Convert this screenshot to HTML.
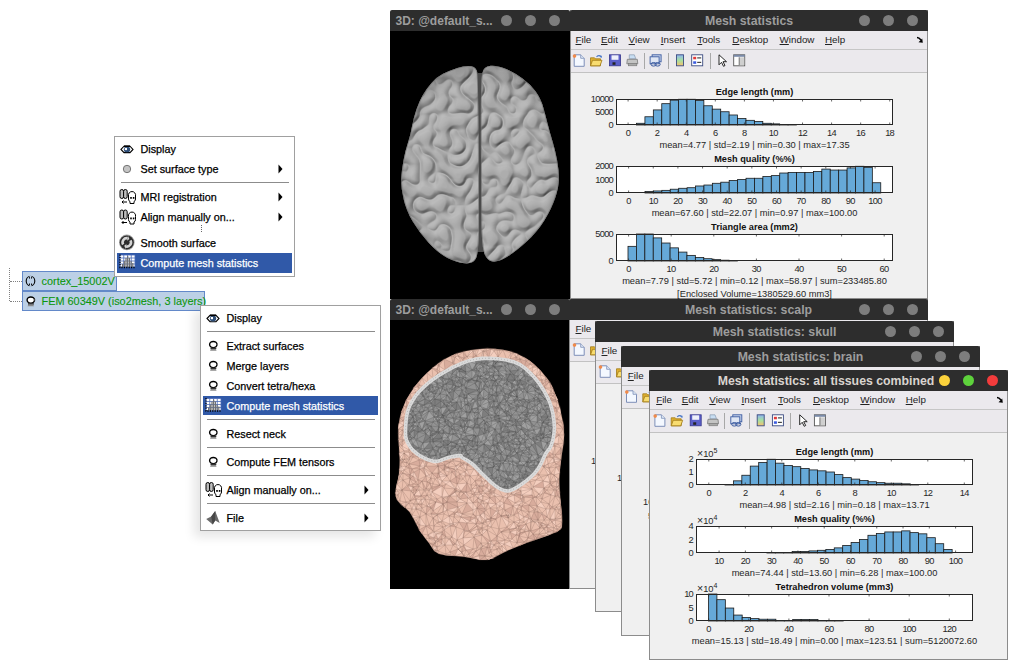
<!DOCTYPE html><html><head><meta charset="utf-8"><style>
*{margin:0;padding:0;box-sizing:content-box}
html,body{width:1018px;height:668px;overflow:hidden;background:#fff;position:relative;font-family:"Liberation Sans", sans-serif}
div{position:absolute}
.ttl{position:absolute;height:21px;line-height:23px;font-size:12.3px;font-weight:bold;white-space:nowrap}
.mb{position:absolute;font-size:9.8px;color:#222;white-space:nowrap;line-height:12px}
.mb u{text-decoration:underline;text-underline-offset:1px}
.tk{font-family:"Liberation Sans", sans-serif;font-size:9.3px;fill:#262626}
.tn{letter-spacing:-0.7px}
.tt{font-family:"Liberation Sans", sans-serif;font-size:9.2px;font-weight:bold;fill:#111}
.mi{position:absolute;font-size:10.8px;color:#000;white-space:nowrap;line-height:13px;-webkit-text-stroke:0.25px currentColor}
.tr{position:absolute;font-size:10.9px;color:#0c960c;white-space:nowrap;line-height:13px;-webkit-text-stroke:0.1px currentColor}
</style></head><body>
<div style="position:absolute;left:390px;top:10px;width:180px;height:21px;background:#2d2d2d;border-radius:2px 2px 0 0"></div><div class="ttl" style="left:395.5px;top:10px;color:#9d9d9d"><span style="font-size:12px">3D: @default_s...</span></div><div style="position:absolute;left:500.5px;top:15px;width:11px;height:11px;border-radius:50%;background:#7d7d7d"></div><div style="position:absolute;left:524.5px;top:15px;width:11px;height:11px;border-radius:50%;background:#7d7d7d"></div><div style="position:absolute;left:548.5px;top:15px;width:11px;height:11px;border-radius:50%;background:#7d7d7d"></div>
<svg style="position:absolute;left:390px;top:31px" width="180" height="268"><rect width="180" height="268" fill="#000"/><defs><clipPath id="hemis"><path d="M81.2,35.2 Q75.4,34.3 67.3,37.0 Q59.3,39.7 53.0,42.8 Q46.7,45.9 41.3,52.2 Q35.9,58.5 32.8,63.9 Q29.6,69.3 26.5,78.3 Q23.4,87.3 22.0,95.3 Q20.7,103.4 18.0,111.5 Q15.3,119.6 13.5,129.3 Q11.7,139.0 11.2,147.5 Q10.8,156.0 13.5,167.7 Q16.2,179.3 22.4,190.1 Q28.7,200.9 38.6,211.7 Q48.5,222.4 57.5,226.9 Q66.5,231.4 74.5,232.3 Q82.6,233.2 85.8,227.8 Q88.9,222.4 89.0,191.7 Q89.0,161.0 88.8,130.5 Q88.5,100.0 88.2,75.0 Q88.0,50.0 87.5,43.0 Q87.1,36.1 81.2,35.2Z"/><path d="M100.6,34.8 Q107.8,34.3 116.8,38.3 Q125.7,42.4 132.9,47.8 Q140.1,53.1 145.5,60.3 Q150.9,67.5 153.6,77.4 Q156.3,87.3 158.1,94.4 Q159.9,101.6 162.6,110.6 Q165.3,119.6 167.1,129.3 Q168.9,139.0 168.9,147.5 Q168.9,156.0 165.3,166.8 Q161.7,177.5 154.5,189.2 Q147.3,200.9 136.5,210.8 Q125.7,220.6 116.8,226.0 Q107.8,231.4 102.4,230.5 Q97.0,229.6 94.3,222.4 Q91.6,215.2 91.4,188.1 Q91.3,161.0 91.0,130.5 Q90.8,100.0 90.9,75.0 Q91.0,50.0 92.2,42.6 Q93.4,35.2 100.6,34.8Z"/></clipPath><radialGradient id="bg1" cx="0.5" cy="0.5" r="0.6"><stop offset="0" stop-color="#a8a8a8"/><stop offset="0.85" stop-color="#a0a0a0"/><stop offset="1" stop-color="#808080"/></radialGradient><filter id="blr" x="-10%" y="-10%" width="120%" height="120%"><feGaussianBlur stdDeviation="0.9"/></filter></defs><path d="M88,42 L92,42 L92.5,150 L93.5,221 L86.5,221 L87.5,150 Z" fill="#4a4a4a"/><g clip-path="url(#hemis)"><defs><filter id="gyri" x="0" y="0" width="180" height="268" filterUnits="userSpaceOnUse"><feTurbulence type="turbulence" baseFrequency="0.065 0.06" numOctaves="1" seed="2" result="t"/><feComponentTransfer in="t" result="a"><feFuncA type="table" tableValues="1 0.25 0 0 0"/></feComponentTransfer><feDiffuseLighting in="a" surfaceScale="-2.2" diffuseConstant="1.14" lighting-color="#b0b0b0" result="l"><feDistantLight azimuth="235" elevation="58"/></feDiffuseLighting></filter><radialGradient id="edg" cx="0.5" cy="0.52" r="0.56"><stop offset="0.75" stop-color="#000" stop-opacity="0"/><stop offset="1" stop-color="#000" stop-opacity="0.22"/></radialGradient></defs><rect width="180" height="268" filter="url(#gyri)"/><rect x="8" y="32" width="164" height="204" fill="url(#edg)"/><path d="M81.2,35.2 Q75.4,34.3 67.3,37.0 Q59.3,39.7 53.0,42.8 Q46.7,45.9 41.3,52.2 Q35.9,58.5 32.8,63.9 Q29.6,69.3 26.5,78.3 Q23.4,87.3 22.0,95.3 Q20.7,103.4 18.0,111.5 Q15.3,119.6 13.5,129.3 Q11.7,139.0 11.2,147.5 Q10.8,156.0 13.5,167.7 Q16.2,179.3 22.4,190.1 Q28.7,200.9 38.6,211.7 Q48.5,222.4 57.5,226.9 Q66.5,231.4 74.5,232.3 Q82.6,233.2 85.8,227.8 Q88.9,222.4 89.0,191.7 Q89.0,161.0 88.8,130.5 Q88.5,100.0 88.2,75.0 Q88.0,50.0 87.5,43.0 Q87.1,36.1 81.2,35.2Z" fill="none" stroke="#707070" stroke-width="1.6" opacity="0.7"/><path d="M100.6,34.8 Q107.8,34.3 116.8,38.3 Q125.7,42.4 132.9,47.8 Q140.1,53.1 145.5,60.3 Q150.9,67.5 153.6,77.4 Q156.3,87.3 158.1,94.4 Q159.9,101.6 162.6,110.6 Q165.3,119.6 167.1,129.3 Q168.9,139.0 168.9,147.5 Q168.9,156.0 165.3,166.8 Q161.7,177.5 154.5,189.2 Q147.3,200.9 136.5,210.8 Q125.7,220.6 116.8,226.0 Q107.8,231.4 102.4,230.5 Q97.0,229.6 94.3,222.4 Q91.6,215.2 91.4,188.1 Q91.3,161.0 91.0,130.5 Q90.8,100.0 90.9,75.0 Q91.0,50.0 92.2,42.6 Q93.4,35.2 100.6,34.8Z" fill="none" stroke="#707070" stroke-width="1.6" opacity="0.7"/></g></svg>
<div style="position:absolute;left:570px;top:10px;width:356px;height:288px;background:#f0f0f0;border:1px solid #8c8c8c;border-top:0"></div><div style="position:absolute;left:570px;top:10px;width:358px;height:21px;background:#2d2d2d;border-radius:2px 2px 0 0"></div><div class="ttl" style="left:570px;top:10px;width:358px;text-align:center;color:#9d9d9d">Mesh statistics</div><div style="position:absolute;left:858.5px;top:15px;width:11px;height:11px;border-radius:50%;background:#7d7d7d"></div><div style="position:absolute;left:882.5px;top:15px;width:11px;height:11px;border-radius:50%;background:#7d7d7d"></div><div style="position:absolute;left:906.5px;top:15px;width:11px;height:11px;border-radius:50%;background:#7d7d7d"></div><div style="position:absolute;left:571px;top:31px;width:356px;height:18px;background:#ebe9ed;border-bottom:1px solid #c6c6c6"></div><div class="mb" style="left:575.5px;top:34px"><u>F</u>ile</div><div class="mb" style="left:601px;top:34px"><u>E</u>dit</div><div class="mb" style="left:628.6px;top:34px"><u>V</u>iew</div><div class="mb" style="left:660.8px;top:34px"><u>I</u>nsert</div><div class="mb" style="left:697.3px;top:34px"><u>T</u>ools</div><div class="mb" style="left:732.3px;top:34px"><u>D</u>esktop</div><div class="mb" style="left:779.6px;top:34px"><u>W</u>indow</div><div class="mb" style="left:825px;top:34px"><u>H</u>elp</div><svg style="position:absolute;left:916px;top:36px" width="8" height="8"><path d="M1,1.5 Q3,1.5 5,4" fill="none" stroke="#000" stroke-width="1.6"/><path d="M6.8,6.8 L2.5,6.2 L6.2,2.5 Z" fill="#000"/></svg><div style="position:absolute;left:571px;top:50px;width:356px;height:22px;background:#ebe9ed;border-bottom:1px solid #c2c2c2"></div><svg style="position:absolute;left:570px;top:50px" width="358" height="22"><path d="M4.2,4.8 h6.5 l3.5,3.5 v8 h-10 z" fill="#f4f8ff" stroke="#7d8fb8" stroke-width="1"/><path d="M10.7,4.8 v3.5 h3.5" fill="#dde6f5" stroke="#7d8fb8" stroke-width="0.8"/><circle cx="4.5" cy="6.1" r="1.8" fill="#f08a4a"/><path d="M20.5,7.8 h4 l1,1 h5 v7 h-10 z" fill="#e0b030" stroke="#a07a18" stroke-width="0.8"/><path d="M20.5,15.8 l2,-5.5 h9.5 l-2,5.5 z" fill="#f8dc70" stroke="#a07a18" stroke-width="0.8"/><path d="M26.5,6.8 q2.5,-2.5 5,0" fill="none" stroke="#4a78c8" stroke-width="1.1"/><path d="M31.8,8.1 l-0.2,-2.6 l-2.2,1.2 z" fill="#4a78c8"/><rect x="39.5" y="4.8" width="11" height="11" fill="#5a5ec8" stroke="#34348a" stroke-width="0.8"/><rect x="41.5" y="5.3" width="7" height="4.5" fill="#eef0fa"/><rect x="42.5" y="12.3" width="3" height="2.5" fill="#222"/><path d="M59.3,4.8 h5 l1.5,4 h-6.5 z" fill="#c8ddf2" stroke="#8a9ab0" stroke-width="0.7"/><path d="M57.3,9.3 h10 l0.5,4.5 h-11 z" fill="#c4c4c4" stroke="#7a7a7a" stroke-width="0.8"/><rect x="58.3" y="13.3" width="8.5" height="2.5" fill="#a8a8a8" stroke="#777" stroke-width="0.6"/><line x1="74.5" y1="3" x2="74.5" y2="19" stroke="#a8a8a8" stroke-width="1"/><rect x="82.1" y="4.8" width="9" height="7" fill="#c8d4ec" stroke="#3a5aa0" stroke-width="0.9"/><rect x="80.1" y="6.8" width="9" height="7" fill="#dfe6f4" stroke="#3a5aa0" stroke-width="0.9"/><ellipse cx="83.6" cy="14.3" rx="2.6" ry="1.8" fill="none" stroke="#3a5aa0" stroke-width="1"/><ellipse cx="87.6" cy="14.3" rx="2.6" ry="1.8" fill="none" stroke="#3a5aa0" stroke-width="1"/><line x1="98.5" y1="3" x2="98.5" y2="19" stroke="#a8a8a8" stroke-width="1"/><defs><linearGradient id="cg1064" x1="0" y1="0" x2="0" y2="1"><stop offset="0" stop-color="#8fb4f0"/><stop offset="0.5" stop-color="#a6e0a0"/><stop offset="1" stop-color="#f5c070"/></linearGradient></defs><rect x="106.5" y="4.8" width="7" height="11" fill="url(#cg1064)" stroke="#3a4a80" stroke-width="0.9"/><rect x="121.7" y="4.8" width="11" height="11" fill="#fff" stroke="#3a4a80" stroke-width="0.9"/><rect x="123.2" y="6.8" width="3" height="2.5" fill="#e03a3a"/><rect x="123.2" y="11.3" width="3" height="2.5" fill="#3a5ae0"/><rect x="127.2" y="7.3" width="4" height="1.2" fill="#444"/><rect x="127.2" y="11.8" width="4" height="1.2" fill="#444"/><line x1="140.5" y1="3" x2="140.5" y2="19" stroke="#a8a8a8" stroke-width="1"/><path d="M149.0,4.8 v10 l2.5,-2.5 l2,4 l1.5,-0.8 l-2,-3.8 h3.5 z" fill="#fff" stroke="#111" stroke-width="0.9"/><rect x="163.7" y="4.8" width="11" height="11" fill="#fff" stroke="#555" stroke-width="0.9"/><rect x="163.7" y="4.8" width="11" height="2" fill="#7a8aa8"/><rect x="169.2" y="7.3" width="5" height="8" fill="#cfcfcf"/><line x1="169.2" y1="7.3" x2="169.2" y2="15.3" stroke="#555" stroke-width="0.8"/></svg>
<svg style="position:absolute;left:0;top:0" width="1018" height="668"><rect x="616" y="99" width="277" height="26" fill="#fff"/><rect x="636.50" y="123.28" width="8.42" height="1.72" fill="#66a9d8" stroke="#1a1a1a" stroke-width="0.8"/><rect x="644.92" y="116.76" width="8.42" height="8.24" fill="#66a9d8" stroke="#1a1a1a" stroke-width="0.8"/><rect x="653.34" y="109.92" width="8.42" height="15.08" fill="#66a9d8" stroke="#1a1a1a" stroke-width="0.8"/><rect x="661.76" y="103.68" width="8.42" height="21.32" fill="#66a9d8" stroke="#1a1a1a" stroke-width="0.8"/><rect x="670.18" y="100.17" width="8.42" height="24.83" fill="#66a9d8" stroke="#1a1a1a" stroke-width="0.8"/><rect x="678.60" y="99.26" width="8.42" height="25.74" fill="#66a9d8" stroke="#1a1a1a" stroke-width="0.8"/><rect x="687.02" y="99.26" width="8.42" height="25.74" fill="#66a9d8" stroke="#1a1a1a" stroke-width="0.8"/><rect x="695.44" y="100.56" width="8.42" height="24.44" fill="#66a9d8" stroke="#1a1a1a" stroke-width="0.8"/><rect x="703.86" y="105.76" width="8.42" height="19.24" fill="#66a9d8" stroke="#1a1a1a" stroke-width="0.8"/><rect x="712.28" y="109.14" width="8.42" height="15.86" fill="#66a9d8" stroke="#1a1a1a" stroke-width="0.8"/><rect x="720.70" y="111.74" width="8.42" height="13.26" fill="#66a9d8" stroke="#1a1a1a" stroke-width="0.8"/><rect x="729.12" y="114.99" width="8.42" height="10.01" fill="#66a9d8" stroke="#1a1a1a" stroke-width="0.8"/><rect x="737.54" y="118.50" width="8.42" height="6.50" fill="#66a9d8" stroke="#1a1a1a" stroke-width="0.8"/><rect x="745.96" y="120.32" width="8.42" height="4.68" fill="#66a9d8" stroke="#1a1a1a" stroke-width="0.8"/><rect x="754.38" y="121.52" width="8.42" height="3.48" fill="#66a9d8" stroke="#1a1a1a" stroke-width="0.8"/><rect x="762.80" y="123.28" width="8.42" height="1.72" fill="#66a9d8" stroke="#1a1a1a" stroke-width="0.8"/><rect x="771.22" y="123.88" width="8.42" height="1.12" fill="#66a9d8" stroke="#1a1a1a" stroke-width="0.8"/><rect x="779.64" y="124.48" width="8.42" height="0.52" fill="#66a9d8" stroke="#1a1a1a" stroke-width="0.8"/><rect x="788.06" y="124.74" width="8.42" height="0.26" fill="#66a9d8" stroke="#1a1a1a" stroke-width="0.8"/><rect x="616.5" y="99.5" width="276" height="25" fill="none" stroke="#262626" stroke-width="1"/><line x1="628.10" y1="125" x2="628.10" y2="122.5" stroke="#262626" stroke-width="0.7"/><line x1="628.10" y1="99" x2="628.10" y2="101.5" stroke="#262626" stroke-width="0.7"/><text x="628.00" y="135.5" text-anchor="middle" class="tk tn">0</text><line x1="657.17" y1="125" x2="657.17" y2="122.5" stroke="#262626" stroke-width="0.7"/><line x1="657.17" y1="99" x2="657.17" y2="101.5" stroke="#262626" stroke-width="0.7"/><text x="657.07" y="135.5" text-anchor="middle" class="tk tn">2</text><line x1="686.24" y1="125" x2="686.24" y2="122.5" stroke="#262626" stroke-width="0.7"/><line x1="686.24" y1="99" x2="686.24" y2="101.5" stroke="#262626" stroke-width="0.7"/><text x="686.14" y="135.5" text-anchor="middle" class="tk tn">4</text><line x1="715.31" y1="125" x2="715.31" y2="122.5" stroke="#262626" stroke-width="0.7"/><line x1="715.31" y1="99" x2="715.31" y2="101.5" stroke="#262626" stroke-width="0.7"/><text x="715.21" y="135.5" text-anchor="middle" class="tk tn">6</text><line x1="744.38" y1="125" x2="744.38" y2="122.5" stroke="#262626" stroke-width="0.7"/><line x1="744.38" y1="99" x2="744.38" y2="101.5" stroke="#262626" stroke-width="0.7"/><text x="744.28" y="135.5" text-anchor="middle" class="tk tn">8</text><line x1="773.45" y1="125" x2="773.45" y2="122.5" stroke="#262626" stroke-width="0.7"/><line x1="773.45" y1="99" x2="773.45" y2="101.5" stroke="#262626" stroke-width="0.7"/><text x="773.35" y="135.5" text-anchor="middle" class="tk tn">10</text><line x1="802.52" y1="125" x2="802.52" y2="122.5" stroke="#262626" stroke-width="0.7"/><line x1="802.52" y1="99" x2="802.52" y2="101.5" stroke="#262626" stroke-width="0.7"/><text x="802.42" y="135.5" text-anchor="middle" class="tk tn">12</text><line x1="831.59" y1="125" x2="831.59" y2="122.5" stroke="#262626" stroke-width="0.7"/><line x1="831.59" y1="99" x2="831.59" y2="101.5" stroke="#262626" stroke-width="0.7"/><text x="831.49" y="135.5" text-anchor="middle" class="tk tn">14</text><line x1="860.66" y1="125" x2="860.66" y2="122.5" stroke="#262626" stroke-width="0.7"/><line x1="860.66" y1="99" x2="860.66" y2="101.5" stroke="#262626" stroke-width="0.7"/><text x="860.56" y="135.5" text-anchor="middle" class="tk tn">16</text><line x1="889.73" y1="125" x2="889.73" y2="122.5" stroke="#262626" stroke-width="0.7"/><line x1="889.73" y1="99" x2="889.73" y2="101.5" stroke="#262626" stroke-width="0.7"/><text x="889.63" y="135.5" text-anchor="middle" class="tk tn">18</text><text x="613.1" y="102.20" text-anchor="end" class="tk tn">10000</text><text x="613.1" y="115.20" text-anchor="end" class="tk tn">5000</text><text x="613.1" y="128.20" text-anchor="end" class="tk tn">0</text><text x="754.5" y="94.5" text-anchor="middle" class="tt">Edge length (mm)</text><text x="754.5" y="148.0" text-anchor="middle" class="tk">mean=4.77 | std=2.19 | min=0.30 | max=17.35</text><rect x="616" y="166" width="277" height="27" fill="#fff"/><rect x="645.00" y="191.51" width="8.42" height="1.49" fill="#66a9d8" stroke="#1a1a1a" stroke-width="0.8"/><rect x="653.42" y="190.95" width="8.42" height="2.05" fill="#66a9d8" stroke="#1a1a1a" stroke-width="0.8"/><rect x="661.84" y="190.35" width="8.42" height="2.65" fill="#66a9d8" stroke="#1a1a1a" stroke-width="0.8"/><rect x="670.26" y="189.22" width="8.42" height="3.78" fill="#66a9d8" stroke="#1a1a1a" stroke-width="0.8"/><rect x="678.68" y="188.28" width="8.42" height="4.72" fill="#66a9d8" stroke="#1a1a1a" stroke-width="0.8"/><rect x="687.10" y="187.71" width="8.42" height="5.29" fill="#66a9d8" stroke="#1a1a1a" stroke-width="0.8"/><rect x="695.52" y="185.98" width="8.42" height="7.02" fill="#66a9d8" stroke="#1a1a1a" stroke-width="0.8"/><rect x="703.94" y="185.03" width="8.42" height="7.96" fill="#66a9d8" stroke="#1a1a1a" stroke-width="0.8"/><rect x="712.36" y="183.28" width="8.42" height="9.72" fill="#66a9d8" stroke="#1a1a1a" stroke-width="0.8"/><rect x="720.78" y="182.20" width="8.42" height="10.80" fill="#66a9d8" stroke="#1a1a1a" stroke-width="0.8"/><rect x="729.20" y="180.58" width="8.42" height="12.42" fill="#66a9d8" stroke="#1a1a1a" stroke-width="0.8"/><rect x="737.62" y="179.50" width="8.42" height="13.50" fill="#66a9d8" stroke="#1a1a1a" stroke-width="0.8"/><rect x="746.04" y="178.26" width="8.42" height="14.74" fill="#66a9d8" stroke="#1a1a1a" stroke-width="0.8"/><rect x="754.46" y="178.26" width="8.42" height="14.74" fill="#66a9d8" stroke="#1a1a1a" stroke-width="0.8"/><rect x="762.88" y="176.53" width="8.42" height="16.47" fill="#66a9d8" stroke="#1a1a1a" stroke-width="0.8"/><rect x="771.30" y="175.61" width="8.42" height="17.39" fill="#66a9d8" stroke="#1a1a1a" stroke-width="0.8"/><rect x="779.72" y="173.02" width="8.42" height="19.98" fill="#66a9d8" stroke="#1a1a1a" stroke-width="0.8"/><rect x="788.14" y="172.48" width="8.42" height="20.52" fill="#66a9d8" stroke="#1a1a1a" stroke-width="0.8"/><rect x="796.56" y="172.48" width="8.42" height="20.52" fill="#66a9d8" stroke="#1a1a1a" stroke-width="0.8"/><rect x="804.98" y="172.48" width="8.42" height="20.52" fill="#66a9d8" stroke="#1a1a1a" stroke-width="0.8"/><rect x="813.40" y="171.40" width="8.42" height="21.60" fill="#66a9d8" stroke="#1a1a1a" stroke-width="0.8"/><rect x="821.82" y="169.08" width="8.42" height="23.92" fill="#66a9d8" stroke="#1a1a1a" stroke-width="0.8"/><rect x="830.24" y="170.05" width="8.42" height="22.95" fill="#66a9d8" stroke="#1a1a1a" stroke-width="0.8"/><rect x="838.66" y="170.05" width="8.42" height="22.95" fill="#66a9d8" stroke="#1a1a1a" stroke-width="0.8"/><rect x="847.08" y="167.89" width="8.42" height="25.11" fill="#66a9d8" stroke="#1a1a1a" stroke-width="0.8"/><rect x="855.50" y="166.27" width="8.42" height="26.73" fill="#66a9d8" stroke="#1a1a1a" stroke-width="0.8"/><rect x="863.92" y="167.35" width="8.42" height="25.65" fill="#66a9d8" stroke="#1a1a1a" stroke-width="0.8"/><rect x="872.34" y="182.74" width="8.42" height="10.26" fill="#66a9d8" stroke="#1a1a1a" stroke-width="0.8"/><rect x="616.5" y="166.5" width="276" height="26" fill="none" stroke="#262626" stroke-width="1"/><line x1="628.60" y1="193" x2="628.60" y2="190.5" stroke="#262626" stroke-width="0.7"/><line x1="628.60" y1="166" x2="628.60" y2="168.5" stroke="#262626" stroke-width="0.7"/><text x="628.50" y="203.5" text-anchor="middle" class="tk tn">0</text><line x1="653.25" y1="193" x2="653.25" y2="190.5" stroke="#262626" stroke-width="0.7"/><line x1="653.25" y1="166" x2="653.25" y2="168.5" stroke="#262626" stroke-width="0.7"/><text x="653.15" y="203.5" text-anchor="middle" class="tk tn">10</text><line x1="677.90" y1="193" x2="677.90" y2="190.5" stroke="#262626" stroke-width="0.7"/><line x1="677.90" y1="166" x2="677.90" y2="168.5" stroke="#262626" stroke-width="0.7"/><text x="677.80" y="203.5" text-anchor="middle" class="tk tn">20</text><line x1="702.55" y1="193" x2="702.55" y2="190.5" stroke="#262626" stroke-width="0.7"/><line x1="702.55" y1="166" x2="702.55" y2="168.5" stroke="#262626" stroke-width="0.7"/><text x="702.45" y="203.5" text-anchor="middle" class="tk tn">30</text><line x1="727.20" y1="193" x2="727.20" y2="190.5" stroke="#262626" stroke-width="0.7"/><line x1="727.20" y1="166" x2="727.20" y2="168.5" stroke="#262626" stroke-width="0.7"/><text x="727.10" y="203.5" text-anchor="middle" class="tk tn">40</text><line x1="751.85" y1="193" x2="751.85" y2="190.5" stroke="#262626" stroke-width="0.7"/><line x1="751.85" y1="166" x2="751.85" y2="168.5" stroke="#262626" stroke-width="0.7"/><text x="751.75" y="203.5" text-anchor="middle" class="tk tn">50</text><line x1="776.50" y1="193" x2="776.50" y2="190.5" stroke="#262626" stroke-width="0.7"/><line x1="776.50" y1="166" x2="776.50" y2="168.5" stroke="#262626" stroke-width="0.7"/><text x="776.40" y="203.5" text-anchor="middle" class="tk tn">60</text><line x1="801.15" y1="193" x2="801.15" y2="190.5" stroke="#262626" stroke-width="0.7"/><line x1="801.15" y1="166" x2="801.15" y2="168.5" stroke="#262626" stroke-width="0.7"/><text x="801.05" y="203.5" text-anchor="middle" class="tk tn">70</text><line x1="825.80" y1="193" x2="825.80" y2="190.5" stroke="#262626" stroke-width="0.7"/><line x1="825.80" y1="166" x2="825.80" y2="168.5" stroke="#262626" stroke-width="0.7"/><text x="825.70" y="203.5" text-anchor="middle" class="tk tn">80</text><line x1="850.45" y1="193" x2="850.45" y2="190.5" stroke="#262626" stroke-width="0.7"/><line x1="850.45" y1="166" x2="850.45" y2="168.5" stroke="#262626" stroke-width="0.7"/><text x="850.35" y="203.5" text-anchor="middle" class="tk tn">90</text><line x1="875.10" y1="193" x2="875.10" y2="190.5" stroke="#262626" stroke-width="0.7"/><line x1="875.10" y1="166" x2="875.10" y2="168.5" stroke="#262626" stroke-width="0.7"/><text x="875.00" y="203.5" text-anchor="middle" class="tk tn">100</text><text x="613.1" y="169.20" text-anchor="end" class="tk tn">2000</text><text x="613.1" y="182.70" text-anchor="end" class="tk tn">1000</text><text x="613.1" y="196.20" text-anchor="end" class="tk tn">0</text><text x="754.5" y="161.5" text-anchor="middle" class="tt">Mesh quality (%%)</text><text x="754.5" y="216.0" text-anchor="middle" class="tk">mean=67.60 | std=22.07 | min=0.97 | max=100.00</text><rect x="616" y="234" width="277" height="27" fill="#fff"/><rect x="628.00" y="246.34" width="8.42" height="14.66" fill="#66a9d8" stroke="#1a1a1a" stroke-width="0.8"/><rect x="636.42" y="234.00" width="8.42" height="27.00" fill="#66a9d8" stroke="#1a1a1a" stroke-width="0.8"/><rect x="644.84" y="234.00" width="8.42" height="27.00" fill="#66a9d8" stroke="#1a1a1a" stroke-width="0.8"/><rect x="653.26" y="237.89" width="8.42" height="23.11" fill="#66a9d8" stroke="#1a1a1a" stroke-width="0.8"/><rect x="661.68" y="243.02" width="8.42" height="17.98" fill="#66a9d8" stroke="#1a1a1a" stroke-width="0.8"/><rect x="670.10" y="247.85" width="8.42" height="13.15" fill="#66a9d8" stroke="#1a1a1a" stroke-width="0.8"/><rect x="678.52" y="252.09" width="8.42" height="8.91" fill="#66a9d8" stroke="#1a1a1a" stroke-width="0.8"/><rect x="686.94" y="255.38" width="8.42" height="5.62" fill="#66a9d8" stroke="#1a1a1a" stroke-width="0.8"/><rect x="695.36" y="257.49" width="8.42" height="3.51" fill="#66a9d8" stroke="#1a1a1a" stroke-width="0.8"/><rect x="703.78" y="258.70" width="8.42" height="2.30" fill="#66a9d8" stroke="#1a1a1a" stroke-width="0.8"/><rect x="712.20" y="259.65" width="8.42" height="1.35" fill="#66a9d8" stroke="#1a1a1a" stroke-width="0.8"/><rect x="720.62" y="260.19" width="8.42" height="0.81" fill="#66a9d8" stroke="#1a1a1a" stroke-width="0.8"/><rect x="729.04" y="260.51" width="8.42" height="0.49" fill="#66a9d8" stroke="#1a1a1a" stroke-width="0.8"/><rect x="616.5" y="234.5" width="276" height="26" fill="none" stroke="#262626" stroke-width="1"/><line x1="628.60" y1="261" x2="628.60" y2="258.5" stroke="#262626" stroke-width="0.7"/><line x1="628.60" y1="234" x2="628.60" y2="236.5" stroke="#262626" stroke-width="0.7"/><text x="628.50" y="271.5" text-anchor="middle" class="tk tn">0</text><line x1="671.20" y1="261" x2="671.20" y2="258.5" stroke="#262626" stroke-width="0.7"/><line x1="671.20" y1="234" x2="671.20" y2="236.5" stroke="#262626" stroke-width="0.7"/><text x="671.10" y="271.5" text-anchor="middle" class="tk tn">10</text><line x1="713.80" y1="261" x2="713.80" y2="258.5" stroke="#262626" stroke-width="0.7"/><line x1="713.80" y1="234" x2="713.80" y2="236.5" stroke="#262626" stroke-width="0.7"/><text x="713.70" y="271.5" text-anchor="middle" class="tk tn">20</text><line x1="756.40" y1="261" x2="756.40" y2="258.5" stroke="#262626" stroke-width="0.7"/><line x1="756.40" y1="234" x2="756.40" y2="236.5" stroke="#262626" stroke-width="0.7"/><text x="756.30" y="271.5" text-anchor="middle" class="tk tn">30</text><line x1="799.00" y1="261" x2="799.00" y2="258.5" stroke="#262626" stroke-width="0.7"/><line x1="799.00" y1="234" x2="799.00" y2="236.5" stroke="#262626" stroke-width="0.7"/><text x="798.90" y="271.5" text-anchor="middle" class="tk tn">40</text><line x1="841.60" y1="261" x2="841.60" y2="258.5" stroke="#262626" stroke-width="0.7"/><line x1="841.60" y1="234" x2="841.60" y2="236.5" stroke="#262626" stroke-width="0.7"/><text x="841.50" y="271.5" text-anchor="middle" class="tk tn">50</text><line x1="884.20" y1="261" x2="884.20" y2="258.5" stroke="#262626" stroke-width="0.7"/><line x1="884.20" y1="234" x2="884.20" y2="236.5" stroke="#262626" stroke-width="0.7"/><text x="884.10" y="271.5" text-anchor="middle" class="tk tn">60</text><text x="613.1" y="237.20" text-anchor="end" class="tk tn">5000</text><text x="613.1" y="264.20" text-anchor="end" class="tk tn">0</text><text x="754.5" y="229.5" text-anchor="middle" class="tt">Triangle area (mm2)</text><text x="754.5" y="284.0" text-anchor="middle" class="tk">mean=7.79 | std=5.72 | min=0.12 | max=58.97 | sum=233485.80</text><text x="754.5" y="296.8" text-anchor="middle" class="tk">[Enclosed Volume=1380529.60 mm3]</text></svg>
<div style="position:absolute;left:390px;top:299px;width:180px;height:21px;background:#2d2d2d;border-radius:2px 2px 0 0"></div><div class="ttl" style="left:395.5px;top:299px;color:#9d9d9d"><span style="font-size:12px">3D: @default_s...</span></div><div style="position:absolute;left:500.5px;top:304px;width:11px;height:11px;border-radius:50%;background:#7d7d7d"></div><div style="position:absolute;left:524.5px;top:304px;width:11px;height:11px;border-radius:50%;background:#7d7d7d"></div><div style="position:absolute;left:548.5px;top:304px;width:11px;height:11px;border-radius:50%;background:#7d7d7d"></div>
<svg style="position:absolute;left:390px;top:320px" width="180" height="269"><rect width="180" height="269" fill="#000"/><path d="M97.3,28.5 L105.2,28.8 L113.1,29.7 L120.6,31.4 L127.5,33.9 L134.0,37.2 L140.1,41.1 L145.8,45.8 L151.1,51.1 L155.7,56.7 L159.5,62.3 L162.7,68.1 L165.4,74.2 L167.7,80.5 L169.6,87.0 L171.2,93.7 L172.6,100.6 L173.7,107.7 L174.2,115.1 L173.6,123.2 L172.3,131.6 L171.2,139.5 L170.4,146.3 L169.7,152.6 L169.3,158.9 L169.4,165.3 L169.8,171.6 L170.3,178.4 L171.1,186.4 L172.0,194.8 L172.2,201.7 L172.0,205.9 L171.1,208.6 L167.3,211.5 L158.4,215.4 L146.7,219.4 L136.2,223.1 L128.9,225.9 L122.8,228.4 L116.8,230.9 L110.5,234.2 L104.1,237.6 L97.3,239.7 L89.9,239.6 L82.0,238.2 L73.9,236.8 L65.0,236.1 L55.9,235.4 L48.6,233.8 L44.2,230.9 L41.6,227.2 L38.9,223.1 L35.7,218.9 L32.4,214.4 L29.2,209.5 L26.1,203.8 L22.9,197.6 L19.5,192.0 L15.1,187.6 L10.4,183.8 L7.0,180.0 L5.6,176.2 L5.5,172.5 L5.8,168.6 L6.6,164.3 L7.8,159.8 L8.8,155.0 L9.3,150.1 L9.6,145.0 L9.7,139.5 L9.4,133.2 L8.9,126.4 L8.5,120.0 L8.3,114.3 L8.3,108.9 L8.8,103.4 L9.9,97.6 L11.5,91.8 L13.6,85.9 L16.4,80.0 L19.7,74.1 L23.4,68.4 L27.5,63.0 L32.0,57.8 L37.0,52.8 L42.5,47.9 L48.4,43.2 L54.5,39.2 L60.7,36.0 L67.1,33.4 L73.9,31.4 L81.4,29.9 L89.4,28.9 Z" fill="#eac0ae"/><path d="M20,155 20,159 20,158ZM90,74 91,72 96,73ZM74,210 75,211 73,218ZM128,125 128,124 135,126ZM47,227 43,225 45,224ZM74,173 78,178 70,179ZM19,130 17,120 25,129ZM14,86 13,92 11,92ZM40,90 39,92 37,83ZM46,104 48,106 44,108ZM81,197 85,198 80,201ZM131,137 136,140 129,139ZM111,129 116,132 117,136ZM33,141 29,140 34,135ZM75,156 75,152 80,156ZM160,80 166,80 167,82ZM88,209 87,206 92,208ZM22,79 16,80 20,74ZM105,67 101,67 100,59ZM34,178 31,176 37,175ZM60,142 55,145 53,141ZM108,56 112,49 113,50ZM78,121 81,123 79,126ZM92,180 92,181 88,178ZM133,87 137,84 138,87ZM90,55 89,53 90,52ZM131,62 126,60 134,57ZM92,208 93,210 89,210ZM107,30 108,30 110,30ZM85,54 86,58 83,57ZM60,206 63,204 64,205ZM68,187 57,190 57,182ZM87,142 84,147 83,143ZM161,78 166,80 160,80ZM116,154 116,151 118,150ZM66,207 60,206 64,205ZM101,174 101,172 104,173ZM111,87 121,92 111,90ZM9,109 8,109 14,105ZM66,157 70,154 70,159ZM50,115 56,114 50,118ZM149,121 154,117 150,124ZM36,169 35,171 34,170ZM85,175 82,174 85,173ZM78,67 67,64 79,66ZM65,125 68,123 71,129ZM128,118 128,120 125,118ZM126,37 123,33 125,33ZM123,48 115,48 122,44ZM60,219 59,219 62,217ZM43,58 43,58 48,53ZM156,104 153,106 152,103ZM115,151 115,152 116,154ZM48,153 47,158 42,153ZM70,146 71,143 73,145ZM164,155 161,154 161,153ZM31,176 25,177 24,175ZM71,56 66,58 70,54ZM59,50 56,58 55,50ZM48,231 45,230 47,227ZM73,32 77,37 74,38ZM106,184 100,188 98,183ZM109,227 110,229 107,229ZM156,104 150,100 158,100ZM151,206 150,204 152,205ZM126,105 115,101 122,96ZM81,132 81,133 75,132ZM157,207 158,205 164,208ZM72,194 67,192 69,189ZM71,129 73,126 75,132ZM68,119 67,122 65,122ZM91,157 92,161 85,161ZM113,58 113,59 110,59ZM129,206 136,204 131,209ZM111,95 107,98 104,89ZM49,154 50,152 57,156ZM68,119 65,122 66,116ZM166,161 161,165 160,162ZM97,227 95,236 91,229ZM19,165 23,164 23,167ZM138,87 137,84 140,85ZM77,110 86,111 79,113ZM32,114 35,116 31,120ZM163,213 163,211 167,212ZM87,206 80,212 79,211ZM82,174 85,175 84,176ZM133,85 133,87 129,83ZM109,223 104,225 107,221ZM99,38 104,31 108,37ZM102,106 107,109 100,115ZM152,207 151,206 152,205ZM84,87 82,93 78,84ZM132,89 133,87 135,91ZM53,184 52,177 53,178ZM144,118 143,122 139,119ZM163,134 160,136 156,130ZM20,137 19,140 19,138ZM111,196 106,199 108,193ZM93,113 96,114 93,114ZM93,50 91,49 94,47ZM68,133 71,129 70,133ZM61,121 62,122 60,124ZM66,168 65,170 65,169ZM93,181 100,178 98,183ZM71,197 77,203 69,202ZM167,162 169,159 169,165ZM98,68 88,63 93,60ZM137,74 142,79 139,82ZM123,186 114,183 117,178ZM82,93 85,97 74,100ZM87,81 86,88 84,87ZM65,172 65,172 67,171ZM129,211 131,209 130,213ZM170,183 170,178 171,186ZM143,113 139,113 144,111ZM46,97 47,93 49,95ZM111,212 107,216 109,209ZM109,113 102,117 100,115ZM163,134 161,127 165,126ZM46,141 50,142 48,146ZM130,213 135,211 135,212ZM85,64 83,65 83,61ZM62,76 61,71 64,71ZM131,151 132,150 134,154ZM136,41 134,48 130,39ZM147,67 144,62 151,63ZM23,98 23,97 25,95ZM114,51 108,56 113,50ZM47,113 49,115 46,117ZM171,134 171,133 171,140ZM65,37 68,36 72,43ZM94,47 91,49 92,43ZM48,146 50,142 55,145ZM49,117 49,115 50,115ZM130,200 128,193 134,197ZM161,98 158,100 158,93ZM48,101 51,97 54,100ZM129,226 134,222 136,223ZM137,149 137,146 139,147ZM59,148 58,147 64,149ZM138,57 134,52 137,50ZM84,139 87,142 83,143ZM67,66 64,64 67,64ZM59,113 58,107 62,110ZM76,172 78,178 74,173ZM36,124 35,127 30,127ZM88,182 83,183 88,178ZM43,191 42,188 46,182ZM53,184 43,191 46,182ZM99,149 98,147 101,148ZM19,148 16,147 19,144ZM123,123 115,122 123,123ZM99,233 101,230 101,232ZM133,85 129,82 132,78ZM13,153 20,155 20,158ZM162,126 164,124 165,126ZM43,117 40,121 39,119ZM43,191 47,194 41,194ZM22,149 19,148 19,144ZM53,184 54,186 53,192ZM70,137 72,133 75,132ZM22,149 20,155 19,148ZM136,98 136,96 142,95ZM171,195 168,193 172,195ZM48,43 49,44 48,45ZM104,155 108,157 105,157ZM113,158 110,154 116,154ZM95,236 89,235 91,229ZM151,63 152,60 153,64ZM142,79 137,74 142,79ZM44,218 45,221 39,218ZM63,94 63,98 61,97ZM41,168 40,163 42,167ZM93,97 91,96 95,95ZM79,67 83,65 84,68ZM109,152 109,154 104,155ZM145,202 148,202 150,208ZM101,224 100,228 98,223ZM106,84 102,88 99,86ZM160,92 166,88 167,91ZM67,83 62,76 69,79ZM30,149 22,149 30,146ZM52,212 54,210 56,217ZM12,126 17,120 19,130ZM142,61 138,57 146,56ZM100,221 98,223 92,215ZM33,96 28,96 34,95ZM104,55 101,56 105,52ZM50,52 49,46 55,50ZM67,164 77,163 71,171ZM77,107 77,110 75,106ZM23,97 17,96 21,87ZM150,143 154,146 154,147ZM83,190 72,194 77,183ZM129,216 130,213 135,212ZM142,201 141,199 143,201ZM73,40 68,36 74,38ZM140,211 141,202 141,211ZM123,186 121,195 115,190ZM64,194 67,192 65,194ZM22,79 26,72 24,79ZM146,104 145,105 145,100ZM48,219 52,214 52,219ZM132,161 131,154 134,154ZM84,45 84,46 82,47ZM52,166 56,164 54,168ZM115,148 113,150 112,146ZM134,48 127,46 130,39ZM171,128 171,134 165,135ZM154,128 153,126 157,128ZM45,223 45,221 46,221ZM103,75 102,75 101,75ZM38,215 44,218 39,218ZM100,132 98,124 108,127ZM74,44 71,46 72,43ZM160,122 160,120 161,121ZM88,97 93,97 86,106ZM36,169 34,170 32,161ZM134,48 136,41 140,44ZM134,222 138,218 137,221ZM148,119 143,122 144,118ZM22,85 17,86 16,80ZM137,118 139,113 141,115ZM162,187 165,189 160,189ZM96,73 98,68 101,75ZM100,178 105,176 106,184ZM42,90 40,92 40,90ZM160,122 157,128 155,124ZM94,192 96,190 94,193ZM88,115 90,121 83,119ZM49,152 48,153 48,146ZM120,136 122,139 117,142ZM32,80 26,72 28,71ZM100,170 101,163 104,167ZM107,188 106,184 110,186ZM87,168 85,173 82,169ZM42,90 43,82 49,83ZM54,186 57,190 53,192ZM70,172 71,171 72,172ZM116,118 123,123 115,119ZM86,64 85,68 85,64ZM108,37 108,43 105,42ZM94,47 99,47 96,51ZM59,89 63,94 57,92ZM88,155 88,155 91,157ZM143,178 145,177 146,177ZM131,209 129,211 129,209ZM121,92 111,95 111,90ZM83,128 81,132 79,126ZM142,79 142,82 139,82ZM54,150 55,146 56,147ZM15,187 17,184 15,188ZM147,218 145,220 143,214ZM13,153 9,155 11,151ZM85,130 87,131 87,133ZM110,108 107,109 110,103ZM97,122 92,127 95,120ZM53,184 46,182 47,179ZM96,73 91,72 91,71ZM43,117 42,113 46,117ZM52,71 52,65 57,68ZM129,185 123,186 125,183ZM158,75 161,73 163,76ZM96,90 96,88 102,88ZM170,189 171,186 172,195ZM104,47 99,47 105,46ZM89,172 85,175 85,173ZM91,96 88,97 86,88ZM157,206 152,203 158,205ZM166,88 157,90 158,83ZM147,140 142,140 140,136ZM142,79 137,74 138,71ZM132,150 131,151 125,148ZM164,124 161,122 168,124ZM132,150 136,150 134,154ZM165,200 165,199 172,198ZM166,170 168,176 165,176ZM110,142 117,136 117,142ZM128,206 129,206 129,209ZM146,79 150,80 151,86ZM164,137 165,135 171,140ZM101,163 99,157 105,157ZM77,163 76,172 71,171ZM63,43 55,50 54,39ZM107,125 98,123 107,120ZM160,62 163,68 161,68ZM73,226 74,225 76,230ZM89,172 89,166 93,171ZM75,70 75,76 68,76ZM154,209 158,212 156,213ZM109,154 108,157 104,155ZM153,161 158,155 160,162ZM125,41 127,39 130,39ZM69,136 70,133 70,137ZM132,150 125,148 129,139ZM126,215 130,213 129,216ZM35,116 38,121 31,120ZM122,44 120,41 125,41ZM136,204 140,211 139,211ZM86,64 86,58 88,63ZM60,124 60,124 59,125ZM154,117 155,124 150,124ZM161,154 158,155 160,153ZM47,195 43,198 43,198ZM127,189 128,193 124,195ZM48,146 42,153 36,146ZM114,183 115,190 113,189ZM117,207 119,209 111,212ZM65,131 62,128 65,127ZM143,167 153,161 154,168ZM65,170 66,168 67,171ZM88,200 86,204 86,204ZM83,51 83,57 76,52ZM105,74 103,75 105,67ZM100,170 104,171 101,172ZM67,164 66,157 70,159ZM60,176 67,182 57,182ZM69,114 66,116 67,110ZM136,140 136,137 138,137ZM19,111 21,110 19,112ZM77,203 71,197 80,201ZM116,78 119,83 113,81ZM48,125 49,117 50,118ZM101,230 100,228 104,225ZM74,100 76,104 75,106ZM49,107 48,110 44,108ZM152,194 157,197 154,200ZM130,165 126,165 127,162ZM136,137 133,136 134,133ZM91,174 89,172 93,171ZM16,96 16,87 21,87ZM40,97 40,92 45,96ZM8,171 8,175 5,173ZM129,185 127,189 123,186ZM23,101 28,96 30,98ZM62,152 59,148 64,149ZM129,68 131,64 138,71ZM90,113 94,115 90,121ZM139,185 146,189 144,190ZM55,122 54,125 48,125ZM54,150 56,147 59,148ZM174,108 171,102 173,101ZM50,142 46,141 48,134ZM53,150 48,146 55,145ZM52,219 52,224 48,221ZM71,56 76,52 71,56ZM157,206 157,207 154,208ZM12,170 8,171 6,169ZM137,100 136,110 135,101ZM168,176 166,170 170,172ZM142,175 145,177 143,178ZM95,173 99,174 100,178ZM144,65 140,69 140,66ZM73,226 76,230 72,232ZM32,184 28,184 28,184ZM12,115 12,110 14,112ZM131,179 131,175 133,177ZM138,140 136,140 138,137ZM161,104 164,106 156,112ZM49,61 45,62 43,58ZM75,76 75,70 77,74ZM40,97 40,100 37,99ZM170,207 172,202 172,206ZM42,172 42,169 50,165ZM113,108 113,105 123,109ZM147,218 149,214 154,216ZM154,67 155,68 154,76ZM51,97 57,92 54,100ZM23,173 23,170 27,170ZM152,60 144,62 146,56ZM149,97 147,91 151,93ZM128,131 120,134 122,128ZM143,214 141,211 150,208ZM156,59 156,57 160,62ZM80,237 86,231 82,238ZM99,149 101,148 101,150ZM107,83 105,80 109,81ZM123,53 123,48 126,52ZM78,142 77,143 78,140ZM43,82 41,83 41,81ZM149,140 147,140 149,128ZM163,76 161,73 164,74ZM27,83 22,85 24,79ZM154,76 150,80 148,75ZM143,87 142,82 151,86ZM65,236 60,232 68,229ZM114,183 110,186 110,181ZM167,167 166,170 165,169ZM153,161 160,163 154,168ZM157,90 160,92 156,91ZM145,220 138,218 143,214ZM126,66 131,64 129,68ZM150,80 154,84 151,86ZM62,52 60,51 65,48ZM49,95 49,93 50,93ZM95,200 97,199 96,202ZM152,60 150,55 156,57ZM49,46 49,44 54,39ZM65,172 65,170 67,171ZM96,88 93,85 97,87ZM128,131 125,136 120,134ZM68,109 68,105 75,106ZM63,66 61,71 57,68ZM139,113 138,111 144,111ZM163,68 165,74 164,74ZM167,103 174,108 173,109ZM12,142 10,145 10,140ZM110,59 113,59 113,61ZM117,195 118,198 111,196ZM83,37 83,31 86,36ZM88,182 91,184 87,188ZM29,210 28,204 30,205ZM99,157 103,155 105,157ZM122,139 120,144 117,142ZM69,103 74,100 75,106ZM99,38 96,31 101,29ZM49,111 55,105 56,114ZM39,113 42,113 42,117ZM96,114 94,109 100,115ZM65,172 59,176 65,169ZM142,140 138,140 138,137ZM21,110 25,109 25,115ZM114,127 113,129 114,126ZM8,109 9,103 14,105ZM36,146 36,141 38,142ZM136,110 126,105 135,101ZM113,177 118,174 117,178ZM80,63 81,63 79,66ZM85,215 92,215 84,217ZM37,99 32,108 30,98ZM154,117 160,120 155,124ZM44,218 46,214 48,219ZM80,178 78,178 76,172ZM52,166 42,172 50,165ZM86,106 77,110 77,107ZM128,127 122,128 123,125ZM67,122 68,123 65,122ZM91,49 87,49 91,42ZM83,128 83,131 81,132ZM122,81 116,78 118,76ZM91,223 87,228 84,217ZM104,58 107,58 105,67ZM32,188 28,184 32,184ZM85,54 89,53 88,56ZM64,64 62,66 61,65ZM17,143 12,142 13,141ZM98,136 99,139 94,138ZM91,42 84,45 89,39ZM126,105 129,112 123,109ZM57,178 60,176 57,182ZM82,82 84,87 78,84ZM151,93 156,91 158,93ZM92,132 87,138 87,133ZM64,44 71,46 65,48ZM66,157 67,164 60,161ZM19,132 23,134 20,137ZM123,85 129,91 121,92ZM62,110 66,116 59,113ZM64,194 64,192 67,192ZM150,55 150,50 151,51ZM141,146 149,155 137,152ZM52,214 52,212 56,217ZM97,134 98,124 100,132ZM144,62 143,61 146,56ZM96,80 99,79 99,86ZM9,160 7,164 8,160ZM132,186 131,190 131,187ZM124,95 129,91 127,95ZM89,152 88,155 84,149ZM149,174 150,176 146,177ZM80,212 88,209 85,215ZM104,47 106,46 105,52ZM110,186 106,184 110,181ZM63,94 61,97 57,92ZM133,87 132,89 129,83ZM148,192 148,200 144,192ZM171,187 170,183 171,186ZM120,39 126,37 125,41ZM102,106 94,109 100,103ZM19,112 18,118 14,112ZM49,44 49,46 48,45ZM107,236 110,234 104,238ZM170,153 166,147 170,146ZM134,177 142,175 143,178ZM66,58 66,57 70,54ZM135,211 139,211 135,212ZM45,111 42,113 44,108ZM69,82 78,84 67,92ZM56,234 61,235 56,235ZM29,210 36,206 32,214ZM146,46 140,44 140,41ZM101,198 106,199 101,201ZM131,151 131,154 129,152ZM126,66 116,61 126,60ZM95,189 94,192 87,188ZM85,130 83,131 84,130ZM125,148 123,144 129,139ZM23,98 23,101 19,100ZM129,91 132,89 135,91ZM73,126 79,126 75,132ZM83,131 85,130 87,133ZM67,182 68,187 57,182ZM140,124 143,122 149,128ZM28,202 28,204 26,204ZM13,153 10,156 9,155ZM37,162 40,163 36,169ZM148,202 152,203 150,204ZM77,48 82,47 78,49ZM152,194 148,200 148,192ZM116,78 113,81 115,78ZM89,236 95,236 90,240ZM132,113 136,110 135,116ZM166,88 170,87 167,91ZM80,59 83,57 83,61ZM83,65 85,68 84,68ZM164,106 165,113 157,114ZM143,87 142,88 141,86ZM61,36 67,33 63,37ZM63,94 59,89 64,87ZM49,46 47,49 48,45ZM32,108 27,107 29,106ZM91,42 85,46 84,45ZM46,97 51,97 48,101ZM163,76 165,74 166,80ZM131,64 131,62 134,57ZM131,175 131,179 124,175ZM88,200 92,203 86,204ZM67,182 70,179 77,183ZM96,42 92,43 93,38ZM20,137 23,134 23,137ZM113,77 118,76 114,78ZM141,146 137,149 139,146ZM129,93 129,94 127,95ZM42,48 47,49 48,53ZM96,95 95,96 95,95ZM161,175 154,173 155,172ZM28,84 33,81 37,83ZM155,113 154,108 156,112ZM71,143 74,143 73,145ZM66,98 63,94 67,92ZM94,109 93,110 86,106ZM115,148 120,148 118,150ZM154,67 156,61 159,62ZM117,40 108,43 108,37ZM160,199 165,200 162,202ZM86,58 85,54 88,56ZM139,192 132,186 139,185ZM132,175 134,177 133,177ZM97,227 101,230 99,233ZM28,165 28,160 32,161ZM113,108 110,108 113,105ZM93,166 95,161 98,163ZM36,206 39,205 43,211ZM62,53 62,52 66,53ZM40,121 43,117 48,125ZM103,75 104,80 102,75ZM157,170 155,172 154,168ZM138,87 138,90 135,91ZM95,236 97,240 90,240ZM47,158 48,153 50,157ZM86,88 88,97 85,97ZM30,149 28,160 24,152ZM148,200 141,199 144,192ZM72,233 68,229 72,232ZM77,203 74,210 69,202ZM163,138 157,137 160,136ZM20,159 23,156 26,162ZM40,73 40,73 43,78ZM38,127 40,121 44,131ZM23,164 26,162 28,165ZM17,102 17,106 14,105ZM100,132 111,129 107,140ZM78,116 79,113 83,119ZM54,125 57,128 53,126ZM94,192 90,195 87,188ZM77,145 78,142 83,143ZM78,140 79,136 82,138ZM78,113 77,110 79,113ZM159,184 162,187 160,189ZM49,117 48,125 46,117ZM136,41 134,37 140,41ZM145,108 151,112 145,111ZM12,115 13,120 8,120ZM110,123 107,120 110,120ZM142,82 146,79 151,86ZM41,81 38,74 43,78ZM136,204 139,198 141,202ZM161,165 167,167 165,169ZM67,176 70,172 69,178ZM97,41 96,42 97,40ZM139,198 134,197 138,194ZM43,82 41,81 43,78ZM77,110 74,114 75,106ZM83,229 79,234 76,230ZM129,91 129,93 127,95ZM98,223 100,228 97,227ZM26,114 26,116 25,115ZM25,109 26,114 25,115ZM48,153 49,154 50,157ZM20,155 22,149 24,152ZM85,46 87,49 85,49ZM28,67 23,68 28,63ZM18,166 21,171 12,170ZM115,152 115,151 116,151ZM69,136 63,140 65,133ZM63,98 66,98 64,106ZM71,46 66,50 65,48ZM161,153 160,153 159,148ZM37,134 37,133 42,133ZM87,113 86,111 87,110ZM92,43 91,49 91,42ZM167,212 167,209 171,209ZM88,63 98,68 91,71ZM154,108 155,113 154,112ZM97,93 98,95 96,95ZM121,92 124,95 122,96ZM48,219 52,219 48,221ZM83,128 85,129 84,130ZM119,210 119,209 126,208ZM46,97 42,99 45,96ZM147,67 144,65 144,62ZM85,161 89,166 86,165ZM99,171 101,172 100,173ZM29,140 30,146 19,144ZM36,156 30,149 33,148ZM25,177 26,179 20,181ZM76,172 77,163 81,171ZM92,127 98,124 92,128ZM159,80 156,80 158,75ZM131,118 132,113 135,116ZM99,157 101,163 98,163ZM93,149 87,142 96,146ZM51,97 52,92 57,92ZM100,200 97,199 101,198ZM96,95 98,95 99,96ZM128,118 125,112 129,112ZM23,170 23,167 27,170ZM128,131 132,132 131,137ZM157,207 163,211 158,212ZM120,144 122,139 123,144ZM116,154 120,150 125,156ZM124,175 125,183 117,178ZM131,64 138,57 140,66ZM139,185 143,178 147,186ZM84,46 85,46 82,47ZM65,151 66,157 62,152ZM101,207 98,206 101,201ZM34,74 38,74 34,78ZM130,200 129,203 124,202ZM42,169 42,167 50,165ZM92,43 91,42 93,38ZM138,111 145,108 144,111ZM97,168 93,166 98,163ZM56,58 50,52 55,50ZM78,121 73,117 78,116ZM89,124 83,123 83,119ZM70,179 67,182 69,178ZM25,129 26,116 30,127ZM62,128 62,127 65,127ZM149,214 147,218 143,214ZM76,104 77,107 75,106ZM64,87 59,89 52,80ZM71,197 81,197 80,201ZM92,56 94,57 93,60ZM23,167 29,166 27,170ZM122,139 123,138 129,139ZM166,80 165,74 168,80ZM127,39 126,37 127,37ZM96,73 99,79 96,79ZM168,159 166,161 164,155ZM64,197 64,194 65,194ZM39,113 42,117 37,114ZM131,154 131,151 134,154ZM120,41 120,39 125,41ZM141,86 138,87 140,85ZM66,53 66,50 70,54ZM87,142 84,139 87,138ZM126,215 129,211 130,213ZM165,200 166,206 162,202ZM31,180 34,178 35,179ZM105,80 107,83 106,84ZM120,148 120,150 118,150ZM120,41 115,48 117,40ZM126,215 122,219 120,212ZM23,156 20,159 20,155ZM99,79 104,80 99,86ZM123,123 123,123 128,124ZM126,60 128,54 134,57ZM150,100 156,104 152,103ZM142,52 138,57 137,50ZM23,134 28,137 23,137ZM104,58 105,67 100,59ZM10,98 16,96 13,101ZM86,58 88,56 93,60ZM89,236 89,235 95,236ZM131,179 133,177 132,181ZM86,197 83,194 86,196ZM33,81 36,81 37,83ZM83,42 82,47 81,41ZM89,166 93,166 93,171ZM91,184 95,189 87,188ZM94,115 96,114 96,119ZM53,184 53,178 57,182ZM110,123 115,123 114,126ZM64,192 64,194 59,196ZM51,84 59,89 52,88ZM57,70 52,71 57,68ZM158,212 163,211 163,213ZM10,124 13,121 12,126ZM137,146 139,146 139,147ZM154,117 155,113 157,114ZM106,46 109,47 105,52ZM108,56 104,55 105,52ZM47,195 47,194 53,192ZM48,134 46,133 49,132ZM38,74 40,73 43,78ZM162,126 161,126 161,122ZM146,79 142,79 148,75ZM68,104 68,105 66,109ZM129,216 134,222 127,223ZM164,97 167,99 164,101ZM93,85 92,89 86,88ZM59,152 54,150 59,148ZM48,134 46,141 44,134ZM106,75 112,79 109,81ZM80,59 80,63 71,56ZM134,52 134,57 133,52ZM124,95 127,95 129,97ZM92,132 87,131 92,128ZM131,175 125,174 131,171ZM84,217 74,225 73,218ZM119,210 126,208 120,212ZM153,126 153,130 149,128ZM44,218 44,212 46,214ZM85,68 88,63 91,71ZM101,221 107,216 107,221ZM89,213 88,209 89,210ZM60,59 59,58 61,55ZM109,152 113,150 110,154ZM78,116 73,117 75,115ZM166,144 171,140 170,146ZM33,141 30,146 29,140ZM9,155 10,156 8,160ZM61,65 59,60 63,59ZM36,156 37,162 32,161ZM131,98 136,98 135,101ZM133,177 133,182 132,181ZM101,198 100,188 106,191ZM129,82 131,77 132,78ZM161,126 160,122 161,122ZM97,240 101,237 104,238ZM69,114 68,119 66,116ZM37,186 41,188 36,194ZM106,46 105,43 108,43ZM143,113 141,115 141,114ZM44,212 52,212 46,214ZM70,101 69,103 69,101ZM96,202 97,199 101,201ZM79,113 87,113 83,119ZM59,148 56,147 58,147ZM63,225 60,219 65,224ZM151,93 151,87 156,91ZM92,180 93,181 92,181ZM39,223 45,223 43,225ZM42,188 40,187 46,182ZM133,94 129,91 135,91ZM95,161 99,157 98,163ZM60,124 65,125 65,127ZM107,109 104,102 110,103ZM161,121 165,113 169,115ZM127,83 129,82 129,83ZM77,203 79,211 74,210Z" fill="#d8ac9c"/><path d="M83,183 83,190 77,183ZM146,56 148,48 150,50ZM143,87 142,88 141,86ZM51,84 59,89 52,88ZM170,207 172,206 171,209ZM56,217 59,219 55,218ZM91,182 88,182 88,178ZM132,161 127,162 125,156ZM157,90 160,92 156,91ZM75,152 77,150 80,156ZM150,143 145,144 147,143ZM10,184 15,187 15,188ZM147,67 144,65 144,62ZM45,111 42,113 44,108ZM157,197 156,189 160,189ZM103,75 104,80 102,75ZM135,128 135,126 138,128ZM168,124 161,122 169,115ZM94,115 96,114 96,119ZM130,213 129,216 129,216ZM168,159 166,161 164,155ZM99,156 99,156 99,152ZM59,71 57,70 57,68ZM22,189 24,184 26,189ZM23,97 17,96 21,87ZM152,194 148,192 152,193ZM92,43 91,42 93,38ZM32,108 40,101 44,108ZM38,128 38,127 44,131ZM132,132 133,136 131,137ZM17,86 22,85 21,87ZM115,123 115,122 121,126ZM165,142 164,139 171,140ZM52,224 52,219 55,225ZM71,197 77,203 69,202ZM31,180 34,178 35,179ZM136,204 135,209 131,209ZM92,203 88,200 90,195ZM8,109 9,103 14,105ZM91,49 93,50 91,51ZM52,161 50,157 57,156ZM134,48 134,52 133,52ZM94,47 91,49 92,43ZM129,53 128,54 126,52ZM78,178 83,183 77,183ZM145,202 148,202 150,208ZM124,175 125,183 117,178ZM117,70 113,77 106,75ZM63,203 63,204 60,204ZM108,193 101,198 106,191ZM128,131 120,134 122,128ZM26,72 23,68 28,71ZM154,146 159,148 154,147ZM92,161 91,157 95,161ZM48,110 47,113 45,111ZM93,110 94,109 93,113ZM154,108 161,104 156,112ZM26,116 18,118 25,115ZM139,113 138,111 144,111ZM158,212 163,211 163,213ZM81,30 83,31 77,37ZM77,145 76,150 73,145ZM68,109 68,105 75,106ZM16,147 14,150 11,146ZM92,43 91,49 91,42ZM150,50 146,46 151,51ZM41,81 38,74 43,78ZM113,77 117,72 118,76ZM10,137 14,133 12,139ZM165,176 161,175 164,170ZM131,179 131,175 133,177ZM36,206 30,205 30,197ZM107,188 106,184 110,186ZM65,37 68,36 72,43ZM107,125 108,125 108,127ZM95,189 96,190 94,192ZM85,97 82,93 82,93ZM126,37 123,33 125,33ZM165,200 165,199 172,198ZM20,107 17,106 18,105ZM96,114 94,109 100,115ZM54,186 53,184 53,184ZM92,153 88,155 89,152ZM88,155 88,155 91,157ZM114,127 115,123 121,126ZM69,136 70,133 70,137ZM61,119 61,121 55,122ZM35,132 34,134 28,128ZM59,50 56,58 55,50ZM46,231 48,231 49,234ZM104,225 101,224 101,221ZM155,68 158,75 154,76ZM79,136 78,140 70,137ZM99,38 104,31 108,37ZM46,214 52,214 48,219ZM160,199 165,189 165,199ZM28,160 23,156 24,152ZM107,188 108,191 106,191ZM123,53 128,54 126,60ZM139,88 142,88 139,93ZM112,226 117,231 113,232ZM92,132 87,131 92,128ZM53,184 43,191 46,182ZM171,134 171,133 171,140ZM43,58 45,62 44,63ZM131,62 126,60 134,57ZM16,86 14,86 16,80ZM142,175 132,175 142,169ZM49,83 51,84 52,88ZM20,107 20,105 22,104ZM126,215 129,211 130,213ZM109,223 115,220 114,224ZM54,186 57,190 53,192ZM8,171 8,175 5,173ZM45,133 48,134 44,134ZM120,136 122,139 117,142ZM141,199 139,198 138,194ZM113,77 118,76 114,78ZM117,136 120,134 120,136ZM77,107 77,110 75,106ZM69,136 68,133 70,133ZM129,185 125,183 132,181ZM164,106 161,104 164,101ZM55,146 54,150 55,145ZM83,190 83,183 87,188ZM85,54 86,58 83,57ZM17,120 18,118 26,116ZM129,53 134,48 133,52ZM92,56 95,54 94,57ZM104,31 99,38 101,29ZM117,70 120,70 117,72ZM88,200 86,196 90,195ZM142,95 149,97 145,100ZM136,96 136,98 131,98ZM87,168 85,173 82,169ZM81,132 81,133 75,132ZM110,186 114,183 113,189ZM166,161 167,162 167,167ZM59,196 63,203 60,204ZM157,207 158,205 164,208ZM149,174 143,167 154,168ZM102,49 104,47 105,52ZM83,194 83,190 87,188ZM26,116 31,120 30,127ZM164,139 164,137 171,140ZM138,137 139,133 140,136ZM52,201 59,196 60,204ZM93,85 93,79 96,80ZM99,79 96,80 96,79ZM101,163 99,157 105,157ZM67,164 71,171 66,168ZM115,152 115,151 116,151ZM110,186 106,184 110,181ZM11,151 9,150 11,146ZM93,85 96,88 92,89ZM119,202 117,207 111,196ZM32,188 31,190 26,189ZM70,146 67,149 66,146ZM72,133 71,129 75,132ZM134,52 134,48 137,50ZM69,136 63,140 65,133ZM66,146 67,149 64,149ZM14,131 12,126 19,130ZM101,163 100,170 97,168ZM30,197 23,198 22,195ZM163,138 164,142 158,144ZM164,155 166,147 170,153ZM99,171 95,173 93,171ZM157,207 157,206 158,205ZM57,131 52,132 54,130ZM99,157 101,163 98,163ZM127,83 124,77 127,77ZM132,175 131,175 131,171ZM92,132 97,134 94,138ZM37,134 37,133 42,133ZM20,107 19,111 17,106ZM96,90 103,89 97,93ZM92,153 93,149 99,152ZM107,216 108,221 107,221ZM63,140 69,136 70,137ZM40,121 38,121 39,119ZM93,176 92,180 88,178ZM88,125 84,126 83,123ZM30,149 30,146 33,148ZM113,77 117,70 117,72ZM43,58 43,58 48,53ZM96,80 99,79 99,86ZM144,71 147,67 148,75ZM23,68 28,67 28,71ZM90,174 89,172 91,174ZM79,67 84,68 78,67ZM48,146 38,142 45,141ZM163,76 161,73 164,74ZM32,80 26,72 28,71ZM9,155 10,156 8,160ZM77,143 74,143 78,140ZM142,82 142,79 142,79ZM87,138 92,132 94,138ZM147,67 154,67 148,75ZM139,133 149,128 140,136ZM116,69 105,74 105,67ZM62,110 64,106 66,109ZM97,168 99,171 93,171ZM82,47 82,49 78,49ZM47,194 47,195 41,194ZM155,60 152,60 156,57ZM111,87 104,89 106,84ZM42,90 41,83 43,82ZM71,227 66,224 67,220ZM33,96 28,96 34,95ZM35,116 37,114 39,119ZM44,218 44,212 46,214ZM21,171 18,166 23,167ZM105,176 104,173 113,177ZM129,185 127,189 123,186ZM72,233 65,236 68,229ZM48,134 46,133 49,132ZM74,236 79,234 76,237ZM99,149 101,150 99,152ZM38,63 36,66 32,58ZM79,67 78,67 79,66ZM71,122 68,119 73,117ZM77,37 83,37 81,41ZM52,132 48,134 49,132ZM52,177 42,172 52,166ZM161,153 161,154 160,153ZM66,57 66,53 70,54ZM156,91 160,92 158,93ZM59,152 54,150 59,148ZM85,215 92,215 84,217ZM122,139 120,144 117,142ZM39,155 41,158 36,156ZM67,192 71,197 65,194ZM149,128 139,133 138,128ZM89,166 88,167 86,165ZM67,192 72,194 71,197ZM112,79 106,75 113,78ZM170,183 170,178 171,186ZM146,115 151,112 150,116ZM140,44 143,47 137,50ZM120,221 122,219 127,223ZM113,58 113,59 110,59ZM84,87 86,88 82,93ZM93,204 93,203 94,202ZM98,123 98,119 100,118ZM128,127 122,128 123,125ZM29,170 31,176 24,175ZM114,126 113,129 111,129ZM41,175 42,172 47,179ZM157,197 152,194 152,193ZM86,64 85,68 85,64ZM82,238 89,236 90,240ZM90,195 94,192 94,193ZM140,159 149,155 146,160ZM61,235 65,236 56,235ZM148,192 146,189 147,186ZM139,146 137,149 139,147ZM133,87 132,89 129,83ZM164,137 163,134 165,135ZM105,67 110,59 105,67ZM97,199 95,200 94,193ZM12,110 14,111 14,112ZM152,203 157,206 152,205ZM132,113 136,110 135,116ZM113,177 118,174 117,178ZM36,169 35,171 34,170ZM79,211 75,211 74,210ZM86,88 85,97 82,93ZM74,225 83,229 76,230ZM88,155 80,156 84,149ZM80,212 88,209 85,215ZM99,47 99,51 96,51ZM19,112 21,110 25,115ZM93,166 95,161 98,163ZM43,82 41,81 43,78ZM70,172 65,172 67,171ZM84,176 85,175 88,178ZM49,107 55,105 49,111ZM93,85 96,80 97,87ZM66,207 67,220 62,217ZM42,133 44,134 44,134ZM121,33 120,39 117,40ZM68,187 77,183 69,189ZM149,174 150,176 146,177ZM75,70 68,76 68,68ZM100,228 101,224 104,225ZM115,48 120,41 122,44ZM59,219 63,225 55,225ZM40,187 37,186 39,184ZM91,223 92,226 91,228ZM137,118 141,115 139,119ZM96,90 95,90 96,88ZM99,79 104,80 99,86ZM109,154 108,157 104,155ZM130,200 129,203 124,202ZM131,167 142,169 131,171ZM78,142 77,143 78,140ZM112,226 109,223 114,224ZM80,76 82,82 78,84ZM131,118 128,124 128,120ZM116,151 115,148 118,150ZM68,104 66,98 69,101ZM26,179 31,180 28,184ZM67,66 64,67 64,64ZM116,118 110,120 113,113ZM67,220 66,224 65,224ZM60,206 56,206 60,204ZM66,98 63,94 67,92ZM39,170 42,172 41,175ZM108,191 108,193 106,191ZM15,187 16,182 17,184ZM140,66 140,69 138,71ZM99,149 101,148 101,150ZM93,53 95,54 93,54ZM138,159 134,163 132,161ZM59,176 60,176 57,178ZM120,144 118,143 117,142ZM34,148 39,155 36,156ZM60,124 60,124 59,125ZM76,52 77,48 78,49ZM71,56 76,52 71,56ZM40,100 42,99 40,101ZM127,210 126,215 120,212ZM14,131 14,133 9,133ZM140,69 144,71 138,71ZM66,168 65,170 65,169ZM90,174 93,176 88,178ZM100,118 98,119 96,119ZM125,136 131,137 129,139ZM51,103 55,105 49,107ZM113,100 113,105 110,103ZM47,227 52,224 55,225ZM67,182 70,179 77,183ZM91,174 95,173 93,176ZM142,140 138,137 140,136ZM76,123 78,121 79,126ZM93,38 91,38 93,31ZM97,134 98,136 94,138ZM86,36 83,31 85,31ZM163,134 161,127 165,126ZM158,212 163,213 158,215ZM93,97 91,96 95,95ZM63,140 71,142 63,141ZM133,182 129,185 132,181ZM83,143 78,142 82,138ZM152,60 150,55 156,57ZM94,115 96,119 90,121ZM153,161 158,155 160,162ZM84,217 74,225 73,218ZM116,69 117,70 105,74ZM98,68 101,67 101,75ZM130,74 129,68 138,71ZM154,209 158,212 156,213ZM127,37 126,37 128,34ZM84,74 80,76 84,68ZM119,209 124,202 126,208ZM92,161 93,166 91,166ZM146,56 142,52 148,48ZM79,136 81,133 82,138ZM106,184 100,188 98,183ZM153,126 149,128 150,124ZM166,80 165,74 168,80ZM99,157 99,156 103,155ZM95,200 90,195 94,193ZM101,230 100,228 104,225ZM141,146 142,140 145,144ZM19,140 17,139 19,138ZM111,129 100,132 108,127ZM55,105 54,103 56,105ZM98,147 97,148 96,146ZM89,172 85,175 85,173ZM56,234 61,235 56,235ZM95,90 94,92 93,91ZM134,163 131,167 130,164ZM66,151 66,157 65,151ZM23,98 19,100 17,96ZM75,76 69,82 69,79ZM131,98 126,105 129,97ZM83,51 76,52 78,49ZM50,52 49,46 55,50ZM115,190 121,195 119,195ZM146,115 148,119 144,118ZM47,195 52,201 49,202ZM12,126 17,120 19,130ZM130,165 127,162 130,164ZM108,221 109,223 107,221ZM99,38 97,41 97,40ZM123,123 117,116 125,118ZM119,195 118,196 116,195ZM143,61 142,61 146,56ZM152,174 149,174 154,168ZM93,181 91,182 92,181ZM128,131 129,128 132,132ZM89,29 93,31 86,36ZM75,156 70,154 75,152ZM101,237 102,236 104,238ZM113,158 116,154 123,163ZM109,154 109,152 110,154ZM77,203 71,197 80,201ZM50,157 49,154 57,156ZM123,138 122,139 120,136ZM138,111 136,110 144,105ZM85,54 89,53 88,56ZM62,53 62,52 66,53ZM49,117 48,125 46,117ZM93,181 100,178 98,183ZM109,163 101,163 105,157ZM55,122 54,125 48,125ZM131,151 131,154 129,152ZM98,68 88,63 93,60ZM83,51 85,54 83,57ZM20,107 21,110 19,111ZM9,160 13,160 7,164ZM67,164 77,163 71,171ZM108,157 109,154 113,158ZM56,206 60,206 54,210ZM141,199 142,201 141,202ZM137,84 132,78 139,82ZM76,172 78,178 74,173ZM93,226 91,229 91,228ZM135,91 138,90 139,93ZM28,128 25,129 30,127ZM69,82 67,83 69,79ZM104,155 103,155 101,150ZM105,176 101,174 104,173ZM35,116 38,121 31,120ZM33,141 35,146 30,146ZM93,85 87,81 91,78ZM117,116 116,115 123,109ZM139,113 137,118 135,116ZM83,65 79,67 79,66ZM60,161 66,168 65,169ZM91,184 94,184 95,189ZM45,221 45,223 39,218ZM119,195 121,195 118,198ZM107,58 110,59 105,67ZM126,105 131,98 135,101ZM63,203 69,202 64,205ZM114,78 118,76 115,78ZM44,212 44,218 38,215ZM126,37 125,33 128,34ZM137,152 138,158 134,154ZM136,204 139,198 141,202ZM108,56 104,55 105,52ZM13,140 13,141 10,140ZM84,147 93,149 89,152ZM20,155 20,159 20,158ZM163,134 156,130 161,127ZM104,80 105,80 106,84ZM57,128 62,127 57,131ZM14,150 11,151 11,146ZM140,162 143,167 142,169ZM153,161 160,163 154,168ZM9,109 8,109 14,105ZM146,160 153,161 143,167ZM47,49 42,48 48,45ZM171,187 170,189 166,187ZM161,104 161,98 164,101ZM13,121 10,124 9,123ZM36,146 35,146 36,141ZM135,209 139,211 135,211ZM13,153 10,156 9,155ZM101,207 98,206 101,201ZM104,102 107,98 108,100ZM9,103 13,101 14,105ZM98,136 100,132 107,140ZM155,68 161,71 158,75ZM50,93 49,93 52,88ZM56,164 60,161 65,169ZM12,170 6,169 7,164ZM66,116 65,122 61,119ZM45,230 42,227 47,227ZM42,99 46,97 48,101ZM46,97 47,93 49,95ZM165,200 166,206 162,202ZM12,170 8,171 6,169ZM170,178 168,176 170,177ZM63,66 64,67 61,71ZM116,154 120,150 125,156ZM133,94 129,94 129,93ZM160,153 158,155 154,147ZM49,154 50,152 57,156ZM40,180 37,175 41,179ZM108,100 109,99 110,103ZM163,138 164,139 164,142ZM104,102 108,100 110,103ZM143,113 141,115 141,114ZM107,83 111,87 106,84ZM46,62 52,65 49,71ZM107,120 98,123 100,118ZM133,177 133,182 132,181ZM144,62 143,61 146,56ZM120,148 120,150 118,150ZM154,146 157,137 158,144ZM142,52 143,47 148,48ZM48,134 52,132 53,141ZM98,68 96,73 91,71ZM128,169 130,165 131,167ZM71,129 72,133 70,133ZM63,204 60,206 60,204ZM14,133 19,132 20,137ZM23,101 22,104 19,100ZM154,84 157,90 151,87ZM41,188 40,187 42,188ZM85,68 88,63 91,71ZM30,146 35,146 33,148ZM47,113 48,110 49,111ZM160,163 153,161 160,162ZM120,148 120,144 123,144ZM114,224 120,221 123,228ZM47,158 52,161 50,165ZM154,128 157,128 156,130ZM101,148 98,145 104,147ZM120,39 120,41 117,40ZM120,150 125,148 125,156ZM13,120 12,115 18,118ZM132,132 129,128 135,128ZM91,49 90,49 87,49ZM67,182 67,176 69,178ZM65,122 62,122 61,119ZM167,167 166,170 165,169ZM115,148 120,148 118,150ZM42,169 42,172 39,170ZM80,178 78,178 76,172ZM45,62 46,62 44,63ZM22,79 22,85 16,80ZM60,176 65,172 67,176ZM52,65 56,62 57,68ZM62,52 66,50 66,53ZM80,201 85,198 86,204ZM40,97 40,92 45,96ZM160,200 160,199 162,202ZM165,74 163,76 164,74ZM112,47 109,47 108,43ZM110,154 115,151 116,154ZM79,113 87,113 83,119ZM137,146 139,146 139,147ZM113,108 110,108 113,105ZM152,60 146,56 150,55ZM93,50 93,53 91,51ZM113,129 116,132 111,129ZM38,63 43,58 44,63ZM59,176 52,177 54,168ZM150,100 151,93 158,93ZM143,87 141,86 142,82ZM131,167 130,165 130,164ZM29,106 27,103 30,98ZM38,128 35,127 38,127ZM168,159 167,162 166,161ZM69,101 66,98 67,92ZM98,124 97,134 92,128ZM97,240 101,237 104,238ZM124,95 127,95 129,97ZM67,66 64,64 67,64ZM142,169 132,175 131,171ZM23,156 20,155 24,152ZM161,153 160,153 159,148ZM92,215 93,210 97,210ZM93,50 94,47 96,51ZM66,224 71,227 68,229ZM37,133 38,128 42,133ZM94,47 96,42 99,47ZM46,71 49,71 52,80ZM156,213 158,215 154,216ZM63,140 63,141 61,141ZM134,133 135,128 138,128ZM132,113 131,118 128,118ZM52,177 59,176 53,178ZM64,192 57,190 68,187ZM107,120 100,118 102,117ZM170,87 171,94 167,91ZM115,122 123,123 121,126ZM144,65 140,66 142,61ZM167,167 167,162 169,165ZM89,124 88,125 83,123ZM134,197 139,198 134,202ZM100,221 101,224 98,223ZM49,115 49,117 46,117ZM114,183 110,186 110,181ZM44,212 52,212 46,214ZM31,180 35,179 32,184ZM109,47 112,49 105,52ZM116,154 115,152 116,151ZM130,200 128,193 134,197ZM128,54 123,53 126,52ZM67,220 74,210 73,218ZM165,108 165,113 164,106ZM148,200 145,202 143,201ZM86,64 85,64 83,61ZM113,158 109,154 110,154ZM96,202 97,199 101,201ZM78,140 79,136 82,138ZM155,134 157,137 154,135ZM150,80 146,79 148,75ZM69,82 78,84 67,92ZM14,133 10,137 9,133ZM61,71 65,69 64,71ZM138,140 139,146 137,146ZM87,142 84,139 87,138ZM51,97 57,92 54,100ZM93,79 91,78 90,74ZM125,174 121,174 128,170ZM68,105 68,104 69,103ZM117,136 116,132 120,134ZM56,164 52,161 60,161ZM151,182 156,189 147,186ZM71,129 65,131 65,127ZM70,179 67,182 69,178ZM129,185 123,186 125,183ZM139,113 143,113 141,114ZM38,121 35,116 39,119ZM109,47 106,46 108,43ZM106,199 101,198 101,198ZM46,221 45,221 48,219ZM17,106 17,102 18,105ZM89,213 88,209 89,210ZM10,137 12,139 10,140ZM98,123 97,122 98,119Z" fill="#f4cebe"/><path d="M34 74L28 71M114 51L108 56M170 146L166 144M74 225L84 217M146 104L146 104M108 43L105 43M19 111L15 111M131 167L128 169M163 138L164 137M99 149L98 147M150 176L149 174M77 145L78 142M41 175L39 170M151 51L156 57M110 234L104 238M68 109L67 110M10 98L10 101M116 78L122 81M28 160L30 149M126 165L130 165M141 211L145 202M104 238L97 240M145 100L149 97M8 114L8 109M85 129L83 128M135 209L131 209M118 143L120 144M116 78L119 83M166 144L165 142M91 72L90 74M129 185L132 181M141 115L144 118M171 140L164 137M16 87L21 87M72 133L71 129M59 148L56 147M86 231L87 228M154 173L152 179M8 109L9 103M77 183L83 183M141 199L144 192M67 66L65 69M161 104L164 106M68 187L64 192M66 58L70 54M40 90L42 90M135 126L131 118M129 152L125 156M85 64L86 64M45 221L45 223M54 150L55 146M144 192L148 200M65 172L60 176M160 199L160 189M50 93L52 92M142 175L145 177M42 169L39 170M109 209L101 207M32 108L30 98M142 169L134 163M165 199L165 189M83 143L82 138M48 134L46 133M28 63L28 67M171 94L167 91M114 224L120 221M32 214L38 215M108 100L107 98M41 168L39 170M157 128L161 127M50 152L48 146M86 204L88 200M65 224L66 224M44 63L46 62M89 152L92 153M13 120L12 115M26 189L31 191M107 167L105 168M110 123L107 120M78 121L76 123M145 105L144 105M109 81L111 87M28 96L25 95M110 234L107 236M68 68L68 76M83 51L83 57M62 217L65 224M82 93L84 87M74 173L72 172M101 150L104 147M129 152L131 151M65 236L72 233M70 137L70 133M71 46L72 43M82 169L85 173M75 152L77 150M48 219L52 214M99 233L101 232M155 68L158 75M156 80L159 82M54 39L63 43M77 74L80 76M113 189L108 191M142 82L142 79M64 194L64 192M115 151L113 150M161 175L157 170M122 44L125 41M80 76L75 76M49 95L52 92M63 98L61 97M156 213L154 216M149 128L143 122M174 115L173 109M150 204L151 206M110 59L113 59M156 130L161 127M111 196L118 198M41 194L41 188M17 86L21 87M91 184L95 189M46 182L39 184M71 197L77 203M70 172L71 171M12 142L16 147M48 101L42 99M109 227L107 229M45 111L48 110M129 94L127 95M123 138L125 136M120 70L116 61M85 46L91 42M92 43L94 47M133 87L133 85M151 93L149 97M17 96L19 100M107 216L111 212M60 161L57 156M53 184L57 182M158 215L158 212M127 189L123 186M141 199L139 192M83 190L83 183M14 150L19 148M89 39L91 38M52 161L50 165M66 109L67 110M28 202L26 200M47 179L41 175M137 146L136 150M159 62L154 67M48 153L49 152M149 155L137 152M55 50L63 43M35 146L36 141M97 210L101 207M136 96L136 98M101 224L98 223M91 51L90 52M120 212L127 210M110 59L107 58M109 147L104 147M136 150L137 149M31 176L24 175M65 169L65 172M98 163L93 166M81 133L75 132M31 176L34 170M88 167L86 165M53 184L53 178M62 53L66 53M21 110L25 109M62 122L61 121M144 190L139 192M131 167L134 163M135 183L133 182M85 54L88 56M98 147L98 145M69 136L63 140M60 161L67 164M23 97L22 87M74 100L85 97M17 86L16 86M40 97L45 96M12 142L11 146M35 116L31 120M141 199L141 202M151 112L154 112M72 232L76 230M27 170L24 175M116 154L118 150M165 169L164 170M128 54L123 53M140 66L144 65M152 103L156 104M141 211L143 214M74 38L73 32M67 171L71 171M25 177L20 181M12 126L17 120M57 178L57 182M101 198L101 198M166 147L161 153M146 160L140 159M99 86L104 80M165 176L166 170M98 119L96 119M117 231L114 224M128 193L124 195M13 160L17 165M42 172L41 175M146 46L148 48M34 68L29 65M48 101L54 100M46 133L44 131M43 82L43 78M114 78L113 81M27 103L22 104M53 184L43 191M168 193L165 199M60 124L65 125M159 167L154 168M107 143L109 147M83 51L76 52M88 200L86 196M88 97L86 106M130 213L126 215M100 59L94 57M106 199L108 193M74 114L68 109M10 184L15 187M76 52L80 59M25 115L26 116M165 113L160 120M167 99L164 101M37 83L41 81M93 60L88 56M112 47L109 47M45 96L40 92M60 206L56 206M97 227L95 236M79 126L73 126M92 128L92 127M89 172L91 174M145 100L137 100M23 156L24 152M118 143L115 148M85 68L86 64M12 170L18 166M28 202L30 197M133 182L132 181M74 237L76 237M13 141L17 143M117 142L120 144M95 96L93 97M68 105L69 103M131 190L139 192M43 198L39 205M15 109L17 106M105 67L101 67M49 234L48 231M44 212L52 212M99 86L106 84M107 167L109 163M143 167L149 174M158 83L166 88M120 70L129 68M99 51L99 47M140 211L143 214M105 168L104 167M91 228L92 226M160 62L163 68M101 221L101 224M165 189L169 190M89 172L93 171M47 194L43 191M64 67L65 69M67 92L67 83M93 54L90 52M137 50L134 52M167 209L166 206M151 182L156 189M87 228L83 229M99 149L99 152M119 195L115 190M120 41L115 48M158 93L158 100M87 138L94 138M90 240L82 238M54 150L57 156M147 67L144 65M28 184L31 180M141 199L139 198M152 174L152 179M173 109L169 115M137 221L134 222M88 155L88 155M78 67L79 67M91 78L90 74M140 162L134 163M29 166L34 170M10 98L11 92M33 96L34 95M129 206L129 203M43 211L44 206M145 144L149 155M65 37L63 43M64 44L63 47M76 230L74 236M81 30L85 31M129 216L134 222M106 75L113 78M101 75L105 67M10 98L13 92M88 115L90 113M56 217L54 210M110 59L113 61M42 71L40 73M122 96L121 92M81 41L77 48M18 105L20 107M146 160L153 161M111 87L121 92M13 140L13 141M102 236L95 236M104 31L99 38M150 204L150 208M104 171L101 172M117 231L113 232M55 122L60 124M23 170L27 170M16 182L17 184M93 176L93 181M93 171L95 173M157 90L166 88M59 196L57 190M43 164L42 167M140 69L138 71M151 51L150 50M145 108L153 106M44 218L44 212M144 62L146 56M80 63L81 63M155 60L156 59M47 227L45 230M88 125L83 123M96 114L100 115M138 159L140 159M39 162L41 158M107 216L101 207M154 76L155 68M105 52L102 49M77 107L75 106M15 139L14 133M83 65L85 64M84 130L83 128M66 109L62 110M66 157L66 151M25 129L30 127M113 30L108 30M12 139L14 133M21 87L23 97M91 157L85 161M169 115L168 124M93 60L94 57M13 153L13 160M63 43L63 47M87 110L86 106M110 108L110 103M140 124L149 128M48 125L43 117M100 118L107 120M130 39L125 41M132 161L130 164M126 165L127 162M137 100L136 98M65 127L62 128M50 142L48 134M88 155L89 152M133 94L129 93M100 178L99 174M120 70L117 70M93 50L94 47M53 184L46 182M173 101L174 108M131 175L132 175M116 132L111 129M97 199L100 200M93 114L90 113M109 147L113 150M150 143L154 147M63 37L65 37M109 227L104 225M87 113L86 111M59 219L60 219M113 150L110 154M44 231L42 227M60 51L62 52M105 176L101 174M171 195L165 199M17 139L14 133M42 227L39 223M90 121L89 124M28 63L32 58M77 203L69 202M45 141L44 134M92 203L87 206M126 37L125 41M79 126L75 132M138 57L142 52M19 183L20 181M104 225L107 229M108 125L109 125M166 161L167 162M32 58L37 53M14 86L16 86M73 126L75 132M42 48L48 53M60 124L59 125M55 218L52 214M172 202L165 200M151 112L153 106M167 167L166 161M100 59L104 58M141 202L136 204M45 230L48 231M128 34L127 37M138 71L130 74M86 197L86 196M39 223L43 225M102 117L107 120M48 43L48 45M25 115L19 112M161 122L168 124M17 102L13 101M23 156L20 159M92 132L94 138M119 83L123 85M17 106L17 102M85 54L85 49M157 207L154 209M26 162L23 164M93 60L86 58M128 118L125 112M89 213L89 210M68 105L75 106M45 141L48 146M45 133L48 134M50 152L49 152M71 56L70 54M159 167L161 165M49 117L50 115M14 133L20 137M101 56L104 58M88 178L85 175M172 198L165 199M19 183L17 184M87 110L87 113M23 68L28 67M52 132L57 131M92 128L92 132M139 147L139 146M117 40L108 43M39 205L36 194M88 209L87 206M67 164L66 168M100 178L93 176M82 169L81 165M70 146L71 143M33 141L30 146M15 111L19 112M35 132L30 127M79 126L78 121M156 80L159 80M57 92L51 97M89 39L91 42M144 118L143 122M118 150L115 148M142 201L141 202M158 155L160 153M82 93L85 97M94 47L96 51M20 192L22 189M140 136L149 128M113 58L116 61M123 53L114 51M75 152L70 146M100 228L101 224M29 166L23 167M52 214L52 212M93 50L91 49M110 181L114 183M132 89L129 91M68 68L75 70M75 106L68 109M18 166L21 171M173 101L167 99M44 63L40 66M99 139L98 145M87 228L84 217M34 68L36 66M21 87L16 96M80 76L84 68M48 106L49 107M77 203L86 204M70 179L77 183M34 78L38 74M96 51L95 54M125 183L132 181M134 133L136 137M92 203L93 203M98 119L100 118M37 186L35 179M123 53L126 60M141 146L149 155M52 88L49 93M161 104L158 103M132 161L134 163M150 55L152 60M40 90L41 83M134 177L135 183M163 68L161 71M106 184L110 181M85 129L84 130M154 147L159 148M41 188L40 187M38 63L43 58M22 79L22 85M93 38L96 42M43 82L42 90M144 105L137 100M10 101L13 101M14 111L12 110M93 50L96 51M110 181L113 177M71 197L69 202M32 114L27 107M131 62L134 57M134 48L137 50M82 169L81 171M138 57L134 52M122 96L126 105M67 171L66 168M52 201L59 196M123 53L126 52M7 180L8 175M125 174L124 175M117 116L116 115M137 74L142 79M162 202L160 200M10 140L10 137M79 234L74 236M66 98L63 98M121 195L123 186M171 140L164 139M77 110L86 106M141 199L148 200M142 61L143 61M170 172L170 177M106 199L101 207M94 193L94 192M42 71L37 68M101 163L100 170M38 128L44 131M97 134L98 136M25 177L24 175M63 203L69 202M165 108L169 115M131 62L126 60M104 238L107 236M161 71L155 68M21 171L20 181M167 167L167 162M67 33L73 32M132 150L134 154M109 209L117 207M80 156L85 161M20 74L26 72M34 95L28 84M61 36L63 43M150 80L146 79M53 184L57 182M115 220L108 221M73 145L76 150M71 197L65 194M92 43L96 42M37 162L32 161M110 123L110 120M82 174L80 178M32 108L29 106M75 106L76 104M117 116L116 118M111 129L113 129M112 79L113 81M129 83L129 91M83 119L79 113M127 83L124 77M40 121L36 124M58 147L66 146M52 201L60 204M143 167L140 162M129 82L133 85M89 53L88 56M67 176L67 182M84 130L85 130M154 200L152 203M77 110L77 107M96 114L96 119M91 51L90 49M48 146L49 152M110 108L113 113M120 134L120 136M117 142L110 142M156 130L157 128M51 103L54 100M46 117L48 125M82 82L86 77M64 64L67 64M174 115L174 123M116 69L116 61M97 41L105 42M147 219L145 220M131 98L126 105M98 183L95 189M83 65L79 66M47 227L48 231M129 93L127 95M48 221L45 224M121 126L122 128M165 108L173 109M156 61L159 62M168 176L165 176M107 167L118 174M69 103L68 104M69 79L68 76M103 75L105 67M137 221L145 220M44 218L39 218M142 169L149 174M114 224L115 220M75 76L78 84M163 68L164 74M161 98L164 97M93 149L97 148M101 198L97 199M52 132L53 126M86 58L88 56M132 132L134 133M20 158L20 155M125 183L117 178M94 92L96 90M99 157L95 161M97 210L92 208M94 109L93 110M167 209L170 207M96 73L101 75M55 145L54 150M42 48L48 43M45 141L38 142M118 143L120 148M37 99L40 101M107 30L108 30M68 229L66 224M103 75L106 75M39 155L42 153M99 86L97 87M94 138L98 136M67 33L63 37M128 34L126 37M127 77L127 83M88 155L92 153M71 227L74 225M137 74L138 71M73 32L77 37M152 103L153 106M61 71L64 71M94 115L96 119M24 152L22 149M96 190L95 189M164 137L164 139M97 122L98 119M57 131L63 132M165 189L166 187M101 198L101 201M163 213L158 212M51 103L49 107M109 113L100 115M165 135L163 134M46 214L52 214M27 103L23 101M64 106L68 104M87 142L83 143M34 135L37 134M12 170L8 171M56 217L52 212M52 166L56 164M28 160L32 161M75 115L78 113M62 127L65 127M47 203L49 202M29 166L27 170M92 161L91 157M109 163L104 167M170 172L166 170M50 142L48 146M68 119L71 122M132 186L139 185M37 83L36 81M50 157L48 153M151 93L147 91M80 63L67 64M83 119L83 123M123 125L122 128M147 186L143 178M158 144L159 148M145 177L149 174M93 85L96 88M48 219L46 214M60 161L62 152M168 80L167 82M128 127L129 128M85 68L91 71M65 236L68 229M128 120L123 123M120 148L120 144M95 189L87 188M163 68L161 68M53 178L57 178M150 124L153 126M169 165L170 172M91 223L92 226M129 203L124 202M74 143L71 143M80 156L77 163M30 197L26 200M118 174L121 174M136 223L134 222M99 51L105 52M37 83L28 84M45 133L44 134M83 143L78 142M39 218L45 223M83 183L87 188M156 189L152 193M147 219L147 218M149 121L143 122M111 196L115 190M46 62L46 71M139 185L143 178M131 190L134 197M108 37L99 38M107 216L97 210M97 122L98 123M100 173L101 174M71 46L77 48M113 105L110 108M115 151L115 152M104 155L109 154M17 106L20 107M72 194L69 189M148 202L150 208M146 177L147 186M104 58L104 55M80 212L79 211M157 206L152 203M23 134L19 130M47 203L51 202M91 228L93 226M76 172L72 172M94 47L96 42M115 122L115 119M79 136L82 138M102 236L101 232M8 109L14 105M83 61L86 64M164 208L166 206M114 126L113 129M59 71L57 68M48 153L42 153M11 92L13 92M55 225L48 231M146 115L148 119M112 226L114 224M74 38L68 36M165 135L165 126M26 204L28 202M108 37L108 43M44 108L40 101M154 128L153 130M63 204L60 206M63 141L61 141M86 231L91 229M157 207L157 206M15 187L17 184M148 119L143 122M56 235L56 234M122 139L120 136M117 136L107 140M77 183L69 189M110 30L108 37M150 124L155 124M69 82L69 79M69 136L70 133M109 227L112 226M131 171L128 169M42 117L43 117M65 172L60 176M52 80L43 78M89 152L84 147M113 77L113 78M65 236L61 235M109 113L113 113M122 81L124 77M9 126L9 123M67 149L70 146M63 141L63 140M14 150L20 155M105 176L113 177M88 125L92 127M140 124L143 122M101 221L107 221M71 171L67 164M23 164L20 159M62 122L65 122M57 128L54 130M126 208L127 205M83 61L80 59M85 54L89 53M66 50L62 52M40 73L43 78M35 179L39 184M90 121L95 120M125 174L121 174M48 45L49 46M107 143L110 142M165 126L163 134M79 234L76 237M46 97L51 97M81 123L84 126M18 105L19 100M121 195L115 190M151 87L151 86M58 107L55 105M48 134L44 134M25 129L23 134M36 66L37 68M45 62L43 58M101 172L101 174M62 152L59 148M144 71L144 65M82 49L85 49M88 167L89 172M116 132L117 136M167 103L164 101M66 207L69 202M139 113L144 111M106 184L110 186M116 69L117 70M145 105L137 100M117 142L120 136M101 150L99 152M25 115L18 118M160 122L157 128M129 83L127 83M101 198L106 191M99 171L99 174M167 212L167 209M143 122L139 119M101 150L101 148M28 160L24 152M140 41L146 46M142 79L142 79M134 48L140 44M31 190L31 191M128 125L123 125M139 198L136 204M109 163L113 158M146 177L150 176M79 113L87 113M151 86L147 91M92 161L91 166M73 159L77 163M103 89L96 90M93 38L91 38M79 136L75 132M19 144L30 146M144 65L143 61M156 91L151 93M117 231L110 234M147 67L154 67M156 112L164 106M18 166L17 165M91 96L93 97M8 120L8 114M48 45L47 49M98 68L88 63M13 160L10 156M50 152L57 156M16 80L16 86M66 50L71 46M81 132L75 132M133 177L131 175M112 226L113 232M57 190L64 192M151 112L154 108M78 49L76 52M125 174L131 175M37 133L37 134M89 172L85 175M101 163L104 167M96 88L95 90M46 62L49 71M64 106L62 110M118 150L120 148M37 114L35 116M28 160L23 156M91 174L95 173M109 147L109 152M63 59L61 55M59 196L60 204M115 151L116 154M166 147L164 155M105 67L113 61M121 195L124 195M96 114L100 118M52 80L49 71M93 38L99 38M160 92L166 88M154 117L157 114M96 114L93 114M138 218L139 211M161 165L160 162M130 213L129 216M61 65L59 60M161 165L160 163M68 229L71 227M109 47L105 52M42 153L47 158M47 93L52 88M17 106L18 105M108 56L112 49M12 110L14 105M98 124L108 127M105 52L112 49M119 83L121 92M70 101L67 92M121 84L123 85M71 171L72 172M97 122L95 120M75 76L68 76M66 146L70 146M157 137L154 146M62 127L59 125M91 78L93 79M68 36L73 32M78 67L67 64M68 105L68 104M19 140L19 144M26 116L30 127M52 65L56 62M37 114L39 113M174 108L173 109M86 204L87 206M46 117L43 117M86 106L86 111M17 139L19 138M165 74L168 80M38 74L40 73M65 151L66 157M97 210L93 210M52 161L47 158M27 83L28 84M150 143L154 146M154 108L154 107M90 55L90 52M168 80L170 87M158 205L154 200M57 182L60 176M74 237L65 236M28 160L28 165M142 169L140 162M64 87L63 94M83 229L84 217M94 92L95 95M170 146L166 147M65 236L56 235M14 86L16 80M109 113L102 117M5 173L8 171M145 144L150 143M166 144L159 148M94 115L93 114M74 38L74 44M43 82L41 83M59 176L65 172M130 164L130 165M84 126L83 128M82 138L84 139M63 59L59 60M16 80L20 74M66 207L67 220M155 172L157 170M140 124L139 119M30 205L30 197M148 75L146 79M42 48L43 58M37 133L42 133M46 117L47 113M115 152L116 151M47 179L41 179M157 128L154 128M40 121L44 131M73 226L76 230M99 79L96 79M77 74L75 76M82 47L83 42M82 174L84 176M91 49L91 42M161 175L155 172M95 120L96 119M63 37L63 43M69 178L74 173M34 74L37 68M57 92L54 100M156 130L160 136M67 176L65 172M131 209L130 213M59 89L63 94M91 182L94 184M75 115L73 117M164 208L162 202M86 36L83 31M170 178L170 177M48 221L52 224M10 140L13 141M125 33L126 37M88 182L87 188M166 80L161 78M146 104L144 105M135 126L135 128M91 51L93 53M48 125L49 117M131 179L124 175M102 75L103 75M94 57L95 54M55 225L47 227M156 130L154 128M113 113L116 118M26 116L31 120M48 101L46 97M27 107L25 109M74 31L73 32M116 78L113 81M129 185L131 187M128 206L127 205M23 68L26 72M104 89L111 95M103 75L101 75M68 187L67 182M158 75L159 80M12 142L13 141M138 128L135 128M36 206L38 215M120 39L125 41M129 185L133 182M49 71L46 71M122 219L120 221M48 106L44 108M47 93L49 93M118 198L124 195M129 185L125 183M101 230L101 232M112 47L108 43M146 115L144 118M66 146L71 142M76 172L82 174M92 56L95 54M120 134L122 128M52 177L59 176M34 178L37 175M100 118L98 123M9 160L10 156M15 139L12 139M142 82L141 86M152 194L152 193M98 183L93 181M164 208L163 211M138 87L139 88M164 142L159 148M44 63L45 62M136 223L145 220M66 50L65 48M73 226L72 232M97 240L101 237M53 192L47 194M111 196L108 191M66 116L62 110M165 74L166 80M81 197L72 194M146 177L152 179M74 44L71 46M47 195L43 198M77 48L76 52M154 209L154 208M29 106L27 107M69 101L69 103M106 46L104 47M55 122L50 118M135 101L136 98M105 46L99 47M56 217L52 214M105 157L109 163M101 172L100 173M172 195L169 190M113 58L113 59M85 129L84 126M45 159L50 165M165 74L164 74M124 202L119 202M144 62L152 60M127 46L126 52M83 65L85 68M54 150L53 150M120 150L120 148M57 190L53 192M61 71L59 71M115 123L110 123M133 94L129 94M129 206L128 206M101 148L98 145M90 174L88 178M108 100L109 99M47 203L43 198M129 112L132 113M96 190L98 183M151 112L150 116M144 190L139 185M68 68L65 69M139 113L138 111M148 192L144 192M57 92L52 92M58 147L64 149M85 71L84 74M159 184L165 176M29 140L28 137M84 176L83 183M48 125L50 118M78 49L77 48M138 128L135 126M21 171L23 167M93 110L86 106M14 133L19 138M63 98L63 94M143 113L141 114M105 52L108 56M12 115L14 112M110 142L117 136M160 122L161 126M26 179L20 181M40 73L40 73M44 63L43 58M138 57L142 61M74 44L81 41M112 146L115 148M94 47L99 47M90 121L83 119M22 104L20 105M118 76L124 77M67 33L68 36M150 176L152 174M83 65L79 67M104 89L98 95M167 91L164 97M88 155L89 152M140 136L142 140M130 165L128 169M87 142L96 146M138 128L149 128M90 121L90 113M84 87L86 88M138 137L136 137M30 205L28 204M83 143L84 147M85 215L84 217M148 75L150 80M79 234L76 230M58 107L56 105M166 187L170 189M122 219L127 223M138 194L139 192M45 133L44 131M62 53L60 51M119 195L118 198M41 194L47 194M161 104L158 100M132 132L128 131M143 113L146 115M132 186L135 183M52 214L52 219M101 67L98 68M13 140L15 139M137 149L137 152M111 129L114 126M99 174L101 174M50 165L47 158M48 153L49 154M76 172L80 178M170 87L171 94M41 168L40 163M65 236L60 232M23 173L27 170M155 134L160 136M95 95L97 93M106 184L107 188M111 196L116 195M170 87L166 88M46 221L45 224M131 190L131 187M26 184L26 189M92 208L89 210M171 94L173 101M51 202L49 202M61 55L60 51M56 235L49 234M123 144L120 144M98 206L101 207M28 96L28 84M34 148L42 153M89 166L86 165M19 165L20 159M138 137L142 140M73 159L75 156M74 114L78 113M10 145L11 146M60 142L55 146M146 115L151 112M113 108L116 115M49 234L44 231M141 115L139 119M15 111L14 112M20 74L23 68M134 57L129 53M127 46L129 53M141 146L141 146M162 187L159 184M132 89L135 91M110 234L110 229M142 169L142 175M143 167L153 161M111 212L109 209M105 80L103 75M38 142L36 146M54 186L53 184M149 214L154 209M23 68L28 63M66 53L70 54M131 171L132 175M129 216L129 216M129 68L127 77M139 93L136 96M68 36L73 40M73 218L84 217M7 164L12 170M45 96L42 99M15 187L16 182M101 148L104 147M137 146L139 146M87 129L85 130M105 42L105 43M115 151L116 151M115 151L110 154M63 225L60 219M118 143L117 142M126 208L129 209M93 113L90 113M52 80L49 83M162 126L161 122M48 219L45 221M92 89L86 88M81 63L79 66M113 30L110 30M32 188L26 189M150 55L146 56M91 78L87 81M107 30L108 37M120 150L125 148M68 119L65 122M100 228L97 227M67 164L66 157M166 206L165 200M16 147L17 143M164 97L164 101M50 157L49 154M88 200L85 198M98 68L101 75M164 124L168 124M100 132L98 124M159 82L160 80M90 174L89 172M13 101L16 96M100 115L107 109M114 78L113 77M109 223L115 220M123 85L129 91M158 144L157 137M74 236L72 233M134 177L132 175M95 161L93 166M154 108L154 112M79 126L83 128M120 70L117 72M113 30L121 33M69 79L67 83M83 51L85 54M45 223L43 225M113 58L115 55M152 207L152 205M162 187L170 183M146 177L143 178M121 126L123 125M154 84L157 90M65 224L67 220M161 98L164 101M98 136L107 140M67 110L66 109M115 148L116 151M96 95L97 93M66 50L70 54M111 196L119 202M115 122L123 123M56 58L59 50M171 140L170 146M110 123L114 126M143 201L145 202M135 101L137 100M145 144L154 147M69 114L68 109M54 39L49 44M62 217L54 210M51 103L54 103M134 37L136 41M29 210L26 204M36 81L34 78M36 156L30 149M167 103L164 106M94 193L90 195M83 61L80 63M161 71L161 73M93 110L93 113M31 176L29 170M32 188L32 184M126 215L129 211M128 127L135 126M81 197L85 198M152 174L149 174M80 156L81 165M93 204L93 203M117 195L118 198M61 55L59 58M54 39L61 36M99 47L102 49M82 49L82 47M142 52L143 47M89 236L95 236M61 36L67 33M74 114L75 106M146 104L145 100M164 97L160 92M151 206L152 205M32 161L34 170M73 126L68 123M10 124L9 123M48 146L53 150M55 225L60 232M128 54L126 60M159 167L164 170M128 118L131 118M17 96L23 98M68 229L71 227M32 188L36 194M126 165L128 169M99 157L99 156M141 146L139 146M165 74L163 76M25 129L19 130M63 203L64 205M83 194L83 190M108 56L104 55M85 161L86 165M99 171L100 173M95 95L91 96M60 161L52 161M151 157L149 155M160 120L155 124M9 155L10 156M96 90L97 93M57 92L59 89M12 126L10 124M42 172L52 166M9 126L10 124M101 56L105 52M151 112L154 107M8 171L8 175M93 31L96 31M82 174L85 173M93 91L95 90M71 227L72 232M128 54L126 52M69 178L67 176M130 74L131 77M35 146L36 146M161 98L160 92M107 143L98 145M14 111L14 112M47 195L53 192M52 80L62 76M132 132L133 136M96 73L96 79M41 168L42 169M160 199L165 200M96 90L95 90M154 209L158 212M172 202L172 198M123 109L126 105M140 69L144 71M90 49L90 52M46 221L45 223M156 57L155 60M17 96L23 97M32 108L40 101M162 202L166 206M157 206L152 205M63 204L60 204M164 170L157 170M93 114L93 113M21 110L20 107M14 133L14 131M123 125L128 127M31 120L36 124M130 213L129 211M135 91L129 91M159 184L151 182M83 65L81 63M91 49L94 47M22 195L22 189M48 221L47 227M77 37L83 37M94 115L90 113M126 165L123 163M94 109L96 114M37 83L33 81M72 43L64 44M37 68L40 66M133 94L129 97M101 150L99 149M23 98L23 101M96 95L99 96M74 38L77 37M138 194L139 198M145 144L141 146M42 113L47 113M164 124L161 122M131 209L129 211M62 127L62 128M99 51L95 54M135 128L129 128M28 165L23 167M17 106L19 111M75 156L77 163M24 152L20 155M98 124L97 122M150 100L158 100M174 123L168 124M120 221L127 223M105 67L100 59M60 124L61 121M160 122L161 121M54 39L55 50M113 105L110 103M111 212L119 209M117 195L118 196M73 218L74 210M60 142L63 141M133 94L129 91M99 174L100 173M138 140L142 140M48 101L51 103M77 74L78 67M60 142L53 141M42 48L47 49M156 61L154 67M86 197L85 198M83 194L85 198M147 218L145 220M28 96L23 101M129 216L127 223M167 167L169 169M65 133L63 140M97 168L100 170M48 125L44 131M30 146L33 148M158 75L161 78M19 130L17 120M159 80L160 80M107 120L110 120M115 48L123 48M100 115L102 106M78 140L74 143M107 216L109 209M57 156L49 154M76 123L71 122M171 128L171 134M61 36L63 37M64 205L60 206M63 140L61 141M25 129L28 128M17 106L14 105M65 151L64 149M38 142L44 134M45 111L44 108M19 183L24 184M128 54L129 53M45 133L46 133M64 87L62 76M87 110L93 110M85 215L89 213M154 107L156 104M44 63L43 58M129 209L131 209M54 150L59 152M134 48L134 52M65 131L68 133M141 211L150 208M96 73L90 74M23 156L26 162M100 221L92 215M166 161L160 162M65 151L66 151M82 169L87 168M135 209L139 211M50 142L53 141M70 137L69 136M56 147L55 146M35 171L39 170M111 90L121 92M92 56L93 54M150 143L147 143M139 113L141 114M52 65L52 71M90 121L94 115M120 134L117 136M41 194L43 198M138 218L140 211M135 128L134 133M142 82L142 79M148 119L149 121M138 57L131 64M19 165L17 165M145 202L150 208M50 93L49 93M114 78L113 78M8 114L12 115M48 221L52 219M55 50L49 46M80 76L86 77M167 162L168 159M141 146L137 152M74 114L73 117M120 41L117 40M100 178L105 176M93 226L98 223M101 221L100 221M170 153L169 159M31 176L34 178M168 80L166 80M49 111L56 114M107 30L110 30M161 98L158 93M114 78L118 76M91 157L99 156M93 31L86 36M85 64L85 68M133 177L132 181M162 126L165 126M61 71L62 76M109 223L108 221M21 110L19 112M23 198L20 192M38 127L40 121M73 117L69 114M169 159L169 165M145 100L146 104M50 115L47 113M102 75L104 80M38 128L38 127M109 163L118 174M163 76L161 73M63 59L67 64M20 192L15 188M113 105L113 100M165 108L165 113M36 146L36 141M67 33L74 31M10 98L16 96M21 87L17 96M99 79L96 80M158 103L158 100M65 131L65 127M74 31L81 30M49 95L49 93M23 167L27 170M93 85L86 88M66 98L63 94M63 203L63 204M101 163L97 168M134 202L136 204M73 159L70 154M52 80L64 87M107 98L111 95M89 166L85 161M90 49L87 49M106 191L108 191M98 147L96 146M101 150L103 155M36 219L39 218M132 78L137 74M91 174L93 176M32 184L35 179M145 111L145 108M85 130L87 131M23 156L20 155M117 231L112 226M134 48L133 52M25 95L22 87M38 128L42 133M100 188L106 191M49 132L48 125M10 145L12 142M72 194L83 190M65 133L68 133M151 112L145 108M163 76L158 75M170 183L166 187M89 39L84 45M80 63L80 59M25 95L23 98M156 61L155 60M171 140L171 133M36 206L43 211M118 174L117 178M26 189L28 184M92 127L89 124M23 167L23 164M15 109L15 111M136 150L132 150M116 195L117 195M155 60L153 64M69 82L78 84M104 155L103 155M127 39L125 41M96 31L99 38M67 171L70 172M104 173L101 174M36 206L30 197M121 126L114 127M164 142L165 142M87 129L84 126M77 183L83 190M66 109L68 104M157 137L149 140M27 83L33 81M67 171L65 170M138 71L142 79M49 71L52 71M132 132L131 137M59 148L64 149M138 194L134 197M34 68L34 74M68 68L67 64M166 144L164 142M92 161L85 161M57 190L68 187M148 202L148 200M82 47L85 46M86 77L84 74M156 213L158 212M76 237L80 237M99 139L107 140M19 111L19 112M86 231L91 228M12 170L16 182M134 222L127 223M91 51L91 49M81 123L83 128M111 90L111 87M128 120L131 118M125 156L123 163M34 135L33 141M150 143L149 140M167 167L166 170M25 95L23 97M104 238L102 236M6 169L7 164M17 143L19 144M140 66L138 71M165 199L165 200M66 146L71 143M168 176L170 177M138 87L135 91M55 145L60 142M127 46L123 48M98 206L92 208M22 104L23 101M9 126L12 126M28 165L23 164M31 176L37 175M121 31L123 33M105 80L106 75M137 146L137 149M110 30L108 30M107 120L98 123M48 134L53 141M57 156L53 150M50 152L53 150M49 95L47 93M100 228L104 225M111 90L104 89M106 199L109 209M122 139L120 144M23 198L22 195M60 204L56 206M106 46L105 52M75 152L75 156M54 194L53 192M36 156L33 148M121 195L118 198M101 148L98 147M107 216L115 220M122 81L118 76M140 162L140 159M13 153L10 156M32 108L27 107M118 196L118 198M147 218L154 216M46 231L45 230M165 113L164 106M90 213L89 210M96 190L94 193M145 141L147 140M96 114L94 115M123 138L120 136M53 207L56 206M113 108L110 108M90 55L93 54M93 31L91 38M157 128L153 126M53 207L44 206M97 87L96 80M99 171L95 173M93 149L99 152M56 105L54 103M83 38L86 36M120 212L126 215M95 173L93 176M36 169L39 170M80 76L84 74M83 61L83 65M114 51L115 55M43 198L36 194M97 227L93 226M48 110L47 113M26 204L26 200M158 155L161 154M16 147L11 146M172 195L171 195M55 122L56 114M80 76L82 82M59 89L64 87M160 122L161 122M118 198L124 202M167 167L169 166M121 31L121 33M71 197L67 192M109 227L109 223M170 153L164 155M96 80L96 79M52 132L48 125M32 114L32 108M117 142L117 136M99 79L101 75M81 132L83 128M172 202L170 207M55 225L56 234M32 184L31 180M151 87L157 90M15 188L17 184M101 56L94 57M146 160L143 167M105 29L104 31M69 101L68 104M105 157L103 155M136 150L137 152M68 229L63 225M39 205L44 206M139 185L139 192M53 184L53 184M28 128L30 127M48 53L56 58M29 166L32 161M116 61L126 66M60 124L61 121M161 68L155 68M140 41L136 41M157 128L155 124M118 76L113 77M120 41L120 39M154 117L148 119M166 144L166 147M65 125L65 127M74 44L72 43M67 192L68 187M97 168L93 171M169 159L168 159M62 217L67 220M148 192L146 189M155 113L156 112M142 82L140 85M24 175L20 181M47 203L44 206M140 136L147 140M37 99L34 95M165 135L164 137M97 28L101 29M81 123L83 119M139 133L134 133M80 212L84 217M47 93L46 97M80 212L73 218M96 88L96 90M82 174L81 171M11 92L14 86M107 83L111 87M78 142L82 138M44 218L45 221M68 119L66 116M116 61L126 60M37 53L43 58M148 119L150 116M94 202L95 200M34 135L34 134M101 163L98 163M146 177L151 182M82 238L89 236M109 152L109 154M63 47L59 50M154 168L157 170M99 174L95 173M150 124L149 128M81 132L83 131M28 84L33 81M105 29L101 29M162 202L160 199M158 93L160 92M138 111L144 111M76 172L74 173M43 198L47 195M14 150L11 151M115 123L114 126M143 47L148 48M142 82L151 86M81 41L83 37M123 109L116 115M41 194L36 194M52 177L52 166M91 223L92 215M118 76L118 73M10 184L16 182M39 155L34 148M99 86L96 80M141 146L142 140M105 74L103 75M157 114L156 112M131 171L128 170M156 91L160 92M152 207L154 209M46 117L42 113M129 97L129 94M98 124L98 123M115 123L115 122M32 108L44 108M88 182L88 178M93 60L100 59M66 50L66 53M82 82L78 84M40 180L46 182M39 92L40 92M122 219L126 215M101 198L94 193M104 89L111 87M97 41L99 47M59 219L62 217M49 111L55 105M67 149L75 152M47 179L42 172M95 200L90 195M142 52L137 50M92 180L93 181M115 101L121 92M129 82L127 83M156 57L150 55M52 161L52 166M120 212L119 210M148 192L152 193M151 182L147 186M62 152L66 157M174 108L174 115M60 99L56 105M13 153L20 155M20 158L13 153M87 110L86 111M77 110L74 114M138 158L140 159M96 202L95 200M66 57L66 58M77 110L78 113M133 87L135 91M45 159L47 158M85 54L86 58M91 71L85 71M167 91L160 92M83 128L84 126M97 210L101 221M37 175L39 170M112 79L113 78M166 80L167 82M38 121L31 120M140 211L139 211M83 51L82 49M146 177L145 177M89 236L89 235M140 69L144 65M164 170L166 170M28 202L28 204M65 224L60 219M128 170L121 174M149 97L147 91M38 121L40 121M55 122L61 121M117 72L117 70M37 53L42 48M16 147L19 144M83 119L78 116M98 119L98 123M160 62L159 62M28 84L22 87M148 75L154 67M82 238L86 231M79 136L78 140M138 90L139 88M75 152L80 156M115 122L110 123M37 186L39 184M54 210L52 212M37 68L40 73M143 113L144 111M41 194L47 195M99 86L102 88M142 169L131 167M52 177L54 168M107 109L102 106M140 85L138 87M84 130L83 131M160 162L153 161M72 133L70 137M101 198L100 200M115 122L110 120M150 143L157 137M161 127L163 134M26 72L32 80M129 97L131 98M143 201L142 201M105 46L105 43M77 145L84 147M77 183L67 182M18 166L23 167M76 52L71 56M95 96L95 95M106 184L98 183M93 53L95 54M99 152L97 148M70 146L76 150M59 113L56 114M32 188L31 190M139 113L135 116M109 113L107 120M91 78L86 77M129 152L131 154M104 102L107 109M113 100L121 92M163 138L163 134M162 187L165 176M161 71L164 74M129 206L127 205M36 156L32 161M39 223L39 218M29 210L28 204M109 47L108 43M34 178L31 180M48 125L53 126M67 122L71 122M73 218L75 211M54 168L59 176M87 81L86 77M129 112L136 110M99 171L100 170M142 61L146 56M137 84L138 87M132 113L131 118M97 210L100 221M139 82L142 79M107 216L108 221M26 189L22 189M166 147L159 148M107 167L113 177M148 192L145 191M63 225L65 224M81 197L80 201M26 204L28 204M74 38L73 40M9 133L14 133M67 64L66 58M46 231L48 231M69 79L62 76M160 136L163 134M172 132L171 133M127 189L124 195M127 162L130 165M135 116L131 118M73 159L70 159M127 37L126 37M149 214L143 214M138 218L134 222M94 57L92 56M156 91L158 93M37 133L34 134M82 93L86 88M139 211L135 211M19 140L19 138M87 142L84 147M64 71L68 68M159 184L160 189M156 57L152 60M100 188L98 183M70 172L72 172M75 156L80 156M87 81L86 88M9 150L11 146M22 104L27 107M160 153L161 154M23 98L23 97M77 110L75 106M92 127L95 120M32 114L26 116M42 113L45 111M83 194L87 188M131 137L125 136M106 84L111 87M100 59L101 67M92 208L93 210M47 227L52 224M153 126L154 128M150 176L152 179M104 173L113 177M124 202L117 207M131 179L132 181M139 113L141 115M61 141L53 141M34 95L39 92M65 169L66 168M153 64L154 67M23 134L19 132M121 174L117 178M141 211L141 202M138 159L134 154M86 204L86 204M80 201L85 198M161 71L161 68M155 113L154 112M44 231L46 231M49 61L52 65M104 225L101 230M68 187L57 182M16 87L17 86M43 211L39 205M87 49L91 42M99 156L99 156M107 216L101 221M95 96L100 103M114 127L114 126M120 70L124 77M10 140L12 142M31 191L30 197M141 199L138 194M40 187L42 188M25 115L21 110M92 180L92 181M106 46L105 43M80 178L84 176M167 209L163 211M41 81L41 83M97 28L96 31M75 152L70 154M36 169L37 162M144 62L147 67M79 113L78 113M34 78L33 81M104 80L103 75M67 66L67 64M84 45L85 46M57 156L59 152M134 177L133 177M21 110L19 111M115 101L126 105M50 165L52 166M139 198L134 197M125 156L127 162M15 188L15 187M120 134L123 138M59 58L59 60M85 215L88 209M98 119L95 120M55 105L49 107M123 163L113 158M69 114L66 116M105 74L117 70M171 140L171 134M88 155L91 157M73 117L78 116M140 211L141 202M123 109L117 116M104 55L107 58M63 140L71 142M101 150L104 155M164 137L163 134M80 178L83 183M51 103L48 106M156 80L150 80M174 123L172 132M25 115L25 109M162 126L161 126M136 110L137 100M70 137L78 140M156 213L154 209M49 46L50 52M45 96L46 97M39 119L35 116M112 146L117 142M100 103L99 96M90 174L93 176M77 145L76 150M7 164L9 160M172 132L171 140M36 219L32 214M44 63L46 71M49 95L50 93M29 140L19 144M41 81L43 82M109 81L113 81M161 122L164 124M19 111L20 107M32 214L29 210M50 157L57 156M159 167L157 170M53 184L52 177M131 190L132 186M145 105L146 104M164 208L158 205M109 81L105 80M40 97L42 99M116 61L113 59M86 88L93 91M70 172L65 172M159 82L167 82M48 43L54 39M38 121L36 124M20 192L22 195M109 223L114 224M78 140L82 138M129 216L126 215M47 179L46 182M97 168L93 166M65 48L63 47M62 122L61 119M161 121L169 115M46 104L42 99M131 137L133 136M37 162L39 162M55 225L59 219M84 147L84 149M26 184L28 184M57 131L57 128M131 171L125 174M37 99L32 108M92 203L94 202M75 156L70 154M59 196L64 194M57 70L57 68M121 33L123 33M146 46L143 47M104 31L108 37M159 184L152 179M133 94L135 91M48 219L48 221M137 118L135 116M60 204L60 206M62 53L62 52M125 118L128 120M11 146L11 151M110 154L109 154M126 37L127 39M105 157L101 163M165 126L161 127M134 48L130 39M40 180L41 179M137 149L139 146M154 168L149 174M93 85L97 87M112 146L113 150M161 175L159 184M40 66L46 71M139 93L142 88M61 65L56 62M62 152L59 152M150 100L149 97M158 155L149 155M151 182L152 179M51 84L49 83M171 140L165 135M69 202L64 197M157 197L160 200M94 92L93 91M120 70L127 77M145 141L147 143M81 133L83 131M65 170L65 172M15 139L17 143M154 173L152 174M172 195L172 198M56 114L55 105M169 159L164 155M94 184L95 189M134 177L143 178M69 79L75 76M85 173L85 175M26 179L24 184M172 206L170 207M89 53L90 52M105 67L105 67M67 171L65 172M105 29L108 30M53 207L54 210M114 78L115 78M91 38L86 36M57 92L60 99M119 195L116 195M61 71L64 67M151 63L147 67M29 170L34 170M78 49L82 47M54 125L59 125M107 188L110 186M91 229L97 227M144 190L145 191M54 100L54 103M36 169L35 171M90 55L92 56M111 196L117 207M67 64L71 56M51 97L52 92M60 206L54 210M138 57L134 57M163 138L157 137M92 208L87 206M167 212L163 211M96 31L94 31M140 136L138 137M87 228L91 223M81 41L77 37M10 184L7 180M24 184L22 189M106 75L117 70M94 202L93 203M165 113L161 121M133 52L134 52M150 124L143 122M57 178L60 176M167 167L165 169M52 80L46 71M136 140L136 137M128 34L125 33M17 139L17 143M104 102L101 102M95 95L93 97M160 162L164 155M171 140L165 142M74 31L77 37M37 114L39 119M143 178L145 177M109 227L110 229M160 136L157 137M93 149L96 146M144 62L151 63M113 59L113 61M66 157L70 154M26 184L28 184M79 113L86 111M122 139L123 138M52 88L49 83M173 109L167 103M64 87L67 83M57 128L54 125M104 47L105 52M134 48L136 41M37 133L35 132M105 157L104 155M99 156L99 152M72 232L72 233M138 111L144 105M99 171L93 171M117 40L108 37M109 163L101 163M119 195L118 196M115 123L114 127M93 79L96 79M88 125L84 126M145 100L145 105M51 202L56 206M161 154L161 153M69 101L67 92M160 200L160 199M57 131L61 141M109 81L107 83M13 121L17 120M88 97L91 96M46 117L49 115M8 120L9 123M75 70L68 76M98 124L97 134M138 137L138 140M79 211L87 206M152 194L148 200M89 152L84 149M68 119L73 117M165 108L164 106M42 117L39 119M93 204L96 202M138 218L143 214M32 188L37 186M57 131L63 140M146 104L145 108M65 131L62 128M117 136L120 136M76 52L83 57M127 46L125 41M157 197L160 189M158 155L154 147M68 133L70 133M24 152L30 149M158 93L151 93M116 118L116 115M20 105L20 107M116 61L113 61M49 95L46 97M28 165L29 166M60 142L66 146M124 175L117 178M139 93L139 88M158 83L157 90M13 101L17 96M91 157L95 161M68 105L66 109M120 41L125 41M101 29L99 38M104 47L99 47M127 210L126 215M96 202L97 199M26 179L31 180M116 61L115 55M43 198L43 198M22 104L25 109M159 82L159 80M89 210L93 210M147 219L154 216M86 58L86 64M15 109L14 105M84 87L78 84M110 103L107 109M147 143L149 140M128 131L129 128M116 78L118 76M166 161L161 165M131 151L134 154M22 149L20 155M171 94L167 99M24 79L32 80M142 95L139 93M150 50L150 55M170 146L170 153M129 68L138 71M54 194L47 195M161 175L164 170M63 59L60 59M128 125L128 127M142 61L144 65M127 39L130 39M161 73L158 75M33 96L30 98M66 116L61 119M104 167L100 170M134 154L138 158M26 204L23 198M22 79L26 72M99 79L102 75M52 177L42 172M67 149L70 154M158 155L151 157M13 140L12 139M23 137L19 140M34 135L36 141M123 186L117 178M73 117L76 123M96 73L91 72M76 237L74 236M46 221L48 221M29 210L36 206M24 175L21 171M42 71L40 66M79 211L74 210M19 148L19 144M77 150L76 150M76 172L81 171M129 206L129 209M86 106L93 97M62 217L60 219M93 53L93 54M83 119L88 115M108 157L113 158M129 139L122 139M163 211L158 212M19 183L16 182M46 104L40 101M118 143L112 146M89 53L87 49M37 175L35 171M169 165L167 167M126 165L128 170M62 152L64 149M139 147L137 149M132 150L125 148M55 145L48 146M85 130L87 133M85 173L87 168M83 190L87 188M74 44L77 48M23 137L19 144M173 101L171 102M18 105L20 105M99 51L101 56M141 86L138 87M171 186L170 183M88 200L86 197M132 161L125 156M49 234L46 231M24 79L22 85M152 207L150 208M131 179L133 177M52 80L59 71M92 89L93 91M39 119L40 121M92 203L90 195M101 67L105 67M77 48L82 47M123 163L121 174M132 78L133 85M101 198L100 200M161 121L160 120M128 118L132 113M85 46L87 49M138 158L137 152M93 149L92 153M57 182L67 182M97 28L93 31M97 148L96 146M147 186L146 189M64 87L67 92M27 103L30 98M85 68L88 63M63 66L61 65M129 68L126 66M157 114L160 120M126 52L129 53M150 204L148 202M107 188L108 191M36 156L41 158M21 87L22 85M81 123L79 126M40 187L46 182M70 179L78 178M137 74L130 74M108 43L105 42M158 215L156 213M62 152L57 156M109 223L107 221M100 103L101 102M171 186L172 195M129 139L123 138M52 132L48 134M129 83L132 89M67 192L65 194M71 227L66 224M48 146L36 146M49 202L47 195M86 88L88 97M139 185L146 189M118 174L113 177M55 145L50 142M105 168L100 170M172 195L172 202M151 206L150 208M6 176L5 173M42 117L39 113M68 123L67 122M148 75L154 76M140 66L138 57M106 184L100 178M113 113L116 115M126 215L127 223M42 227L43 225M65 122L66 116M85 161L81 165M116 69L105 67M94 109L93 97M131 154L125 156M91 157L92 153M99 157L99 156M129 93L129 94M5 173L6 169M153 106L154 107M64 71L65 69M52 177L53 178M161 175L152 179M56 58L61 55M22 85L22 87M115 119L116 118M143 167L154 168M138 111L136 110M172 198L165 200M62 152L65 151M67 192L64 194M60 99L54 100M120 150L116 154M115 48L112 49M167 167L161 165M154 108L156 104M157 207L163 211M83 143L84 139M147 186L152 193M66 98L68 104M138 90L135 91M115 119L110 120M53 178L57 182M131 154L131 151M149 140L147 140M49 111L50 115M12 126L13 121M140 66L131 64M42 71L46 71M141 146L139 146M80 212L75 211M92 132L97 134M109 81L106 75M69 178L70 172M107 143L107 140M88 125L89 124M123 53L115 55M70 137L75 132M133 177L133 182M108 37L105 42M82 47L84 46M80 156L77 150M110 181L105 176M42 153L41 158M90 213L93 210M74 100L82 93M56 114L59 113M91 228L91 229M65 127L71 129M108 157L109 154M31 120L30 127M24 175L27 170M113 113L110 120M22 149L19 144M95 189L94 192M165 108L167 103M62 52L66 53M53 126L54 130M12 110L14 112M82 138L83 131M124 202L127 205M56 62L57 68M145 141L142 140M100 132L108 127M42 71L43 78M38 128L37 133M136 110L126 105M81 133L79 136M142 88L147 91M89 166L93 171M164 155L161 153M120 150L125 156M87 110L90 113M82 174L85 175M15 188L19 183M131 64L138 71M89 172L87 168M144 192L139 192M77 145L77 150M13 92L16 96M65 48L60 51M69 82L67 83M43 164L45 159M156 80L154 84M120 212L118 218M16 80L22 85M12 170L10 181M105 29L107 30M111 129L117 136M121 84L119 83M166 206L170 207M26 179L25 177M67 66L64 67M162 187L165 189M28 165L26 162M16 147L19 148M78 178L80 178M8 160L9 160M25 115L26 114M160 62L161 68M123 85L121 92M48 146L46 141M86 231L89 235M89 172L89 166M113 30L117 40M100 132L98 136M53 207L52 212M63 132L63 140M126 208L124 202M122 44L115 48M160 162L160 163M128 120L128 124M59 113L59 113M86 106L85 97M19 165L23 167M123 53L123 48M93 204L92 203M146 104L153 106M161 104L164 101M18 118L17 120M49 44L49 46M142 82L146 79M113 58L108 56M59 176L60 176M109 163L123 163M53 178L59 176M29 170L27 170M133 177L132 175M54 194L57 190M48 53L50 52M71 56L76 52M33 96L28 96M96 42L99 47M68 229L72 233M99 79L96 73M72 232L74 236M35 171L34 170M129 139L125 148M28 96L34 95M118 150L116 151M94 184L98 183M44 231L45 230M113 108L123 109M161 165L164 170M114 183L123 186M134 202L129 206M71 197L64 197M24 175L23 173M36 66L40 66M123 125L128 124M131 64L126 66M71 46L65 48M44 131L42 133M84 176L85 175M110 120L116 118M106 199L111 196M104 80L106 84M130 200L124 195M97 199L95 200M166 161L164 155M51 84L52 80M63 66L61 71M94 184L93 181M8 120L13 120M104 31L101 29M52 161L56 164M171 209L170 207M113 81L113 78M66 157L70 159M63 203L64 197M122 128L128 127M119 209L124 202M107 221L108 221M134 177L133 182M145 220L143 214M103 89L98 95M30 197L36 194M126 208L119 209M72 43L65 37M71 197L72 194M158 205L152 203M58 147L60 142M72 194L77 183M130 39L136 41M37 162L36 156M84 126L83 123M97 41L105 43M91 38L91 42M91 223L93 226M171 209L167 209M172 202L172 206M35 146L33 148M140 211L136 204M131 171L142 169M141 86L143 87M88 178L92 181M112 47L112 49M127 83L129 91M157 207L154 208M154 76L150 80M149 140L149 128M122 219L118 218M44 134L44 134M83 119L78 121M52 224L52 219M162 126L164 124M14 131L19 130M59 196L64 197M144 62L143 61M97 168L98 163M142 88L139 88M172 206L171 209M28 71L28 67M41 81L34 78M55 50L50 52M81 30L77 37M98 145L96 146M155 113L154 108M48 101L51 97M161 126L161 122M77 110L79 113M118 76L115 78M88 115L87 113M43 164L50 165M128 118L129 112M55 105L54 103M7 164L8 160M100 59L98 68M54 168L52 166M80 212L88 209M60 161L65 169M83 128L83 128M43 117L40 121M122 139L123 144M138 71L144 71M94 138L96 146M128 131L128 127M44 212L46 214M69 82L67 92M94 92L97 93M94 109L93 113M36 169L40 163M74 38L81 41M56 58L59 58M117 72L113 77M86 196L87 188M85 215L80 212M126 37L123 33M101 102L99 96M10 184L10 181M92 43L93 38M70 179L67 182M79 113L78 116M46 97L42 99M162 126L164 124M115 48L123 53M120 70L118 73M93 171L93 166M124 95L129 91M44 218L46 214M84 68L79 67M171 187L170 189M52 201L54 194M146 160L149 155M80 76L78 84M61 65L64 64M116 69L105 74M162 202L158 205M73 159L67 164M113 105L115 101M9 155L13 153M125 118L123 123M40 163L41 158M57 128L59 125M129 91L121 92M111 129L108 127M91 228L91 223M34 134L37 134M131 171L131 167M146 56L152 60M92 132L87 131M15 109L14 111M88 178L92 180M59 113L62 110M149 128L153 130M154 84L150 80M99 152L99 156M45 159L42 153M94 109L100 103M52 80L59 89M145 108L144 111M62 53L66 57M10 137L14 133M128 54L134 57M28 160L36 156M31 180L35 179M128 34L134 37M41 81L43 78M97 41L97 40M107 236L101 232M87 188L94 192M41 81L36 81M117 72L118 73M49 61L46 62M74 225L67 220M16 80L17 86M154 147L154 146M153 64L152 60M147 67L144 71M143 87L147 91M88 155L91 157M74 114L69 114M107 143L99 139M123 163L118 174M74 100L69 103M137 146L138 140M134 202L129 203M129 226L123 228M9 133L14 131M97 240L95 236M137 118L131 118M20 105L19 100M19 140L20 137M53 184L47 194M129 112L125 112M127 77L124 77M143 87L142 88M128 118L128 120M131 175L124 175M82 93L82 93M94 138L98 145M89 29L86 36M9 133L9 126M161 126L161 127M134 202L134 197M162 126L161 127M80 59L71 56M64 197L64 194M136 223L137 221M142 175L132 175M101 67L101 75M36 169L34 170M96 190L100 188M38 142L37 134M22 195L30 197M168 176L166 170M141 199L143 201M90 240L95 236M52 80L52 71M147 140L142 140M78 67L84 68M19 165L23 164M131 190L127 189M144 190L144 192M64 71L62 76M162 187L160 189M46 104L44 108M75 115L78 116M98 206L101 201M127 77L130 74M156 57L156 59M99 51L102 49M93 60L98 68M73 226L71 227M44 134L46 141M86 88L91 96M57 190L57 182M158 144L164 142M62 217L56 217M42 113L43 117M172 202L166 206M64 64L62 66M77 74L84 68M174 108L167 103M42 169L42 167M88 182L91 184M87 228L91 228M63 225L55 225M174 108L171 102M122 139L117 142M13 121L9 123M83 61L83 57M87 138L82 138M116 154L115 152M96 202L101 201M123 123L128 124M110 59L105 67M167 91L166 88M129 216L127 223M97 210L92 215M42 71L40 73M38 128L35 132M156 213L149 214M41 168L42 167M107 216L107 221M73 145L70 146M171 186L171 187M92 89L96 88M116 154L113 158M153 130L154 135M73 117L78 121M30 149L33 148M126 208L127 210M34 74L32 80M63 225L60 232M156 130L153 130M123 109L129 112M90 74L84 74M79 211L75 211M134 197L128 193M79 211L77 203M48 110L49 107M68 109L66 109M126 52L123 48M156 189L147 186M94 92L91 96M115 220L118 218M65 169L59 176M29 166L29 170M53 184L53 192M7 164L13 160M93 149L89 152M59 148L59 152M57 131L62 127M115 48L113 50M107 125L108 125M101 237L102 236M90 121L88 115M84 45L83 42M34 74L34 78M107 188L106 191M136 150L134 154M161 175L165 176M89 166L92 161M105 80L107 83M129 139L123 144M111 212L115 220M98 145L104 147M79 234L86 231M28 137L34 135M138 111L135 116M104 238L101 237M63 66L64 64M124 195L124 202M46 221L45 221M91 174L93 171M89 166L93 166M90 213L89 213M145 141L145 144M129 226L127 223M14 86L16 87M120 212L111 212M107 125L108 127M171 186L170 189M164 124L164 124M39 223L36 219M103 89L97 93M29 210L30 205M78 67L68 68M27 103L29 106M140 124L137 118M72 194L83 194M38 142L42 133M13 120L17 120M34 148L36 146M90 74L85 71M114 127L113 129M146 160L151 157M78 142L78 140M65 172L65 172M128 206L129 209M29 65L36 66M137 118L139 119M130 213L135 212M89 29L85 31M97 41L96 42M160 92L157 90M164 142L164 139M97 227L98 223M67 182L60 176M41 188L37 186M45 96L47 93M55 145L55 146M109 147L112 146M67 64L79 66M84 45L84 46M128 124L123 123M64 71L68 76M75 132L71 129M170 172L168 176M83 61L85 64M136 96L135 91M12 170L13 160M161 154L164 155M48 153L47 158M110 103L113 100M93 204L94 202M110 234L113 232M30 98L23 101M101 198L100 188M165 169L166 170M26 114L27 107M167 82L166 88M90 55L89 53M131 98L135 101M158 144L154 146M129 185L123 186M49 202L43 198M127 189L128 193M132 78L131 77M120 221L118 218M107 143L104 147M127 77L131 77M136 204L139 211M99 171L97 168M42 169L42 172M85 129L87 129M24 184L20 181M93 38L94 31M128 193L130 200M146 46L140 44M146 115L141 115M65 131L71 129M102 88L104 89M114 127L122 128M92 161L93 166M73 126L76 123M58 107L60 99M142 201L145 202M118 198L119 202M140 159L137 152M172 198L171 195M74 100L75 106M28 84L25 95M157 197L152 193M62 76L68 76M114 183L110 186M110 229L113 232M100 59L101 56M117 72L118 76M88 178L93 176M148 75L142 79M104 89L99 96M41 188L42 188M43 198L44 206M38 142L48 146M142 169L143 167M17 96L16 96M91 229L95 236M116 78L115 78M109 81L112 79M142 95L136 96M83 128L83 131M64 44L63 43M144 62L144 65M43 225L43 225M55 122L48 125M49 132L44 131M82 238L89 235M171 140L166 144M169 165L167 162M49 61L56 58M150 116L154 112M159 62L155 68M125 148L120 148M9 103L10 101M146 115L150 116M128 131L125 136M35 146L30 146M100 103L93 97M66 98L67 92M161 78L160 80M68 229L72 233M8 114L9 109M127 46L130 39M154 117L155 124M118 73L124 77M15 188L10 184M109 113L107 109M113 50L114 51M42 113L39 113M59 196L54 194M66 207L62 217M116 154L125 156M121 195L119 195M156 61L156 59M39 223L45 223M81 30L89 29M155 134L153 130M39 113L44 108M70 172L74 173M55 122L54 125M10 124L13 121M77 145L77 143M28 128L34 134M109 125L110 123M10 140L12 139M39 155L36 156M41 194L43 191M119 83L113 81M104 171L100 170M88 63L86 64M154 173L155 172M91 72L91 71M100 228L101 230M137 84L132 78M46 117L49 117M40 180L39 184M148 192L148 200M126 208L119 210M98 124L107 125M42 227L45 230M13 153L14 150M41 168L36 169M174 115L169 115M68 109L66 109M48 125L54 125M112 226L109 223M138 140L141 146M47 227L45 224M93 149L84 147M20 74L22 79M25 129L26 116M143 47L140 44M37 175L41 175M39 119L38 121M49 83L43 78M23 173L23 170M28 137L25 129M55 225L55 218M60 124L59 125M137 146L132 150M93 60L92 56M93 53L90 52M143 113L141 115M38 127L35 127M99 157L105 157M150 100L158 93M15 109L12 110M77 37L83 31M16 87L13 92M96 190L94 192M65 169L65 170M109 223L104 225M44 134L44 131M129 97L124 95M151 86L154 84M113 108L113 105M154 168L153 161M110 59L108 56M13 101L14 105M127 162L130 164M101 198L106 199M42 113L44 108M154 147L154 146M154 117L154 112M43 164L40 163M122 81L127 83M23 170L23 167M16 87L16 86M138 90L138 87M158 215L154 216M150 204L152 205M157 114L155 113M87 81L84 87M74 143L71 142M54 150L56 147M101 224L100 221M93 53L96 51M73 145L74 143M74 143L77 143M111 129L107 140M65 131L65 133M70 137L71 142M42 117L42 113M48 43L49 44M35 127L36 124M40 180L35 179M107 125L107 120M141 115L137 118M99 171L101 172M19 112L18 118M44 212L38 215M105 67L104 58M90 121L92 127M40 100L42 99M137 221L138 218M156 130L155 134M16 182L10 181M104 155L104 147M119 209L119 210M138 90L139 93M73 117L71 122M139 113L143 113M160 200L154 200M13 160L19 165M82 93L78 84M101 172L100 170M94 184L91 184M88 97L93 97M22 85L28 84M134 197L130 200M44 218L38 215M23 170L21 171M129 216L138 218M85 49L85 46M18 118L14 112M13 120L18 118M110 142L107 140M32 58L36 66M65 125L71 129M113 50L112 49M87 138L92 132M81 171L77 163M6 176L8 175M147 143L147 140M125 33L123 33M67 171L65 172M87 133L83 131M9 133L10 137M77 145L74 143M139 113L137 118M76 172L78 178M142 95L145 100M89 213L92 215M28 96L30 98M22 149L19 148M78 178L74 173M49 111L47 113M163 213L163 211M76 172L77 163M55 145L53 141M77 183L68 187M129 68L131 64M8 160L10 156M138 128L140 124M115 148L113 150M28 137L23 134M123 228L114 224M70 133L71 129M94 202L96 202M15 139L13 140M150 50L146 56M105 80L104 80M125 174L128 170M66 109L66 109M64 106L63 98M161 121L161 122M24 175L25 177M12 139L13 140M139 185L147 186M135 101L126 105M137 74L139 82M22 149L30 149M131 167L130 165M81 41L83 42M107 236L107 229M40 97L37 99M134 48L127 46M30 149L30 146M85 49L87 49M90 195L94 192M160 200L158 205M104 89L103 89M76 52L70 54M55 105L51 103M41 188L43 191M145 108L144 105M60 124L62 127M49 61L48 53M66 58L71 56M129 152L125 148M57 131L62 128M85 46L84 46M128 170L128 169M71 46L64 44M167 212L163 213M170 172L170 178M12 126L14 131M64 106L66 98M154 200L148 200M129 216L135 212M9 126L14 131M105 80L106 84M98 206L96 202M69 101L70 101M139 198L141 202M38 127L36 124M156 130L163 134M101 230L99 233M112 47L115 48M65 122L61 119M59 113L66 116M91 49L87 49M40 97L38 97M100 228L98 223M170 178L171 186M123 144L120 148M44 206L43 198M123 228L120 221M149 214L150 208M98 124L92 128M94 109L102 106M54 186L57 190M45 141L46 141M159 184L156 189M88 182L83 183M154 168L152 174M64 205L69 202M12 170L21 171M7 180L6 176M142 52L146 56M92 43L91 49M76 230L83 229M74 210L67 220M70 137L74 143M108 100L110 103M97 122L92 127M49 61L56 62M16 182L20 181M26 114L25 109M19 140L17 143M60 161L66 168M76 230L74 225M157 207L164 208M161 154L160 162M80 63L71 56M46 214L52 212M171 102L167 103M152 205L154 208M61 121L61 119M93 110L90 113M26 162L20 159M21 87L22 87M82 238L80 237M154 173L154 168M93 79L93 85M132 186L131 187M158 144L154 146M44 218L48 219M164 106L164 101M158 83L159 82M132 186L133 182M52 88L57 92M57 178L59 176M145 191L144 192M51 84L52 88M50 157L52 161M97 41L99 38M49 117L50 118M29 65L28 67M111 212L119 210M52 132L54 130M85 31L83 31M91 182L88 182M130 200L124 202M141 199L142 201M93 85L96 80M148 192L152 194M47 49L50 52M55 50L56 58M105 42L99 38M116 154L116 151M140 136L139 133M102 75L101 75M116 132L113 129M49 132L46 133M20 107L25 109M28 128L35 132M116 154L110 154M67 66L64 64M87 142L84 139M134 48L129 53M41 175L41 179M140 124L135 126M86 204L85 198M81 123L83 123M140 41L140 44M69 136L68 133M151 63L153 64M111 129L109 125M97 28L105 29M68 133L71 129M135 212L139 211M31 176L26 179M12 170L8 175M156 80L158 83M100 132L111 129M165 126L168 124M120 39L123 33M124 195L123 186M8 120L12 115M167 212L158 215M17 86L22 85M99 233L97 227M40 90L40 92M71 171L77 163M119 209L117 207M129 226L134 222M142 169L132 175M33 81L32 80M73 226L74 225M36 141L37 134M28 137L23 137M158 215L147 219M77 107L86 106M93 38L97 40M9 155L9 150M26 189L30 197M123 228L127 223M48 219L46 221M76 172L71 171M88 97L85 97M79 211L86 204M116 132L122 128M172 195L170 189M106 46L109 47M156 91L157 90M74 44L73 40M142 95L136 98M43 191L46 182M113 50L108 56M69 189L68 187M88 178L84 176M9 150L10 145M138 137L139 133M122 81L121 84M42 188L43 191M120 70L126 66M80 212L87 206M80 156L84 149M107 98L109 99M9 103L14 105M122 44L127 46M110 186L108 191M40 100L40 101M108 100L104 102M151 157L153 161M86 196L83 194M142 95L149 97M14 86L13 92M156 80L154 76M104 31L107 30M123 144L125 148M104 47L102 49M48 219L52 219M150 100L146 104M158 155L160 162M170 178L168 176M81 171L85 173M159 82L166 88M161 104L154 108M128 131L131 137M125 183L123 186M90 121L96 119M41 81L38 74M71 56L70 54M42 227L43 225M87 138L87 133M48 110L44 108M85 97L76 104M70 172L67 176M160 189L165 189M66 57L70 54M55 50L63 47M88 178L83 183M90 174L91 174M91 182L93 181M142 169L145 177M77 145L84 149M65 133L69 136M37 175L35 179M129 203L127 205M139 133L149 128M138 159L134 163M102 88L96 90M157 197L160 199M149 155L140 159M96 95L95 96M170 178L165 176M163 76L161 78M77 203L80 201M25 129L17 120M57 70L59 71M106 191L108 193M170 183L171 187M129 185L132 186M150 100L145 100M154 76L154 67M162 202L165 200M46 104L51 103M87 133L87 131M67 149L64 149M42 90L49 83M150 100L151 93M45 221L39 218M29 140L34 135M94 193L95 200M120 134L128 131M109 99L110 103M88 200L86 204M74 100L76 104M160 153L154 147M85 54L87 49M60 51L63 47M92 89L93 85M67 92L63 94M41 188L36 194M62 122L65 125M148 202L152 203M78 113L78 116M125 118L125 112M23 134L20 137M150 208L143 214M151 206L152 207M69 82L75 76M94 138L97 134M154 117L160 120M134 133L133 136M40 187L37 186M130 213L129 216M169 165L169 169M36 206L36 194M67 149L66 151M37 83L40 90M96 73L98 68M133 94L136 96M34 68L29 68M160 189L156 189M127 210L129 211M45 159L41 158M70 154L70 159M147 67L153 64M91 49L90 49M122 96L115 101M41 179L46 182M144 190L146 189M8 109L9 109M42 172L39 170M14 133L19 132M19 112L14 112M158 144L163 138M72 133L70 133M89 124L83 123M174 123L171 128M10 137L12 139M150 100L152 103M36 206L39 205M160 122L155 124M170 172L169 169M15 139L13 141M104 155L108 157M66 207L60 206M38 97L37 99M13 120L9 123M154 200L152 194M58 107L56 114M50 142L46 141M107 125L109 125M71 46L76 52M54 168L56 164M45 224L45 223M14 111L15 111M121 33L117 40M165 126L164 124M87 129L92 128M89 39L83 42M88 63L91 71M29 140L30 146M60 232L61 235M43 78L46 71M28 96L23 98M79 234L83 229M101 56L95 54M81 133L81 132M127 83L123 85M145 202L141 202M84 68L84 74M63 132L62 128M111 212L117 207M72 194L67 192M22 104L20 107M57 156L52 161M99 157L98 163M93 31L93 38M77 110L86 111M163 138L164 139M106 184L105 176M87 188L90 195M65 194L64 194M64 106L66 109M37 114L32 108M107 98L99 96M120 134L125 136M96 42L97 40M174 123L169 115M156 80L158 75M124 95L127 95M131 62L126 66M73 126L71 129M42 188L46 182M138 111L145 108M104 58L107 58M87 142L93 149M26 72L28 71M139 185L135 183M142 61L142 61M88 155L84 149M64 67L64 64M92 153L99 156M17 102L17 96M86 231L83 229M65 48L62 52M32 114L35 116M52 88L52 92M55 122L59 125M28 160L26 162M129 206L136 204M157 207L158 205M132 132L129 128M68 119L69 114M97 87L96 88M167 91L167 99M49 111L48 110M115 151L115 148M91 229L89 235M56 234L48 231M155 172L154 168M157 197L156 189M71 197L80 201M109 99L113 100M146 177L149 174M37 162L40 163M99 139L94 138M82 93L67 92M36 124L30 127M157 206L158 205M127 37L127 39M92 132L87 133M22 79L24 79M96 190L101 198M128 125L128 124M84 68L85 71M109 47L112 49M71 56L71 56M113 189L114 183M52 132L53 141M36 81L33 81M93 54L95 54M51 97L54 100M66 146L64 149M113 30L121 31M168 193L169 190M110 234L107 229M52 88L42 90M100 221L98 223M134 177L142 175M100 118L100 115M154 146L154 146M92 161L95 161M34 148L36 156M42 90L40 92M135 128L132 132M121 31L128 34M147 219L136 223M170 153L166 147M140 66L142 61M142 95L137 100M73 145L71 143M12 110L12 115M112 226L110 229M24 175L24 175M9 109L14 105M6 169L8 171M132 78L139 82M63 66L64 67M168 193L165 189M136 223L129 226M10 145L10 140M67 176L60 176M42 227L47 227M44 63L38 63M104 102L102 106M115 122L123 123M107 125L110 123M26 189L22 195M129 112L125 112M34 74L38 74M127 210L129 209M20 158L13 160M153 161L160 163M68 229L72 232M77 145L83 143M165 113L157 114M10 140L9 133M110 229L107 229M108 193L108 191M100 178L101 174M87 81L82 82M170 183L165 176M37 83L34 95M43 164L41 158M91 182L92 181M125 156L125 148M143 201L148 200M98 68L91 71M71 227L67 220M53 184L54 186M97 199L101 201M113 158L110 154M105 157L108 157M12 170L17 165M107 167L104 171M67 33L65 37M104 225L101 221M92 56L88 56M62 76L67 83M5 173L8 175M116 195L118 196M55 225L52 224M97 28L89 29M90 240L89 236M145 144L141 146M137 74L142 79M89 235L95 236M12 110L9 109M106 184L100 188M148 75L147 67M163 76L166 80M49 115L47 113M113 100L115 101M37 83L39 92M172 195L168 193M39 218L38 215M138 159L138 158M97 40L99 38M140 85L141 86M154 117L150 124M19 148L20 155M38 127L44 131M102 117L100 115M111 95L121 92M59 148L54 150M163 76L164 74M83 65L84 68M69 202L74 210M88 209L89 213M32 188L28 184M106 199L101 201M116 61L123 53M40 187L39 184M59 196L64 192M68 119L67 122M29 170L24 175M128 125L135 126M144 118L139 119M43 82L49 83M140 69L140 66M35 132L35 127M48 134L46 141M161 98L161 104M66 146L63 141M99 86L96 88M104 173L104 171M37 68L38 74M151 87L151 93M77 150L84 149M63 225L59 219M44 108L49 107M99 149L97 148M135 126L137 118M87 133L82 138M104 173L101 172M151 87L154 84M166 161L168 159M151 51L150 55M34 68L37 68M155 134L157 137M156 57L160 62M160 199L165 189M55 218L52 219M101 198L108 193M136 41L140 44M158 215L163 213M46 104L48 106M144 71L142 79M129 97L126 105M114 183L113 177M19 132L20 137M94 109L100 115M93 204L92 208M97 240L90 240M94 31L99 38M61 65L62 66M136 140L133 136M50 115L50 118M48 146L42 153M122 81L123 85M149 214L154 216M44 212L43 211M105 74L105 67M104 171L105 168M9 103L10 98M51 84L59 89M123 109L113 105M113 58L114 51M68 229L68 229M68 123L71 129M125 112L117 116M115 190L114 183M132 150L131 151M88 155L85 161M109 163L108 157M81 165L86 165M56 234L61 235M125 112L125 112M126 60L126 66M154 117L149 121M65 169L54 168M126 60L134 57M99 152L103 155M88 200L92 203M91 96L93 91M69 189L67 192M14 150L16 147M169 190L166 187M105 74L106 75M42 169L50 165M49 61L45 62M92 215L98 223M13 120L13 121M169 165L169 166M15 109L19 111M83 38L83 42M83 229L74 225M121 33L120 39M83 61L86 58M132 161L134 154M81 171L81 165M37 186L36 194M131 190L138 194M140 85L139 82M53 184L47 179M91 184L87 188M146 104L145 105M92 153L99 152M92 181L93 181M98 95L97 93M73 126L71 122M26 184L26 179M38 97L34 95M43 117L39 119M135 209L136 204M23 68L28 71M158 100L156 104M49 154L49 152M109 125L114 126M154 168L160 163M23 98L19 100M99 157L103 155M49 132L48 134M26 189L24 184M148 202L145 202M82 49L85 46M117 116L123 123M89 166L91 166M57 131L54 130M86 204L92 203M86 36L83 37M38 97L39 92M163 138L164 142M138 218L145 220M34 74L29 68M87 138L84 139M129 139L136 140M17 102L18 105M35 146L34 148M59 219L55 218M135 101L136 110M98 163L95 161M70 137L79 136M18 166L19 165M153 126L149 128M14 150L11 146M52 88L59 89M165 135L171 134M20 155L20 159M63 59L61 65M150 50L148 48M134 202L130 200M27 83L32 80M167 82L160 80M137 84L139 82M95 96L99 96M88 167L87 168M67 92L78 84M63 203L59 196M86 196L90 195M48 125L40 121M32 58L38 63M28 71L29 68M54 186L53 192M131 154L134 154M83 38L83 37M77 107L76 104M96 114L93 113M165 135L171 128M100 103L102 106M37 99L30 98M93 31L94 31M120 134L116 132M82 169L86 165M134 57L134 52M42 117L37 114M151 112L145 111M90 55L88 56M90 113L87 113M107 236L102 236M134 37L140 41M113 81L111 87M96 51L99 47M56 58L56 62M75 211L74 210M115 48L114 51M68 105L68 109M88 167L89 166M82 49L78 49M107 125L98 123M129 93L129 91M92 180L93 176M38 63L36 66M111 90L111 95M55 122L61 119M32 114L31 120M101 201L100 200M135 209L135 211M42 99L40 101M132 186L139 192M152 103L146 104M57 70L52 71M28 137L28 128M100 118L96 119M81 123L78 121M131 64L131 62M59 219L56 217M129 82L129 83M47 203L53 207M104 155L109 152M93 79L90 74M63 203L60 204M153 126L153 130M157 128L161 126M138 137L136 140M56 62L59 60M27 83L22 85M83 31L83 37M44 212L44 206M135 126L129 128M142 52L148 48M145 202L148 200M43 78L40 73M63 66L62 66M71 171L66 168M142 61L138 57M107 98L101 102M157 114L164 106M93 79L96 73M122 81L119 83M128 124L131 118M107 98L104 89M63 98L60 99M47 179L52 177M109 113L110 120M62 76L59 71M66 116L67 110M129 209L129 211M154 209L150 208M132 113L136 110M16 80L22 79M157 137L154 135M110 154L109 152M53 126L57 128M74 114L75 115M145 144L147 143M63 59L66 58M171 128L168 124M98 95L99 96M31 191L36 194M129 139L125 136M133 52L134 57M130 164L134 163M94 193L97 199M121 174L124 175M129 139L137 146M117 178L113 177M141 211L140 211M35 116L38 121M100 132L97 134M135 116L136 110M155 68L154 67M32 184L28 184M91 223L98 223M167 99L167 103M57 92L63 94M49 117L49 115M29 140L23 137M45 62L46 62M37 175L41 179M169 166L169 169M63 225L66 224M28 63L29 65M167 99L171 102M88 209L89 210M104 47L105 46M19 138L20 137M149 140L154 135M83 57L80 59M104 102L110 103M28 184L28 184M46 62L52 65M160 122L160 120M62 122L60 124M86 88L85 97M163 68L165 74M109 99L111 95M22 149L30 146M164 139L165 142M104 225L101 224M35 146L33 141M113 30L108 37M142 95L147 91M133 136L136 137M40 163L42 167M15 188L22 189M91 182L91 184M121 126L115 123M165 126L171 128M149 128L154 135M96 31L101 29M65 125L65 122M29 106L30 98M172 132L171 128M142 175L143 178M119 202L117 207M93 166L91 166M151 86L146 79M9 103L13 101M142 95L142 88M39 223L43 225M161 104L156 112M14 131L19 132M58 147L55 146M68 123L71 122M55 145L53 150M149 155L154 147M81 41L83 38M150 204L152 203M50 165L42 167M66 57L66 53M138 140L139 146M136 140L131 137M122 44L123 48M109 147L110 142M145 191L146 189M52 201L56 206M161 104L156 104M73 218L67 220M97 210L98 206M151 86L143 87M65 125L68 123M138 128L134 133M49 95L51 97M85 54L83 57M155 60L152 60M77 203L74 210M49 132L52 132M20 158L20 159M133 87L138 87M78 142L77 143M10 98L13 101M85 31L86 36M101 201L101 207M73 40L72 43M102 88L106 84M81 30L83 31M68 36L65 37M129 139L132 150M74 100L67 92M138 128L139 133M56 114L61 119M64 106L60 99M125 183L124 175M53 126L54 125M49 46L47 49M105 67L107 58M154 146L159 148M123 123L123 123M104 173L105 176M19 132L19 130M67 192L64 192M149 128L147 140M148 192L147 186M94 109L86 106M83 61L81 63M166 80L160 80M96 95L95 95M135 126L128 124M32 184L37 186M70 137L63 140M32 184L28 184M81 197L83 194M73 218L74 225M36 146L42 153M58 147L56 147M26 116L17 120M56 105L54 100M37 99L40 100M153 106L156 104M138 57L146 56M65 170L66 168M154 117L150 116M58 147L59 148M111 212L118 218M161 122L169 115M23 137L23 134M80 63L79 66M22 104L19 100M132 161L127 162M120 70L116 69M23 173L21 171M27 103L27 107M48 53L43 58M9 155L11 151M31 176L31 180M127 37L130 39M115 148L120 148M139 133L136 137M93 204L98 206M161 68L159 62M96 95L98 95M28 137L34 134M62 53L61 55M54 210L56 206M124 95L121 92M56 58L59 60M141 86L142 88M90 174L85 175M101 148L99 149M90 74L91 71M129 82L132 78M152 203L148 200M59 113L61 119M61 65L57 68M57 131L53 141M55 50L59 50M137 74L131 77M115 78L113 81M60 161L66 157M120 212L126 208M131 98L136 96M129 83L133 85M119 83L111 87M159 148L161 153M31 176L35 171M52 65L49 71M83 51L85 49M43 211L38 215M152 207L154 208M70 179L74 173M134 154L137 152M67 66L68 68M138 57L137 50M134 202L139 198M65 194L64 197M167 99L164 97M85 68L85 71M12 126L19 130M111 196L113 189M37 162L41 158M121 31L125 33M99 47L105 43M83 51L78 49M133 52L129 53M68 36L72 43M148 75L144 71M128 127L129 128M142 82L143 87M70 101L74 100M28 184L26 179M8 114L12 110M77 163L81 165M84 45L82 47M146 56L148 48M67 164L70 159M137 84L133 85M60 51L59 50M101 198L106 199M68 229L60 232M54 186L57 182M93 60L88 63M159 167L160 163M64 205L66 207M161 78L159 80M99 51L96 51M39 113L32 108M95 161L99 156M131 64L134 57M63 59L66 57M166 187L171 187M116 195L115 190M137 50L140 44M113 108L113 113M47 93L42 90M78 178L77 183M170 87L167 91M92 128L97 134M129 68L130 74M138 140L136 140M36 219L38 215M161 175L154 173M129 82L127 77M45 133L44 134M61 97L63 94M151 86L150 80M94 202L90 195M17 102L19 100M99 86L99 79M154 76L158 75M56 234L60 232M108 56L107 58M74 237L72 233M19 183L22 189M44 134L42 133M129 185L127 189M55 225L52 219M117 40L120 39M69 178L67 182M75 152L76 150M42 172L50 165M79 126L81 132M60 142L61 141M12 170L20 181M34 134L35 132M86 197L83 194M160 153L161 153M131 151L125 148M67 220L66 224M58 107L59 113M129 82L131 77M40 97L40 92M88 125L87 129M99 233L95 236M90 74L86 77M164 208L167 209M129 97L122 96M93 38L91 42M129 83L133 87M115 190L123 186M88 125L92 128M28 165L32 161M105 67L110 59M81 133L82 138M120 212L122 219M49 61L43 58M89 172L85 173M164 170L165 176M163 138L160 136M154 117L155 113M146 160L140 162M157 206L154 208M113 77L117 70M171 209L167 212M142 82L139 82M70 179L69 178M127 189L131 187M120 150L118 150M43 78L38 74M141 86L139 88M55 218L56 217M121 126L115 122M128 34L130 39M111 196L117 195M70 154L66 151M8 160L9 155M49 44L48 45M40 90L39 92M61 71L65 69M106 46L108 43M133 94L131 98M60 59L61 55M70 101L69 103M137 84L133 87M99 157L101 163M57 70L52 80M156 112L154 108M120 39L126 37M107 229L101 232M47 227L43 225M12 142L17 143M6 169L12 170M135 183L143 178M115 119L123 123M109 152L104 147M125 118L128 118M73 145L77 145M65 131L63 132M91 78L93 85M32 214L36 206M134 37L130 39M131 209L136 204M107 98L104 102M9 160L13 160M102 117L100 118M63 66L57 68M92 43L91 42M94 92L95 90M158 155L153 161M10 140L13 140M92 215L93 210M135 212L135 211M127 95L129 91M168 193L171 195M87 81L93 85M7 180L10 181M155 134L154 135M24 79L26 72M60 161L56 164M56 114L50 118M37 175L40 180M36 206L30 205M151 63L152 60M116 154L123 163M20 158L19 165M49 234L56 234M80 201L86 204M107 167L104 167M150 100L156 104M34 148L33 148M170 178L170 183M18 118L12 115M81 197L71 197M115 220L120 221M34 78L32 80M100 178L95 173M19 100L23 101M78 67L79 66M145 144L142 140M153 126L155 124M45 111L47 113M59 113L62 110M40 97L40 100M171 133L171 134M52 201L47 195M123 123L116 118M100 188L107 188M26 116L18 118M143 47L137 50M23 137L20 137M37 114L32 114M158 83L154 84M82 93L85 97M91 51L93 50M113 150L109 152M130 213L135 211M89 39L83 38M78 67L75 70M123 163L127 162M113 189L115 190M132 161L131 154M87 129L87 131M129 203L130 200M31 176L25 177M164 155L168 159M35 127L30 127M82 93L67 92M125 118L117 116M64 205L63 204M37 53L38 63M36 169L32 161M118 196L118 196M82 238L76 237M146 115L145 111M37 99L33 96M123 228L117 231M171 133L171 128M113 100L111 95M125 118L125 112M112 146L110 142M61 55L66 57M92 215L84 217M123 109L125 112M52 65L57 68M131 209L135 211M60 59L59 60M61 71L57 68M62 217L60 206M129 139L131 137M47 195L47 194M85 68L84 68M119 195L118 196M77 74L75 70M48 101L46 104M135 212L138 218M9 126L8 120M156 59L159 62M110 181L110 186M101 230L97 227M93 226L92 226M63 59L64 64M106 46L105 46M48 153L48 146M71 143L71 142M121 126L123 123M107 83L106 84M148 119L144 118M138 159L140 162M137 146L139 147M79 234L80 237M93 79L96 80M99 139L98 136M108 125L108 127M115 48L117 40M37 134L42 133M87 142L94 138M84 87L82 82M78 121L78 116M87 142L87 138M113 58L110 59M85 129L85 130M75 76L75 70M142 61L143 61M39 162L40 163M50 115L49 115M129 206L131 209M69 101L66 98M157 197L154 200M41 83L42 90M145 111L144 111M71 46L70 54M85 130L83 131M132 113L135 116M156 61L153 64M26 184L24 184M160 62L156 59M123 109L115 101M109 113L110 108M32 114L26 114M60 124L65 127M161 98L158 100M17 139L19 140M114 183L117 178M110 108L107 109M108 127L109 125M102 88L103 89M24 79L27 83M84 45L91 42M86 231L80 237M78 140L77 143M36 141L33 141M60 124L60 124M43 58L43 58M128 127L128 125M58 107L62 110M65 122L67 122M93 50L93 53M152 205L152 203M86 165L87 168M146 46L150 50M105 52L104 55M151 87L156 91M23 198L26 200M104 89L106 84M131 179L131 175M61 55L59 50M16 87L16 96M83 119L89 124M17 102L14 105M50 115L56 114M161 71L158 75M49 111L49 107M51 202L53 207M52 201L49 202M122 128L128 131M13 153L11 151M131 167L130 164M86 106L76 104M98 124L92 127M146 56L143 61M88 200L90 195M113 77L106 75M52 71L57 68M63 132L65 133M158 103L156 104M32 58L29 65M38 63L40 66M139 93L135 91M65 37L64 44M137 146L136 140M111 196L109 209M129 112L126 105M92 128L87 131M92 203L92 208M169 169L166 170M113 189L110 186M28 71L32 80M57 128L62 127M67 110L62 110M106 75L112 79M55 105L56 105M123 125L123 123M170 87L167 82M31 190L26 189M120 41L122 44M116 132L114 127M48 53L43 58M100 132L107 140M28 67L29 68M149 121L150 124M146 79L142 79M116 69L113 61M50 93L52 88M162 187L166 187M100 178L98 183M113 158L109 154M57 92L61 97M63 141L71 142M102 88L96 88M105 29L113 30M75 106L69 103M47 93L40 92M66 207L74 210M17 139L15 139M67 149L66 146M111 196L108 193M91 182L88 178M143 113L145 111M81 41L82 47M137 84L140 85M101 237L95 236M56 58L50 52M104 173L107 167M161 73L164 74M60 99L61 97M118 198L118 196M72 133L75 132M69 114L67 110M122 96L124 95M45 224L43 225M100 178L93 181M86 58L83 57M52 201L51 202M99 79L104 80M30 205L28 202M147 218L149 214M126 208L128 206M26 114L26 116M147 218L143 214M64 106L58 107M160 153L159 148M141 146L137 149M151 87L147 91M131 98L136 98M102 236L99 233M29 140L33 141M67 164L77 163M44 134L42 133M169 190L170 189M90 213L92 215M38 97L40 92M88 209L92 208M169 159L167 162M65 48L64 44M29 65L29 68M98 147L97 148M23 198L30 197M91 223L84 217M79 126L76 123M60 59L59 58M65 169L56 164M84 130L83 128M92 89L95 90M165 113L169 115M37 83L41 83M131 190L128 193M129 97L127 95M101 102L102 106M42 48L48 45M104 225L107 221M39 155L41 158M56 235L61 235M86 204L87 206M126 165L121 174M157 197L152 194M89 29L93 31M157 207L158 212M101 56L104 55M128 127L128 127M88 155L80 156M10 181L8 175M50 152L49 154M138 159L132 161M141 115L141 114M161 165L165 169M91 229L93 226M89 39L86 36M131 171L131 175M54 39L49 46M85 215L92 215M79 67L79 66M90 52L87 49M44 212L53 207M78 178L83 183M131 179L125 183M74 237L74 236M99 156L103 155M64 149L66 151M9 150L11 151M160 199L165 199M38 128L35 127M48 53L47 49M31 190L36 194M83 119L87 113M38 142L36 141M101 230L107 229M50 157L47 158M112 47L117 40M133 87L132 89M34 178L35 179M86 58L88 63M96 73L91 71M68 123L65 122M13 140L13 140M146 46L151 51M144 105L136 110" fill="none" stroke="#7a5a50" stroke-width="0.45" stroke-opacity="0.5"/><path d="M99.2,38.2 L107.7,38.7 L116.6,40.0 L124.5,42.1 L130.5,44.9 L135.4,48.5 L140.1,52.8 L145.0,58.1 L149.7,64.2 L153.7,70.3 L156.9,76.1 L159.5,81.8 L161.5,87.8 L163.0,94.2 L164.0,100.9 L164.4,107.3 L164.0,113.6 L162.9,119.7 L161.5,124.8 L159.9,128.1 L157.9,130.5 L155.7,133.6 L153.4,138.4 L150.9,144.0 L147.9,149.2 L144.4,153.5 L140.4,157.4 L136.2,160.9 L131.6,164.3 L126.8,167.4 L122.6,169.6 L119.6,170.7 L117.3,171.0 L114.8,170.6 L111.8,169.6 L108.6,168.0 L105.1,165.7 L101.3,162.6 L97.4,158.8 L93.4,155.0 L89.4,151.0 L85.5,146.9 L81.7,143.4 L78.0,140.9 L74.6,139.0 L72.0,137.5 L71.1,136.4 L71.1,135.8 L70.0,135.6 L66.8,135.9 L62.6,136.6 L58.4,137.5 L54.5,138.9 L50.6,140.5 L46.7,141.4 L42.8,141.1 L38.9,140.1 L35.0,138.5 L31.0,136.4 L26.9,133.7 L23.4,130.7 L20.5,127.4 L18.2,123.7 L16.5,120.0 L15.7,116.7 L15.5,113.3 L15.6,109.2 L15.8,103.8 L16.3,97.6 L17.5,91.7 L19.4,86.3 L22.1,81.2 L25.3,76.2 L29.3,71.4 L33.9,66.8 L38.9,62.5 L44.3,58.4 L50.1,54.6 L56.4,50.9 L63.2,47.2 L70.5,43.8 L77.8,41.1 L84.8,39.4 L91.8,38.4 Z" fill="#929292"/><path d="M116,93 121,96 117,96ZM105,93 102,87 107,88ZM107,150 109,151 109,151ZM111,71 113,68 115,74ZM51,122 43,122 52,118ZM125,129 121,131 119,125ZM23,102 23,97 25,102ZM24,118 26,120 21,119ZM122,142 120,144 118,141ZM129,87 127,84 132,86ZM137,94 135,96 134,95ZM37,67 40,66 40,68ZM108,102 109,101 110,102ZM82,121 79,121 79,120ZM134,79 130,80 127,77ZM128,56 125,60 124,55ZM71,136 71,136 73,136ZM48,96 44,97 46,94ZM78,100 80,100 77,102ZM124,162 126,162 126,163ZM60,93 59,90 66,90ZM164,101 163,99 163,94ZM91,56 91,56 88,56ZM127,124 129,121 129,125ZM126,112 119,112 119,110ZM107,76 102,75 106,72ZM150,73 152,72 150,74ZM125,60 120,54 124,55ZM90,58 91,56 97,59ZM21,86 19,86 22,81ZM154,70 151,66 150,64ZM115,166 115,171 112,170ZM148,135 142,125 145,123ZM164,114 162,113 164,107ZM103,120 104,124 102,126ZM54,98 56,97 56,99ZM36,66 36,69 34,67ZM127,65 128,65 127,69ZM135,56 130,60 134,55ZM46,135 40,137 39,135ZM98,67 94,66 95,64ZM76,131 72,131 74,126ZM42,86 41,83 45,86ZM62,86 59,83 61,82ZM56,64 59,59 62,60ZM121,76 117,81 118,78ZM82,59 86,61 84,61ZM112,89 115,92 114,92ZM100,56 104,53 104,55ZM126,71 124,70 127,69ZM23,97 22,95 24,95ZM162,113 160,111 163,107ZM139,138 138,142 136,142ZM38,70 37,67 40,68ZM121,96 116,93 118,91ZM111,124 115,129 109,126ZM55,60 53,58 59,59ZM127,125 127,124 129,125ZM71,106 64,104 70,100ZM62,109 59,106 62,106ZM139,138 142,135 140,140ZM51,127 48,131 48,128ZM112,132 111,134 110,133ZM146,141 149,142 148,142ZM134,79 135,80 130,80ZM109,101 105,100 109,98ZM132,86 133,86 137,88ZM129,118 125,118 127,117ZM114,92 116,93 117,96ZM151,89 153,89 150,93ZM100,86 99,82 104,81ZM119,161 115,161 116,159ZM122,95 121,96 118,91ZM34,91 31,96 30,93ZM140,89 144,90 143,93ZM81,129 87,129 86,133ZM108,39 103,40 99,38ZM33,131 34,129 37,132ZM145,65 146,62 150,64ZM108,88 107,86 109,85ZM59,114 54,113 53,110ZM56,99 56,102 55,102ZM35,101 32,110 29,103ZM103,158 100,159 102,155ZM109,62 112,59 114,60ZM132,155 135,154 133,158ZM64,93 60,93 66,90ZM45,79 51,81 45,86ZM158,97 153,101 151,97ZM66,113 70,119 63,114ZM71,82 75,85 72,88ZM126,162 129,163 126,163ZM76,52 69,51 71,49ZM108,39 109,40 105,42ZM137,82 139,82 137,88ZM137,94 138,92 138,94ZM107,87 108,88 107,88ZM76,52 76,54 69,51ZM141,119 138,115 143,118ZM73,112 74,111 75,113ZM152,81 150,81 148,78ZM59,86 57,85 59,83ZM136,127 132,124 135,122ZM53,125 54,126 51,127ZM111,118 113,122 108,123ZM112,89 108,88 109,85ZM73,100 74,101 73,101ZM105,46 103,46 105,46ZM25,76 29,71 29,73ZM147,85 151,89 148,91ZM117,117 119,117 118,122ZM124,80 124,82 121,84ZM75,45 73,44 78,41ZM106,60 103,56 109,56ZM159,102 157,103 159,100ZM146,116 147,120 143,118ZM138,146 137,142 141,142ZM129,121 131,123 129,125ZM138,142 137,142 136,142ZM135,161 136,161 132,164ZM96,119 99,112 102,115ZM105,109 109,114 106,115ZM59,59 62,57 62,60ZM119,75 121,76 118,78ZM76,78 74,81 74,78ZM109,40 109,40 105,44ZM53,121 52,118 58,117ZM119,116 118,115 119,114ZM93,133 93,137 91,136ZM118,44 116,41 117,40ZM88,71 90,73 88,75ZM118,139 115,141 117,136ZM23,97 19,103 17,101ZM78,138 78,134 79,137ZM102,115 99,112 105,109ZM115,166 118,167 115,171ZM76,85 78,83 78,85ZM94,124 102,126 100,130ZM74,101 78,100 77,102ZM87,93 84,93 88,92ZM160,97 160,91 162,95ZM118,141 115,141 118,139ZM53,98 53,95 54,96ZM119,75 121,75 121,76ZM137,72 145,71 145,75ZM116,118 113,122 113,117ZM76,62 76,61 78,62ZM122,120 125,118 124,122ZM65,65 66,66 63,65ZM28,106 32,110 28,112ZM34,129 31,128 33,123ZM86,116 82,121 84,115ZM100,161 97,159 100,159ZM151,100 147,102 147,95ZM104,126 104,125 105,125ZM62,126 67,124 65,127ZM94,62 98,61 95,64ZM74,107 72,108 71,106ZM128,112 126,106 131,109ZM63,80 61,82 57,75ZM24,118 24,110 28,112ZM141,119 143,118 145,123ZM106,166 110,167 109,168ZM64,64 63,65 62,60ZM78,61 78,60 81,60ZM52,95 59,90 54,96ZM124,55 120,54 120,51ZM43,67 46,67 44,71ZM142,125 141,119 145,123ZM147,77 146,77 145,75ZM127,133 127,133 123,136ZM105,61 106,61 108,64ZM51,81 51,88 45,86ZM54,80 54,84 51,81ZM135,122 134,119 138,119ZM162,119 162,120 157,123ZM145,71 150,73 149,74ZM57,87 59,90 52,95ZM126,102 123,102 126,100ZM58,100 64,104 62,106ZM69,76 72,70 74,75ZM25,95 31,98 27,101ZM65,127 59,132 65,127ZM105,42 109,40 105,44ZM126,162 129,161 129,163ZM111,109 110,102 113,103ZM104,41 102,46 98,43ZM19,113 20,114 15,113ZM59,106 57,105 58,100ZM43,129 39,135 37,132ZM74,77 69,76 74,75ZM128,159 123,161 123,155ZM96,144 95,142 98,143ZM124,162 123,161 126,162ZM119,85 124,88 120,89ZM40,69 40,71 38,70ZM102,75 107,76 106,77ZM109,101 110,102 110,102ZM162,114 164,114 161,118ZM91,62 89,69 89,61ZM69,60 73,58 72,65ZM156,134 153,138 154,136ZM136,151 136,147 138,147ZM42,116 47,112 49,113ZM22,106 18,112 17,107ZM138,92 137,94 134,95ZM109,96 106,95 106,94ZM59,132 62,126 65,127ZM60,93 56,97 54,96ZM94,114 88,116 90,108ZM131,123 131,124 129,125ZM151,66 153,69 149,69ZM87,70 78,74 76,68ZM123,124 127,124 127,125ZM43,122 43,119 52,118ZM94,66 94,62 95,64ZM87,122 88,122 87,126ZM104,131 104,134 100,130ZM137,116 138,115 141,119ZM23,108 24,110 19,113ZM100,56 100,58 97,59ZM111,143 109,149 109,147ZM146,146 148,142 150,145ZM148,93 150,93 147,95ZM49,107 48,112 46,112ZM137,97 137,94 138,94ZM20,94 18,92 23,91ZM104,146 103,142 106,144ZM24,110 28,106 28,112ZM153,69 151,66 154,70ZM66,99 64,104 63,98ZM147,115 145,114 144,110ZM87,122 85,122 88,122ZM63,70 66,66 64,71ZM33,131 31,128 34,129ZM121,159 116,159 118,156ZM42,60 42,65 39,62ZM49,90 48,96 46,94ZM147,69 151,66 149,69ZM76,52 71,49 75,45ZM109,149 108,150 107,150ZM54,127 58,127 58,132ZM127,146 123,145 126,143ZM70,119 67,124 61,122ZM103,140 103,142 98,143ZM97,111 94,109 95,108ZM87,70 88,70 88,71ZM104,97 105,96 109,96ZM105,48 105,47 108,51ZM121,75 122,72 127,77ZM127,133 131,135 130,141ZM108,123 103,120 106,115ZM135,100 137,99 135,102ZM104,124 104,126 102,126ZM31,98 33,99 29,103ZM38,137 41,139 39,140ZM25,102 28,106 23,105ZM87,80 87,78 90,78ZM75,134 76,132 78,134ZM40,81 38,77 44,77ZM159,102 164,101 164,104ZM117,112 119,112 119,114ZM41,120 40,122 40,117ZM147,115 151,108 150,114ZM108,51 113,56 109,56ZM139,65 142,64 143,66ZM107,86 108,84 109,85ZM119,101 120,100 122,101ZM71,49 67,49 67,46ZM135,80 137,82 135,82ZM108,88 107,87 107,86ZM41,83 34,85 40,81ZM84,99 88,98 84,101ZM120,152 123,155 118,156ZM75,105 74,101 77,102ZM129,128 131,124 132,124ZM20,114 16,117 15,113ZM100,107 98,108 95,103ZM163,99 160,97 162,95ZM53,98 51,98 53,95ZM140,140 145,140 141,142ZM94,124 87,129 87,126ZM150,118 153,118 151,121ZM154,114 153,114 155,107ZM144,78 144,79 144,81ZM51,137 57,135 55,139ZM148,70 147,69 149,69ZM105,61 106,66 102,66ZM85,105 84,107 84,107ZM115,101 116,105 113,103ZM56,64 53,66 53,64ZM53,58 50,55 56,51ZM156,93 158,97 151,97ZM138,61 137,56 145,58ZM111,143 109,147 106,144ZM133,86 129,82 130,80ZM112,59 106,60 109,56ZM123,161 119,161 121,159ZM83,127 78,124 83,121ZM129,64 129,67 128,65ZM79,83 78,82 83,79ZM57,135 60,133 61,136ZM133,158 135,154 138,156ZM109,40 112,42 105,44ZM124,82 124,80 128,80ZM84,107 88,107 90,108ZM146,146 143,145 144,143ZM79,121 82,121 83,121ZM138,156 136,151 144,154ZM77,98 73,100 70,97ZM97,39 94,44 91,42ZM102,75 98,79 99,74ZM83,79 87,80 85,81ZM102,66 103,70 101,69ZM129,82 128,80 130,80ZM154,114 153,118 153,114ZM46,126 51,127 48,128ZM113,122 111,124 108,123ZM109,96 105,96 106,95ZM23,108 22,106 23,105ZM149,142 151,144 148,142ZM121,71 122,72 120,73ZM32,110 33,111 28,112ZM54,113 53,113 53,110ZM135,82 133,86 130,80ZM112,117 111,113 113,117ZM88,89 82,89 88,87ZM67,49 62,54 63,47ZM88,98 85,104 84,101ZM131,109 131,106 138,110ZM125,118 129,118 129,121ZM108,64 111,66 108,65ZM115,141 115,141 117,136ZM49,68 46,74 44,71ZM139,98 140,96 140,101ZM52,109 55,106 53,110ZM130,159 132,155 133,158ZM42,65 42,60 47,64ZM86,51 86,48 89,51ZM74,77 74,78 74,78ZM153,102 158,97 159,100ZM105,100 104,97 109,98ZM150,93 148,93 148,91ZM40,117 40,122 33,123ZM131,70 129,67 134,69ZM100,56 103,57 100,58ZM24,110 20,114 19,113ZM35,101 37,104 32,110ZM110,85 108,84 110,83ZM49,68 46,67 47,64ZM85,39 91,42 86,44ZM73,58 70,58 73,57ZM64,107 65,110 62,109ZM126,106 127,101 131,106ZM21,117 24,118 21,119ZM72,123 67,124 70,119ZM66,90 62,86 67,82ZM100,86 102,87 98,90ZM120,73 119,75 115,74ZM157,104 152,106 153,103ZM116,92 115,92 115,90ZM58,125 54,126 53,125ZM111,168 115,166 112,170ZM123,132 125,129 125,131ZM63,80 59,73 64,71ZM88,107 89,106 90,108ZM58,125 53,121 58,120ZM119,75 119,75 120,73ZM48,57 53,58 53,62ZM114,76 111,71 115,74ZM54,98 53,98 54,96ZM116,151 120,152 118,156ZM41,120 43,121 40,122ZM121,63 119,62 118,61ZM93,89 99,95 92,98ZM143,118 147,120 145,123ZM86,116 85,122 83,121ZM89,69 89,69 85,63ZM97,39 97,42 94,44ZM59,114 59,106 62,109ZM98,108 99,112 97,111ZM88,98 88,105 85,104ZM125,60 121,63 118,61ZM42,72 40,71 40,69ZM147,85 150,82 151,83ZM140,89 138,92 137,88ZM100,107 97,102 101,106ZM72,138 71,136 73,136ZM100,130 96,135 95,132ZM88,77 87,78 88,75ZM41,139 40,137 41,138ZM54,84 57,85 57,87ZM110,102 109,101 109,98ZM119,112 119,112 119,114ZM131,109 126,106 131,106ZM163,94 163,99 162,95ZM51,81 45,79 51,79ZM116,77 114,76 115,74ZM21,117 18,119 16,117ZM94,124 100,130 95,132ZM128,50 124,55 120,51ZM132,131 127,133 129,128ZM127,60 125,60 128,56ZM58,125 53,125 53,121ZM153,89 157,89 156,92ZM153,118 154,114 156,115ZM139,129 139,127 142,125ZM137,111 135,114 131,109ZM117,117 116,118 113,117ZM93,153 92,152 93,146ZM18,119 21,119 18,124ZM88,105 94,100 89,106ZM97,51 99,52 95,55ZM41,83 45,79 45,86ZM110,155 116,159 111,160ZM33,111 35,110 36,114ZM111,101 115,101 113,103ZM122,120 123,124 118,122ZM114,64 117,61 117,65ZM25,102 27,101 29,103ZM106,77 108,82 104,81ZM69,60 70,58 73,58ZM107,87 105,87 107,86ZM128,112 126,114 126,112ZM86,61 87,61 89,61ZM85,81 82,89 80,84ZM102,126 104,126 100,130ZM119,112 117,112 119,112ZM86,53 82,59 82,50ZM126,112 126,114 123,115ZM87,61 86,61 88,56ZM121,137 121,136 123,136ZM42,111 41,106 46,112ZM118,107 118,108 115,106ZM138,94 138,92 143,93ZM119,161 116,159 121,159ZM48,96 48,97 44,97ZM68,130 68,129 70,126ZM123,132 121,131 125,129ZM127,84 129,87 126,86ZM47,112 42,116 42,114ZM32,72 34,75 33,76ZM138,147 145,147 144,154ZM41,120 43,119 43,121ZM152,115 149,116 150,114ZM48,97 46,99 44,97ZM119,112 119,112 119,112ZM125,118 129,121 124,122ZM132,133 132,131 133,133ZM134,55 132,52 135,48ZM117,96 116,100 109,98ZM107,93 105,93 107,88ZM29,133 30,129 30,133ZM47,101 46,99 49,100ZM136,161 133,158 138,156ZM115,79 117,81 116,81ZM82,59 86,53 88,56ZM107,128 105,125 107,126ZM64,107 62,109 62,106ZM71,100 71,106 70,100ZM158,97 160,97 159,100ZM129,128 127,133 125,131ZM98,79 102,75 104,81ZM123,124 122,120 124,122ZM33,99 35,101 29,103ZM32,87 31,86 34,85ZM123,115 119,116 119,114ZM57,85 57,86 57,87ZM77,98 76,92 80,92ZM130,152 132,155 130,155ZM83,127 85,122 87,126ZM115,161 117,164 116,164ZM86,61 89,61 85,63ZM138,92 132,93 137,88ZM158,106 157,104 158,105ZM105,136 103,140 99,138ZM123,124 127,125 125,129ZM127,133 132,133 131,135ZM65,65 69,67 66,66ZM121,131 121,135 117,136ZM129,64 127,65 127,61ZM148,81 150,81 150,82ZM119,101 123,102 118,104ZM111,134 115,141 110,141ZM153,114 152,114 150,114ZM162,119 158,117 161,118ZM134,145 127,146 128,144ZM110,155 111,160 109,157ZM113,151 116,151 118,156ZM119,85 118,91 115,90ZM152,72 154,70 157,76ZM57,69 59,73 55,70ZM27,101 25,102 25,102ZM29,133 31,136 27,134ZM132,52 133,48 135,48ZM97,148 103,147 102,155ZM91,42 85,39 92,38ZM105,125 104,125 108,123ZM38,108 35,110 38,108ZM127,167 123,167 126,163ZM45,79 40,81 44,77ZM125,60 117,60 120,54ZM113,122 111,118 113,117ZM150,120 150,118 151,121ZM42,114 42,116 40,116ZM77,125 76,131 74,126ZM51,88 54,84 57,87ZM28,83 26,88 24,88ZM100,56 99,52 104,53ZM130,60 136,62 132,65ZM115,106 118,110 112,112ZM18,92 19,86 23,91ZM130,159 128,159 130,155ZM122,63 127,65 124,67ZM18,119 18,124 16,120ZM126,163 123,167 121,166ZM90,58 90,57 91,56ZM33,76 25,76 29,73ZM67,62 69,60 72,65ZM42,65 40,66 39,62ZM127,101 126,100 130,98ZM135,96 137,94 137,97ZM50,55 53,58 48,57ZM151,100 153,103 152,103ZM96,113 94,109 97,111ZM78,123 72,119 79,120ZM103,158 106,158 104,160ZM97,39 97,39 99,38ZM115,79 110,83 114,76ZM115,42 112,42 112,40ZM93,137 89,138 91,136ZM40,66 36,66 39,62ZM47,101 50,103 49,107ZM129,64 130,60 132,65ZM115,129 111,124 114,123ZM124,162 126,163 121,166ZM31,86 28,83 34,85ZM110,102 111,101 110,102ZM108,51 105,47 112,46ZM21,128 22,125 23,128ZM138,142 140,140 141,142ZM127,70 126,71 127,69ZM162,114 162,113 162,113ZM150,73 148,70 152,72ZM43,128 34,129 40,122ZM128,80 124,80 127,77ZM74,126 72,131 70,126ZM119,125 117,124 118,122ZM43,73 42,72 44,71ZM89,142 90,142 93,146ZM121,63 122,63 122,68ZM103,47 102,46 103,46ZM157,104 159,102 158,105ZM137,99 139,98 140,101ZM96,135 98,137 93,137ZM90,73 88,77 88,75ZM114,123 113,122 118,122ZM66,66 69,67 64,71ZM110,73 108,76 106,72ZM89,93 93,89 92,98ZM123,136 127,133 130,141ZM18,119 21,117 21,119ZM132,124 131,123 135,122ZM121,76 121,75 127,77ZM70,58 66,55 69,51ZM88,87 87,81 90,86ZM92,69 91,62 94,66ZM40,69 38,70 40,68ZM32,72 33,76 29,73ZM77,78 76,78 77,75ZM102,87 100,86 104,81ZM105,61 102,66 101,60ZM72,119 76,116 79,120ZM86,44 84,50 82,50ZM153,130 151,121 157,123ZM74,111 74,107 75,106ZM147,117 149,116 149,117ZM112,132 107,128 109,126ZM131,106 127,101 133,101ZM139,65 137,72 134,69ZM29,128 23,131 23,128ZM142,107 140,101 144,106ZM136,130 132,131 136,129ZM58,138 57,135 57,135ZM121,96 126,100 122,101ZM72,123 74,126 70,126ZM42,111 40,116 40,110ZM68,110 72,108 73,112ZM151,89 150,93 148,91ZM22,95 20,94 23,91ZM59,83 57,82 61,82ZM163,107 164,104 164,107ZM84,107 83,109 78,107ZM54,98 56,99 55,102ZM63,65 56,64 62,60ZM115,106 111,109 113,103ZM58,125 58,120 61,122ZM156,134 153,130 156,131ZM48,96 49,90 52,95ZM97,39 97,39 92,38ZM148,135 153,136 148,138ZM106,72 106,66 108,65ZM162,113 162,113 160,111ZM94,66 91,62 94,62ZM105,125 108,123 107,126ZM149,74 150,74 155,79ZM116,105 115,101 118,104ZM136,127 139,127 136,129ZM122,63 124,67 122,68ZM44,92 49,90 46,94ZM129,64 127,61 130,60ZM137,63 134,69 132,65ZM108,76 107,76 106,72ZM107,86 105,87 104,81ZM107,163 106,166 106,163ZM77,98 78,100 74,101ZM120,100 119,101 116,100ZM96,113 94,114 94,109ZM23,124 29,128 23,128ZM92,43 93,47 90,44ZM147,77 148,78 148,79ZM130,151 127,146 134,145ZM36,114 40,117 33,123ZM40,81 34,85 35,79ZM138,110 131,106 135,102ZM150,74 152,72 157,76ZM99,95 93,89 98,90ZM45,74 43,73 46,74ZM97,159 98,157 98,158ZM82,143 82,140 82,143ZM57,135 58,138 55,139ZM24,95 22,95 23,91ZM52,114 53,113 54,113ZM103,140 105,136 110,141ZM62,86 61,82 67,82ZM118,91 116,92 115,90ZM20,114 21,117 16,117ZM160,91 157,89 162,88ZM109,40 109,40 108,39ZM117,59 116,54 120,54ZM82,89 84,93 80,92ZM21,117 20,114 24,118ZM105,87 102,87 104,81ZM116,51 116,54 108,51ZM85,39 86,44 78,41ZM129,87 126,91 126,86ZM151,108 153,114 150,114ZM73,136 78,134 75,139ZM74,78 76,78 74,78ZM43,119 49,113 52,118ZM126,106 123,105 126,102ZM39,91 31,96 34,91ZM164,114 163,120 161,118ZM150,81 148,80 148,79ZM118,107 116,105 118,104ZM119,163 124,162 121,166ZM88,142 89,138 90,142ZM146,141 144,143 145,140ZM70,119 66,113 71,115ZM102,46 104,41 103,46ZM43,129 48,131 46,135ZM121,131 115,129 119,125ZM28,106 23,108 23,105ZM151,121 153,130 145,123ZM60,133 57,135 58,132ZM65,61 64,64 62,60ZM108,123 109,126 107,126ZM69,51 67,49 71,49ZM29,92 34,91 30,93ZM123,115 126,114 127,117ZM105,46 105,47 104,47ZM94,62 90,58 97,59ZM99,52 100,56 95,55ZM71,89 66,90 67,82ZM53,95 51,98 52,95ZM147,77 149,74 148,78ZM37,104 41,106 38,108ZM145,65 147,69 145,68ZM136,147 137,142 138,146ZM62,70 60,69 63,65ZM97,157 97,159 93,155ZM48,112 49,107 49,112ZM31,70 32,72 29,71ZM131,123 129,121 130,122Z" fill="#7e7e7e"/><path d="M25,102 25,102 25,102ZM100,66 102,66 101,69ZM25,95 23,97 24,95ZM153,130 151,121 157,123ZM127,65 129,64 128,65ZM136,151 136,147 138,147ZM103,70 106,66 106,72ZM131,109 126,106 131,106ZM124,80 124,82 121,84ZM90,48 94,53 89,51ZM133,86 132,86 129,82ZM139,127 135,122 142,125ZM75,85 71,82 74,81ZM94,114 91,122 88,116ZM40,81 38,77 44,77ZM79,86 79,83 80,84ZM102,66 100,66 101,60ZM106,77 107,76 108,76ZM127,124 129,121 129,125ZM28,83 31,86 26,88ZM103,147 104,146 107,150ZM134,145 128,144 130,141ZM93,69 92,69 94,66ZM104,41 102,46 98,43ZM131,106 133,101 135,102ZM58,117 63,114 61,122ZM127,133 132,133 131,135ZM138,132 136,130 139,129ZM17,101 16,104 16,98ZM151,89 147,85 151,83ZM142,135 139,138 139,135ZM70,136 67,136 68,130ZM113,151 109,149 113,143ZM108,84 110,85 109,85ZM75,113 76,116 71,115ZM153,136 148,135 153,130ZM109,157 111,160 108,160ZM103,140 103,142 98,143ZM129,118 133,119 130,122ZM118,107 116,105 118,104ZM145,58 137,56 140,53ZM129,128 127,125 129,125ZM36,69 38,70 36,74ZM76,92 77,98 70,97ZM127,101 126,102 126,100ZM117,81 121,84 116,81ZM129,67 131,70 130,70ZM108,102 105,109 101,106ZM34,129 31,128 33,123ZM21,128 21,127 22,125ZM137,72 145,71 145,75ZM84,61 86,61 85,63ZM53,121 52,118 58,117ZM49,68 52,69 50,74ZM94,66 94,62 95,64ZM148,70 150,73 145,71ZM148,81 148,80 150,81ZM106,60 103,56 109,56ZM106,158 107,150 109,151ZM138,61 136,58 137,56ZM90,58 91,56 97,59ZM130,98 134,95 135,97ZM71,100 71,106 70,100ZM126,143 123,142 123,141ZM109,149 108,150 107,150ZM98,137 104,134 99,138ZM26,120 24,118 27,119ZM34,77 34,75 36,74ZM106,166 110,167 109,168ZM50,140 51,141 47,141ZM144,110 142,107 144,106ZM154,114 160,111 156,115ZM62,70 59,73 60,69ZM56,99 56,97 58,100ZM123,124 122,120 124,122ZM126,100 123,102 122,101ZM129,161 128,159 130,159ZM43,141 41,138 46,135ZM149,142 151,144 148,142ZM164,114 162,114 162,113ZM80,100 85,104 78,107ZM105,48 108,51 105,52ZM98,157 97,159 97,157ZM42,72 40,71 40,69ZM39,91 44,97 35,101ZM18,119 18,124 16,120ZM94,69 99,73 99,74ZM104,126 104,125 105,125ZM24,88 26,88 23,91ZM31,86 32,87 29,92ZM150,82 150,81 151,83ZM138,110 131,106 135,102ZM128,56 132,52 134,55ZM39,91 31,96 34,91ZM93,89 88,89 90,86ZM116,92 116,93 114,92ZM96,119 102,115 98,120ZM108,123 111,124 109,126ZM117,117 119,117 118,122ZM123,132 127,133 123,136ZM110,83 110,75 114,76ZM102,126 94,124 98,120ZM55,106 59,106 53,110ZM79,83 78,83 78,82ZM31,128 30,129 29,128ZM123,155 121,159 118,156ZM153,101 153,103 151,100ZM119,170 118,167 121,166ZM72,123 74,126 74,126ZM118,44 116,41 117,40ZM142,107 138,110 135,102ZM116,54 113,56 108,51ZM134,119 137,116 138,119ZM113,56 116,54 115,58ZM59,86 57,85 59,83ZM96,119 99,112 102,115ZM16,117 18,119 17,119ZM143,145 138,146 141,142ZM123,124 127,125 125,129ZM22,125 23,124 23,128ZM138,92 140,89 143,93ZM102,48 103,47 105,48ZM97,45 100,48 97,49ZM135,114 137,116 135,114ZM129,121 129,118 130,122ZM160,85 159,82 162,88ZM77,78 78,74 83,79ZM18,119 16,120 17,119ZM54,98 56,97 56,99ZM151,100 147,95 151,97ZM140,140 142,135 145,140ZM40,116 40,117 36,114ZM105,46 105,47 104,47ZM76,62 76,61 78,62ZM107,86 105,87 104,81ZM150,73 148,70 152,72ZM160,111 162,113 156,115ZM140,89 144,90 143,93ZM123,132 121,131 125,129ZM75,45 73,44 78,41ZM104,125 104,124 108,123ZM82,143 82,140 82,143ZM136,142 134,145 130,141ZM29,128 30,129 27,134ZM52,118 54,113 58,117ZM117,117 118,115 119,117ZM159,102 164,101 164,104ZM83,109 75,113 78,107ZM90,142 95,142 93,146ZM147,77 149,74 148,78ZM97,59 100,58 101,60ZM18,112 22,106 23,108ZM127,60 125,60 128,56ZM51,88 57,87 52,95ZM124,67 127,65 127,69ZM158,106 157,104 158,105ZM55,60 56,64 53,62ZM63,80 69,76 67,82ZM86,51 87,52 86,53ZM134,69 129,67 132,65ZM128,70 127,70 127,69ZM35,101 32,110 29,103ZM147,115 145,114 144,110ZM130,116 131,109 135,114ZM119,85 116,82 116,81ZM129,87 132,86 132,93ZM120,70 117,65 122,68ZM107,163 106,166 106,163ZM71,44 71,49 67,46ZM82,143 82,143 85,147ZM144,79 146,77 148,79ZM96,135 98,137 93,137ZM110,102 111,101 110,102ZM79,121 78,123 79,120ZM118,108 118,110 115,106ZM105,125 104,125 108,123ZM115,101 116,105 113,103ZM46,99 48,97 49,100ZM50,55 48,57 48,57ZM130,163 131,161 132,164ZM51,137 50,140 49,139ZM148,81 147,85 145,85ZM123,141 123,136 130,141ZM42,65 42,60 47,64ZM78,138 78,141 75,139ZM121,96 122,95 126,100ZM88,142 89,142 87,144ZM51,98 53,98 49,100ZM87,95 85,96 84,93ZM41,120 43,121 40,122ZM105,93 101,95 98,90ZM88,71 88,70 90,73ZM99,112 96,113 97,111ZM105,42 104,41 103,40ZM136,62 138,61 137,63ZM76,54 82,59 75,57ZM133,86 129,82 130,80ZM74,107 74,111 72,108ZM72,138 73,136 75,139ZM126,162 129,161 129,163ZM91,56 94,53 95,55ZM78,85 79,86 80,89ZM145,65 144,64 146,62ZM131,70 134,69 133,72ZM57,135 58,138 55,139ZM76,54 75,57 73,57ZM116,92 115,92 115,90ZM88,87 82,89 85,81ZM103,40 104,41 99,38ZM152,81 155,86 151,83ZM104,146 103,147 104,147ZM142,135 148,135 145,140ZM70,119 66,113 71,115ZM125,118 129,121 124,122ZM151,66 153,69 149,69ZM16,108 16,109 16,106ZM121,96 121,96 120,100ZM31,96 31,98 25,95ZM128,159 123,161 123,155ZM144,143 146,141 148,142ZM91,42 85,39 92,38ZM63,47 71,44 67,46ZM163,94 160,91 162,88ZM89,57 90,58 87,61ZM118,110 118,108 119,110ZM137,97 140,96 139,98ZM118,141 115,141 118,139ZM74,65 76,62 78,62ZM116,51 116,54 108,51ZM140,96 147,95 140,101ZM79,86 82,89 80,89ZM91,80 90,78 94,79ZM121,75 122,72 127,77ZM44,97 46,99 43,102ZM115,141 120,144 113,143ZM76,78 74,78 74,77ZM130,70 133,72 127,77ZM42,60 42,65 39,62ZM150,118 147,120 149,117ZM77,75 74,75 74,75ZM153,69 151,66 154,70ZM136,161 138,156 140,157ZM147,115 144,110 151,108ZM114,76 111,71 115,74ZM92,69 91,62 94,66ZM138,142 140,140 141,142ZM21,127 18,124 22,125ZM94,66 91,62 94,62ZM107,87 108,88 107,88ZM130,152 132,155 130,155ZM84,93 85,96 80,92ZM137,94 138,92 138,94ZM158,105 159,102 164,104ZM117,96 116,100 109,98ZM123,145 123,142 126,143ZM40,72 43,73 38,77ZM159,102 157,103 159,100ZM110,75 110,83 108,76ZM134,79 130,80 127,77ZM136,130 132,131 136,129ZM102,126 104,126 100,130ZM33,131 31,128 34,129ZM94,44 92,43 91,42ZM115,79 117,81 116,81ZM104,131 104,126 105,131ZM83,109 84,115 75,113ZM24,95 22,95 23,91ZM150,73 152,72 150,74ZM121,137 118,141 118,139ZM144,143 143,145 141,142ZM85,39 86,44 78,41ZM37,104 35,110 32,110ZM119,85 118,91 115,90ZM103,46 105,42 105,44ZM112,59 115,58 114,60ZM109,56 104,53 105,52ZM121,136 121,135 123,136ZM64,104 58,100 63,98ZM78,62 84,61 85,63ZM54,126 58,125 54,127ZM65,111 65,110 68,110ZM135,99 137,97 137,99ZM104,97 101,98 101,95ZM102,115 103,120 98,120ZM127,84 124,82 129,82ZM124,67 124,70 122,68ZM146,141 144,143 145,140ZM117,61 118,61 117,65ZM94,109 94,114 92,108ZM88,105 88,107 85,105ZM76,116 84,115 84,115ZM163,99 160,97 162,95ZM118,107 123,105 118,108ZM52,69 53,68 55,70ZM36,69 31,70 34,67ZM82,143 87,144 85,147ZM93,78 90,73 94,69ZM57,86 59,86 57,87ZM33,76 25,76 29,73ZM48,96 44,97 46,94ZM128,159 123,155 130,155ZM95,55 100,56 97,59ZM50,140 47,141 49,139ZM110,75 110,73 114,76ZM138,61 139,65 137,63ZM144,110 145,114 143,113ZM89,138 88,134 91,136ZM105,87 107,87 107,88ZM70,58 67,56 66,55ZM162,114 162,113 162,113ZM80,100 84,99 84,101ZM130,152 132,153 132,155ZM40,122 34,129 33,123ZM31,98 33,99 29,103ZM118,115 117,112 119,114ZM139,129 136,130 136,129ZM109,62 108,64 106,60ZM75,105 74,101 77,102ZM78,82 74,81 76,78ZM97,98 94,100 92,98ZM146,62 145,58 150,64ZM86,53 87,52 88,56ZM21,117 20,114 24,118ZM79,83 78,82 83,79ZM44,77 46,74 50,74ZM38,108 35,110 38,108ZM18,119 21,117 21,119ZM35,134 38,137 35,138ZM162,113 163,107 164,107ZM88,107 89,106 90,108ZM98,143 95,142 99,138ZM53,68 53,66 55,70ZM20,94 18,92 23,91ZM78,60 78,60 82,59ZM85,96 84,99 80,92ZM64,104 66,99 70,100ZM130,98 126,100 129,95ZM90,48 86,48 90,44ZM115,129 112,132 109,126ZM153,138 153,136 154,136ZM100,161 97,159 100,159ZM119,62 121,63 117,65ZM21,119 26,120 23,124ZM48,131 46,126 48,128ZM74,81 71,82 74,78ZM88,70 89,69 90,73ZM102,48 102,46 103,47ZM71,89 69,92 66,90ZM103,70 99,73 101,69ZM114,64 109,62 114,60ZM119,101 123,102 118,104ZM100,48 97,51 97,49ZM146,77 147,77 148,79ZM82,140 89,138 87,142ZM129,128 127,133 125,131ZM87,80 87,81 85,81ZM31,70 29,71 34,67ZM120,171 119,170 123,170ZM16,120 16,117 17,119ZM78,83 79,86 78,85ZM151,100 153,103 152,103ZM97,89 100,86 98,90ZM147,77 146,77 145,75ZM93,47 90,48 90,44ZM122,95 121,96 118,91ZM121,84 124,88 119,85ZM111,124 115,129 109,126ZM76,72 76,68 76,68ZM69,60 70,58 73,58ZM71,49 76,52 71,49ZM43,89 38,89 42,86ZM139,98 140,96 140,101ZM134,101 135,99 135,100ZM141,119 142,125 138,119ZM41,139 38,137 40,137ZM71,49 73,44 75,45ZM157,104 152,106 153,103ZM116,82 115,79 116,81ZM106,158 110,155 109,157ZM129,118 125,118 127,117ZM112,42 115,46 112,46ZM116,159 113,151 118,156ZM114,123 111,124 113,122ZM112,89 110,85 115,85ZM122,142 120,144 118,141ZM118,108 123,105 119,110ZM83,79 85,81 80,84ZM117,81 115,79 118,78ZM147,85 151,89 148,91ZM74,77 69,76 74,75ZM151,144 148,149 150,145ZM23,124 26,120 29,128ZM89,151 92,152 93,155ZM112,117 111,113 113,117ZM63,114 65,111 66,113ZM134,101 135,100 135,102ZM75,134 73,136 72,131ZM142,125 141,119 145,123ZM71,136 71,136 73,136ZM104,126 104,131 100,130ZM78,74 77,78 77,75ZM155,86 159,85 159,85ZM30,129 29,133 27,134ZM43,67 40,69 40,68ZM119,116 123,115 119,117ZM144,90 145,86 148,91ZM51,127 50,134 48,131ZM38,89 35,87 38,88ZM146,77 144,78 145,75ZM47,112 42,114 46,112ZM63,114 66,113 63,114ZM110,102 111,101 113,103ZM110,83 108,82 108,76ZM117,117 116,118 113,117ZM50,103 49,100 55,102ZM29,133 30,129 30,133ZM144,78 144,79 144,81ZM89,93 93,89 92,98ZM108,84 107,86 104,81ZM96,79 93,78 99,74ZM90,57 89,57 91,56ZM78,134 80,136 79,137ZM108,64 111,66 108,65ZM158,97 160,97 159,100ZM56,97 54,98 54,96ZM87,95 88,98 85,96ZM35,87 32,87 34,85ZM47,63 48,57 53,62ZM67,124 61,122 61,122ZM147,95 147,102 140,101ZM119,75 121,76 118,78ZM87,93 87,95 84,93ZM131,124 131,123 132,124ZM136,127 129,128 132,124ZM76,68 74,65 76,68ZM78,82 77,78 83,79ZM120,100 116,100 117,96ZM111,109 115,106 112,112ZM72,123 74,126 70,126ZM100,56 103,57 100,58ZM121,137 123,136 123,141ZM132,155 130,159 130,155ZM110,155 111,160 109,157ZM51,127 54,126 54,127ZM29,133 31,136 27,134ZM96,79 99,82 90,86ZM108,88 110,90 107,88ZM68,110 72,108 73,112ZM100,56 99,52 104,53ZM151,89 153,89 150,93ZM38,88 35,87 34,85ZM116,159 115,161 111,160ZM139,111 144,110 143,113ZM119,112 123,115 119,114ZM67,136 63,137 61,136ZM78,138 78,134 79,137ZM24,110 23,108 28,106ZM86,53 82,59 82,50ZM111,101 115,101 113,103ZM102,115 99,112 105,109ZM85,104 85,105 84,107ZM141,119 138,115 143,118ZM147,102 151,100 152,103ZM153,114 153,118 152,115ZM137,111 131,109 138,110ZM106,61 105,61 102,60ZM97,44 97,45 94,44ZM112,42 112,46 105,44ZM46,126 43,129 43,128ZM147,120 151,121 145,123ZM128,70 130,70 127,77ZM112,89 115,85 115,90ZM110,73 110,75 108,76ZM118,167 119,163 121,166ZM119,112 118,110 119,110ZM95,142 96,144 93,146ZM132,131 136,127 136,129ZM129,163 127,167 126,163ZM43,67 46,67 44,71ZM132,124 131,123 135,122ZM49,90 44,87 45,86ZM38,89 38,88 42,86ZM80,136 79,134 86,133ZM128,65 129,67 127,69ZM147,120 150,118 150,120ZM137,72 139,80 134,79ZM148,80 148,81 144,81ZM88,134 82,140 86,133ZM49,107 52,109 49,112ZM65,127 68,129 68,130ZM34,75 32,72 36,74ZM99,82 97,89 90,86ZM22,106 17,107 17,106ZM160,97 163,99 159,100ZM148,78 150,81 148,79ZM75,134 78,134 73,136ZM77,125 74,126 78,124ZM164,101 159,102 159,100ZM107,150 109,151 109,151ZM133,48 132,52 128,50ZM102,87 105,87 107,88ZM111,113 112,117 110,114ZM132,133 132,131 133,133ZM40,110 40,116 36,114ZM98,43 102,46 97,45ZM70,58 66,55 69,51ZM97,159 100,161 101,163ZM86,61 86,61 87,61ZM134,95 135,96 135,97ZM138,142 137,142 136,142ZM102,87 100,86 104,81ZM130,95 134,95 130,98ZM107,163 106,163 108,160ZM120,144 122,142 123,145ZM150,120 150,118 151,121ZM114,64 117,65 113,68ZM123,115 119,116 119,114ZM64,107 62,109 62,106ZM24,118 26,120 21,119ZM109,62 114,64 111,66ZM84,99 80,100 80,92ZM62,86 59,83 61,82ZM87,129 83,127 87,126ZM147,120 147,117 149,117ZM105,61 106,61 108,64ZM127,146 123,145 126,143ZM73,58 70,58 73,57ZM146,146 144,143 148,142ZM130,116 129,118 127,117ZM132,93 130,95 129,95ZM88,134 90,134 91,136ZM106,134 105,136 104,134ZM97,159 98,157 98,158ZM71,82 75,85 72,88ZM61,82 63,80 67,82ZM107,93 105,93 107,88ZM133,119 134,119 135,122ZM100,58 102,60 101,60ZM25,76 24,80 22,81ZM123,161 124,162 119,161ZM124,151 127,146 127,152ZM25,102 28,106 23,105ZM25,102 27,101 29,103ZM102,101 108,102 101,106ZM100,130 96,135 95,132ZM52,109 55,106 53,110ZM89,93 87,93 88,92ZM107,93 109,96 106,94ZM59,73 57,75 55,70ZM108,39 109,40 105,42ZM50,134 50,135 48,131ZM138,61 136,62 135,60ZM120,144 123,145 120,152ZM109,96 110,90 114,92ZM46,67 42,65 47,64ZM43,92 44,92 46,94ZM115,92 112,89 115,90ZM125,60 127,65 122,63ZM65,65 69,67 66,66ZM147,77 145,75 149,74ZM91,122 94,114 96,119ZM57,75 54,80 51,79ZM121,63 125,60 122,63ZM100,107 97,102 101,106ZM72,123 67,124 70,119ZM78,74 76,72 76,68ZM89,57 90,57 90,58ZM86,44 82,50 78,41ZM121,76 124,80 117,81ZM130,60 128,56 134,55Z" fill="#a0a0a0"/><path d="M87 142L82 140M150 64L154 70M92 108L90 108M119 125L125 129M89 151L85 147M92 98L94 100M94 109L96 113M149 117L150 118M127 61L129 64M131 124L131 123M130 70L133 72M118 141L120 144M40 137L41 139M41 83L34 85M25 95L31 96M85 147L82 143M29 71L34 67M113 117L117 117M94 109L95 103M90 134L93 133M26 88L29 92M80 100L77 98M124 42L118 44M78 60L78 60M34 67L39 62M36 66L40 66M76 131L76 132M105 131L109 133M86 48L89 51M50 74L45 79M138 156L133 158M119 85L121 84M109 157L110 155M134 95L130 98M137 88L139 82M86 116L85 122M108 88L109 85M66 90L69 92M124 80L128 80M19 103L17 101M104 160L108 160M97 44L98 43M95 108L95 103M139 80L137 82M123 45L118 44M48 96L51 98M90 58L94 62M137 72L145 71M64 104L70 100M147 95L140 96M64 104L58 100M102 101L101 98M57 87L57 86M109 147L107 150M117 40L112 40M40 68L38 70M151 83L155 86M18 112L19 113M119 125L123 124M49 107L41 106M77 75L74 75M109 157L111 160M86 133L87 129M135 60L136 62M104 125L105 125M91 122L96 119M54 80L51 81M91 122L87 126M128 112L126 114M107 88L107 93M138 119L137 116M117 40L115 42M106 72L107 76M52 69L52 67M123 105L118 104M134 145L137 142M147 85L145 85M146 146L148 142M100 86L104 81M78 124L79 121M128 56L128 50M78 74L77 78M58 100L56 97M79 86L78 83M104 115L105 109M113 151L109 149M104 126L107 128M123 105L118 107M105 61L106 66M141 119L137 116M71 106L73 101M104 81L108 84M118 61L121 63M140 101L137 99M119 112L119 110M127 124L127 125M119 161L123 161M138 110L131 109M71 66L74 65M125 60L121 63M76 78L74 78M129 121L130 122M57 82L54 84M94 69L99 74M84 101L80 100M147 95L143 93M107 150L103 147M43 141L41 139M57 82L56 80M122 95L129 95M49 90L51 88M119 161L119 163M120 89L124 88M106 115L109 114M136 130L133 133M148 80L144 79M121 131L117 136M25 95L29 92M40 117L40 116M144 81L141 81M22 103L22 106M44 58L48 57M105 131L104 126M138 146L141 142M103 147L97 148M116 82L115 85M97 102L97 98M84 115L82 121M46 135L50 135M146 116L145 114M65 110L62 109M130 45L123 45M88 105L94 100M87 81L85 81M102 75L99 73M78 123L72 119M118 139L121 137M75 106L78 107M128 159L123 155M143 66L144 64M148 79L150 81M55 102L57 105M102 48L105 48M118 122L117 124M94 69L99 73M25 102L25 102M52 114L54 113M124 67L127 65M128 159L126 162M153 118L157 123M115 141L115 141M31 128L33 131M126 112L119 112M138 142L139 138M127 125L129 128M36 114L40 116M110 167L109 162M33 76L32 72M94 44L92 43M52 95L57 87M97 159L100 161M109 56L106 60M118 139L115 141M69 92L70 97M108 82L108 76M24 110L28 112M156 134L153 130M135 80L137 82M35 87L34 91M77 102L80 100M76 54L76 52M46 99L43 102M127 167L126 163M67 49L69 51M105 93L98 90M34 129L33 131M78 60L81 60M50 74L52 69M150 114L151 108M138 61L142 64M84 50L86 51M109 98L109 96M114 60L114 64M105 46L103 46M48 97L49 100M41 139L41 138M144 81L148 80M151 97L156 93M150 73L150 74M84 101L88 98M131 106L135 102M107 128L112 132M49 90L46 94M105 61L108 64M102 101L97 102M98 120L103 120M21 127L21 128M111 118L109 114M102 101L97 98M121 96L121 96M76 132L81 129M105 136L111 134M148 138L145 140M83 109L84 107M124 67L122 63M49 68L52 67M89 151L93 146M122 142L120 144M79 86L79 83M54 96L59 90M74 77L76 78M19 103L23 102M98 137L96 135M123 105L126 102M79 139L78 138M109 151L108 150M157 76L159 82M92 98L88 98M80 89L76 92M16 108L16 106M111 118L110 114M104 124L103 120M99 38L92 38M156 92L153 89M90 86L97 89M104 134L104 131M25 95L23 97M116 51L120 54M129 161L129 163M69 76L63 80M137 72L133 72M52 95L48 96M152 81L148 78M78 141L75 139M59 106L62 106M36 69L32 72M163 120L161 118M153 89L156 93M115 92L114 92M98 120L94 124M135 114L135 114M97 157L97 148M44 58L50 55M48 112L47 112M88 87L85 81M57 75L63 80M156 92L160 91M144 81L139 82M76 131L74 126M119 85L115 90M60 133L61 136M120 54L124 55M56 51L62 54M75 45L71 49M50 74L46 74M75 105L73 101M65 61L67 62M53 98L49 100M134 145L130 141M29 71L31 70M88 56L87 52M51 98L49 100M78 100L80 100M111 160L110 155M142 64L144 64M135 99L130 98M94 66L91 62M100 86L98 90M148 138L153 136M19 86L21 86M80 92L80 92M78 74L76 68M94 79L96 79M77 98L73 100M52 118L49 113M19 86L23 91M118 141L115 141M119 161L121 159M96 135L93 137M98 79L104 81M111 113L112 117M115 129L117 124M128 143L128 144M85 96L80 92M43 121L43 119M54 96L56 97M43 129L46 126M23 105L28 106M67 136L68 130M78 61L81 60M145 68L143 66M29 103L31 98M119 112L119 112M111 113L112 112M138 156L135 154M89 93L88 92M129 121L125 118M87 93L88 92M79 86L80 84M57 87L59 90M127 101L126 102M64 104L66 99M135 100L137 99M91 56L88 56M90 78L87 78M164 114L163 120M66 57L70 58M57 135L61 136M56 80L61 82M127 133L127 133M145 85L145 86M107 126L109 126M39 135L37 132M88 107L90 108M116 105L118 104M112 112L117 112M67 136L63 137M97 111L96 113M40 68L43 67M162 119L161 118M104 134L105 136M63 137L58 138M85 39L92 38M32 110L35 101M109 149L109 151M78 82L76 78M94 79L90 78M118 122L122 120M82 143L82 143M32 87L34 91M96 119L102 115M88 105L88 98M55 102L50 103M98 67L95 64M153 101L151 97M123 115L126 114M52 69L49 68M90 44L90 48M123 167L121 166M142 87L145 86M90 44L86 48M148 81L145 85M158 97L153 101M147 85L150 82M94 53L93 47M62 86L66 90M138 92L137 88M114 60L115 58M127 146L126 143M74 126L74 126M51 79L57 75M57 87L54 84M131 124L129 128M100 86L102 87M104 146L104 147M119 75L120 73M33 76L34 75M71 106L72 108M128 56L127 60M162 113L162 114M112 132L109 126M105 136L106 134M32 72L31 70M133 133L132 133M149 74L155 79M76 85L74 81M135 56L137 56M16 109L16 106M132 124L136 127M133 101L134 101M28 83L35 79M104 53L105 52M103 158L106 158M118 156L123 155M86 133L88 134M86 61L85 63M42 65L47 64M120 70L121 71M137 56L136 58M78 85L76 85M71 136L73 136M104 41L98 43M109 114L105 109M146 62L144 64M107 88L110 90M53 68L52 69M16 108L17 107M135 48L132 52M114 162L111 160M134 145L136 142M144 154L138 147M93 78L94 69M16 117L17 119M144 78L144 79M36 114L40 117M128 80L124 82M93 146L95 142M163 107L164 104M49 107L52 109M71 100L73 100M68 130L70 126M71 44L71 49M101 163L106 163M157 104L152 106M151 144L149 142M133 101L131 106M40 122L40 117M148 79L148 78M77 102L78 100M71 115L72 119M68 110L66 113M103 147L104 147M119 75L121 76M129 121L129 125M151 83L150 81M123 167L126 163M24 118L28 112M87 129L94 124M148 79L146 77M100 107L97 102M72 88L71 89M36 114L35 110M103 56L106 60M77 75L78 74M62 86L67 82M140 53L137 56M117 136L115 129M108 102L110 102M103 158L100 159M90 134L87 129M102 48L100 48M26 120L27 119M48 97L44 97M120 70L115 74M109 85L108 84M18 119L16 117M70 119L66 113M162 125L157 123M86 61L82 59M38 77L44 77M126 91L122 95M40 137L46 135M100 107L105 109M38 108L38 108M109 98L110 102M115 46L118 44M50 134L51 127M67 56L66 57M55 106L59 106M93 89L98 90M103 70L101 69M44 77L45 74M133 119L130 116M151 121L157 123M124 151L123 155M31 128L33 123M151 97L151 100M62 126L67 124M59 59L62 54M118 91L116 92M112 59L113 56M136 129L136 127M97 102L95 103M43 102L47 101M74 126L77 125M158 130L153 130M123 105L123 102M125 60L127 61M147 69L149 69M74 126L70 126M87 93L84 93M135 122L136 127M142 135L148 135M134 145L136 147M126 112L126 114M157 123L162 120M157 89L160 91M57 69L59 73M53 64L47 63M145 65L146 62M132 86L137 88M162 125L160 128M78 124L83 127M127 152L130 155M53 113L49 112M102 75L107 76M93 69L90 73M73 136L78 134M136 151L134 145M64 104L62 106M105 87L107 86M76 131L77 125M148 80L150 81M153 118L151 121M71 106L65 110M20 114L19 113M71 49L73 44M50 55L48 57M124 122L127 124M44 92L46 94M119 85L118 91M78 82L74 81M119 117L118 122M52 114L52 118M63 80L64 71M120 70L113 68M65 61L62 60M48 112L49 112M80 92L80 89M115 161L119 163M146 116L147 120M111 101L113 103M105 44L112 42M152 115L150 118M116 77L114 76M110 85L112 89M112 46L112 42M43 141L46 135M112 89L115 85M30 133L33 131M134 95L132 93M131 70L130 70M111 168L115 166M144 106L144 110M66 55L62 57M138 132L140 134M163 99L159 100M160 85L159 85M147 95L151 97M80 92L76 92M43 67L40 66M119 125L117 124M69 51L76 54M117 61L118 61M119 112L117 112M112 89L110 90M94 69L94 66M123 136L127 133M136 151L135 154M127 77L121 76M98 158L100 159M90 86L93 89M63 114L62 109M111 118L113 117M62 57L66 57M78 124L72 123M109 40L112 40M40 122L43 128M63 47L67 49M127 77L127 70M63 114L58 117M115 106L113 103M17 106L22 106M115 46L116 51M72 123L70 126M47 141L49 139M97 148L102 155M127 69L124 67M46 135L41 138M112 132L111 134M75 113L73 112M70 136L68 130M85 147L93 146M120 89L118 91M144 154L140 157M148 81L150 82M102 46L98 43M130 159L133 158M106 72L111 71M16 98L20 94M117 136L121 135M57 82L61 82M157 103L159 100M124 80L121 84M50 134L50 135M139 111L137 111M25 76L28 82M144 154L145 147M128 143L130 141M68 126L70 126M102 60L101 60M84 115L86 116M127 124L123 124M118 78L116 77M106 115L104 115M46 74L44 77M65 111L66 113M145 58L146 62M134 79L130 80M108 102L105 109M145 58L145 58M29 103L28 106M156 92L157 89M131 135L127 133M117 65L121 63M139 127L136 127M115 90L116 92M90 73L88 75M129 118L130 116M135 102L137 99M135 154L136 154M64 107L65 110M53 110L54 113M44 58L42 60M87 78L88 77M97 157L102 155M63 47L62 54M49 107L49 112M138 110L139 111M154 70L153 69M132 124L131 123M67 124L65 127M140 89L137 88M67 49L67 46M54 127L58 132M34 67L31 70M23 128L21 128M39 140L38 137M105 136L99 138M137 63L136 62M88 107L85 105M103 142L110 141M22 81L21 86M88 116L86 116M41 120L40 117M94 66L95 64M83 121L82 121M106 115L105 109M62 86L59 86M36 74L32 72M71 115L70 119M52 95L53 95M89 93L93 89M118 61L117 60M124 80L117 81M78 60L76 61M136 130L136 129M74 77L69 76M79 137L80 136M109 98L104 97M82 140L88 134M157 89L159 85M118 122L117 117M101 98L101 95M107 150L109 151M131 135L133 133M40 68L37 67M22 103L23 102M89 69L88 70M106 115L108 123M86 133L80 136M138 61L136 58M137 142L141 142M76 132L75 134M109 56L103 56M153 102L153 103M140 53L145 58M163 120L162 119M121 166L126 163M94 66L93 69M154 70L151 66M117 112L119 114M137 116L138 115M145 86L144 90M40 71L42 72M137 82L139 82M138 94L138 92M128 50L124 55M89 57L91 56M93 155L89 151M75 139L78 134M122 68L121 63M105 87L104 81M122 72L124 70M66 90L59 90M39 62L36 66M85 96L88 98M74 101L73 100M94 100L88 98M25 76L29 71M139 111L143 113M102 60L103 57M145 140L146 141M105 61L106 61M106 95L109 96M26 120L24 118M118 156L113 151M135 99L137 97M142 107L144 110M153 118L150 118M144 81L145 85M104 126L104 124M132 131L132 133M155 107L157 104M110 83L108 76M144 90L148 91M64 107L62 106M151 83L153 89M113 143L115 141M99 95L93 89M104 55L104 53M51 137L50 135M119 117L119 116M105 61L102 66M136 142L139 138M120 51L128 50M108 88L112 89M118 122L116 118M110 167L111 168M20 94L22 95M46 126L51 127M16 104L16 106M135 100L134 101M109 162L111 160M40 81L38 77M125 118L122 120M113 68L114 64M127 69L128 70M135 122L131 123M52 95L51 88M109 101L110 102M82 89L85 81M151 83L152 81M103 56L106 61M73 57L69 51M138 119L142 125M91 62L89 69M27 119L33 123M98 61L94 62M75 85L76 92M148 142L144 143M119 101L120 100M111 118L108 123M94 44L97 39M161 118L158 117M135 80L139 80M89 51L90 48M52 118L51 122M138 110L135 102M118 104L115 101M87 93L87 95M162 88L163 94M122 101L120 100M52 67L53 66M93 89L97 89M109 133L111 134M48 97L48 96M42 111L40 110M47 63L48 57M102 60L100 58M89 93L88 89M30 129L33 131M111 113L113 117M163 94L164 101M47 101L50 103M135 56L130 60M72 138L71 136M87 142L89 138M43 67L44 71M147 120L143 118M142 87L139 82M53 64L52 67M104 126L104 131M64 107L62 109M80 84L85 81M23 97L17 101M94 69L90 73M88 71L90 73M69 60L66 57M71 136L71 136M56 51L63 47M153 136L153 130M111 71L111 66M128 65L129 64M29 103L25 102M24 110L20 114M86 61L88 56M97 51L100 48M87 78L87 80M132 86L129 87M135 154L132 153M118 61L119 62M63 47L71 44M109 96L106 94M108 123L109 126M162 113L162 113M51 127L54 126M70 100L66 99M30 93L34 91M105 136L106 134M32 110L37 104M109 149L111 143M100 66L98 67M91 80L87 81M104 126L105 125M152 115L150 114M43 119L43 122M126 86L127 84M116 81L119 85M159 102L157 103M93 133L96 135M71 115L68 110M107 76L106 77M116 77L115 79M125 131L123 132M110 83L114 76M109 114L110 114M136 161L135 161M160 128L157 123M28 83L28 82M121 159L123 155M66 97L69 92M111 124L109 126M87 70L89 69M84 115L79 120M42 86L45 86M36 74L36 69M109 98L105 100M102 75L106 77M150 64L147 69M88 56L82 59M94 69L93 69M116 164L115 166M67 62L69 60M82 89L79 86M63 98L64 93M36 74L34 75M37 67L40 66M127 77L126 71M16 117L21 117M149 74L148 78M145 65L145 68M132 93L130 95M100 66L101 60M49 102L47 101M123 161L123 155M60 93L54 96M29 103L33 99M116 159L121 159M75 113L76 116M71 82L74 78M25 95L30 93M111 71L115 74M116 51L116 54M116 77L115 74M41 83L45 86M115 106L118 110M99 112L96 113M58 138L57 135M127 146L123 145M123 161L126 162M25 102L23 97M99 38L97 39M40 122L34 129M109 151L109 149M110 83L108 84M132 164L129 163M93 153L92 152M75 85L74 81M145 140L142 135M136 151L138 147M117 40L118 44M118 167L116 164M139 129L148 135M106 77L104 81M110 167L106 166M19 103L22 106M116 93L116 92M90 108L84 107M101 95L98 90M162 113L160 111M106 66L106 72M84 50L86 48M126 91L129 87M38 108L40 110M118 122L123 124M87 70L85 63M28 112L33 111M118 141L122 142M56 99L54 98M51 79L54 80M138 92L137 94M108 82L106 77M43 102L41 106M93 47L97 45M35 134L33 131M155 107L153 114M109 168L110 167M146 77L144 78M127 70L126 71M51 81L54 84M132 155L130 159M84 50L86 44M140 101L147 102M109 133L106 134M25 95L27 101M43 119L52 118M93 146L90 142M149 117L147 117M40 110L38 108M49 68L47 64M107 88L107 87M43 92L46 94M68 110L73 112M105 44L109 40M43 67L40 69M111 109L112 112M49 113L42 116M46 99L47 101M68 130L72 131M104 41L103 40M116 105L113 103M54 98L56 97M52 95L51 98M86 116L88 122M109 151L109 151M106 115L103 120M59 73L63 70M122 95L121 96M80 100L84 99M23 97L23 102M158 97L153 102M102 126L94 124M16 109L18 112M119 110L118 110M158 105L158 106M59 132L58 132M132 124L129 128M87 93L89 93M75 105L74 101M120 89L119 85M127 69L128 65M116 100L117 96M108 160L111 160M137 72L143 66M55 70L53 66M38 77L43 73M84 61L81 60M129 163L130 163M143 113L144 110M129 67L129 64M139 65L142 64M110 75L114 76M164 101L164 107M82 140L80 136M124 162L119 163M55 139L57 135M87 70L88 70M18 92L20 94M116 93L121 96M164 107L164 114M89 138L88 142M113 151L109 151M71 136L70 136M74 65L72 65M85 39L86 44M18 119L17 119M141 81L144 78M79 134L78 134M58 125L53 125M38 88L42 86M148 79L144 79M70 136L67 136M150 64L146 62M150 73L145 71M71 44L78 41M104 134L99 138M51 79L45 79M50 140L51 137M136 129L139 129M147 115L149 116M103 142L106 144M86 53L87 52M121 84L124 88M90 108L89 106M110 83L110 85M78 41L85 39M126 112L123 115M117 59L114 60M136 142L138 142M147 69L148 70M128 56L134 55M162 95L160 97M84 101L84 99M105 44L105 46M123 145L120 144M111 118L113 122M153 138L148 138M35 138L38 137M78 61L78 62M121 131L125 129M153 118L158 117M24 88L28 83M54 127L58 125M120 152L123 155M68 126L67 124M60 93L64 93M46 135L43 129M116 118L113 122M51 81L45 86M62 126L58 125M110 102L109 101M119 110L123 105M116 100L118 104M124 151L127 146M75 113L78 107M105 44L109 40M74 81L76 78M157 89L155 86M78 123L79 121M132 155L133 158M126 162L126 163M145 114L143 113M55 102L56 99M55 106L53 110M117 112L118 110M56 64L53 66M72 138L73 136M49 112L49 113M78 123L79 120M145 68L147 69M138 119L134 119M95 132L93 133M25 102L25 102M116 54L108 51M38 108L35 110M117 65L114 64M135 102L134 101M156 134L153 138M142 135L140 140M79 120L82 121M82 89L80 92M111 109L109 114M122 72L120 73M55 102L49 100M131 124L129 125M38 88L38 89M145 71L145 75M98 90L97 89M68 110L72 108M47 141L43 141M107 86L104 81M54 80L54 84M87 80L83 79M54 80L56 80M122 72L122 72M54 127L50 134M119 125L115 129M149 69L153 69M145 123L153 130M47 63L47 64M101 69L98 67M53 64L53 66M31 136L30 133M147 85L148 91M31 128L29 128M86 116L82 121M102 115L103 120M107 150L106 158M95 102L94 100M78 62L74 65M153 118L154 114M38 108L37 104M139 80L144 78M82 89L88 89M117 164L116 164M128 56L125 60M110 83L115 79M138 61L139 65M132 131L136 127M73 136L72 131M101 60L102 66M46 112L47 112M106 158L108 160M107 150L108 150M21 119L24 118M58 125L58 127M151 89L148 91M155 107L152 106M96 119L99 112M117 112L113 117M46 74L43 73M76 132L72 131M82 143L82 140M126 86L129 87M23 97L27 101M87 61L90 58M103 140L103 142M24 80L28 82M70 100L71 100M151 66L149 69M25 102L25 102M98 108L99 112M139 111L138 115M78 62L76 62M97 159L100 159M78 82L79 83M138 156L136 154M108 39L103 40M132 155L130 152M138 61L145 58M133 119L134 119M118 122L119 125M98 143L99 138M75 105L71 106M106 158L110 155M77 102L78 107M130 116L126 114M127 146L130 151M124 80L121 76M139 65L134 69M159 85L159 85M104 134L106 134M103 142L104 146M84 115L84 115M106 95L105 96M102 126L104 124M105 96L101 95M106 134L111 134M62 70L66 66M90 57L89 57M102 87L105 93M117 164L118 167M125 129L127 125M73 58L72 65M110 73L106 72M97 45L100 48M97 42L98 43M148 91L148 93M146 141L144 143M71 115L66 113M131 109L131 106M103 142L98 143M127 152L130 151M108 65L111 71M53 121L58 117M92 108L94 109M151 66L153 69M63 98L60 93M54 127L51 127M108 39L109 40M23 108L28 106M123 145L126 143M53 113L54 113M162 119L157 123M59 114L54 113M158 130L157 123M74 107L72 108M72 91L69 92M51 79L51 81M137 94L135 96M46 135L48 131M75 57L76 61M104 125L104 124M131 70L133 72M159 82L160 85M133 133L139 138M129 118L127 117M87 61L89 61M72 88L72 91M126 91L132 93M76 52L71 49M76 52L71 49M53 110L53 113M162 88L160 91M97 59L100 56M52 114L49 113M43 67L46 67M29 103L27 101M113 151L113 143M133 133L139 135M49 102L50 103M75 106L78 107M83 121L86 116M23 124L22 125M87 78L88 75M19 103L16 106M74 77L74 75M121 96L120 100M111 143L110 141M105 131L106 134M78 82L77 78M62 57L62 60M118 78L115 79M95 64L98 61M49 107L50 103M72 119L72 123M141 119L145 123M86 44L86 48M93 153L93 146M66 97L66 99M116 151L113 151M84 50L82 50M127 167L129 163M43 89L39 91M28 83L34 85M151 144L148 149M123 161L128 159M102 48L105 52M94 69L98 67M119 116L119 114M159 102L164 104M59 73L55 70M119 75L115 74M126 86L124 82M119 101L116 100M119 85L124 88M97 59L100 58M148 149L144 154M39 140L35 138M59 132L58 127M76 61L76 62M78 41L75 45M98 120L96 119M119 75L119 75M63 65L62 60M132 65L130 60M18 124L23 124M150 93L148 91M35 138L31 136M77 98L80 92M51 98L53 95M50 140L49 139M139 127L136 129M134 145L127 146M118 78L119 75M132 155L135 154M57 87L59 86M131 161L130 163M20 114L24 118M28 83L26 88M73 57L75 57M105 93L101 95M133 101L127 101M66 66L63 65M108 76L106 72M94 53L90 48M164 107L163 107M99 95L98 90M113 117L113 122M150 120L150 118M123 170L123 167M39 91L38 89M117 65L119 62M132 86L129 82M50 74L44 77M138 61L135 60M92 98L97 98M67 62L72 65M76 62L74 65M99 38L98 43M108 102L109 101M127 117L130 116M130 141L127 133M82 89L80 89M110 114L109 114M95 55L91 56M118 156L120 152M102 75L99 74M53 110L59 114M32 87L31 86M155 107L158 106M142 64L145 58M121 135L123 132M78 107L83 109M117 136L121 136M93 153L97 148M55 60L53 62M50 103L49 100M110 141L111 134M118 139L118 141M24 110L19 113M103 46L104 47M27 134L29 128M92 38L97 39M50 134L51 137M138 94L140 96M116 81L115 79M84 115L76 116M57 105L56 102M93 155L92 152M129 82L133 86M159 102L159 100M105 48L104 47M16 120L16 117M66 66L64 71M23 108L23 105M110 167L114 162M100 107L98 108M118 91L115 90M123 136L121 135M110 102L110 102M42 114L42 116M53 62L48 57M56 99L56 102M133 119L130 122M120 89L122 95M118 156L116 159M109 149L113 143M43 102L49 107M90 78L88 77M115 42L112 40M89 51L91 56M152 106L151 108M109 56L113 56M72 119L70 119M23 105L22 106M71 106L70 100M87 126L87 122M43 67L42 65M84 107L84 107M52 67L47 63M71 136L72 131M16 117L20 114M129 163L126 163M78 85L79 86M162 88L159 85M40 68L40 69M126 143L123 142M109 168L111 168M42 65L40 66M104 134L100 130M138 94L143 93M129 161L131 161M52 69L52 69M124 151L120 152M80 92L84 99M111 109L110 102M90 57L91 56M92 108L94 114M62 86L61 82M111 101L110 102M152 103L152 106M38 88L35 87M114 162L116 164M18 119L21 117M125 131L129 128M78 107L80 100M83 109L84 107M102 126L98 120M119 117L122 120M131 135L132 133M63 114L70 119M74 75L76 72M99 112L102 115M93 155L93 153M135 60L130 60M142 87L144 90M158 97L151 97M91 136L93 133M119 112L119 112M143 145L141 142M55 139L51 137M35 79L34 77M36 74L34 77M48 131L51 127M145 123L142 125M116 41L118 44M151 100L153 103M78 138L79 137M16 120L18 119M164 107L162 113M52 118L58 117M138 132L139 135M90 44L91 42M42 111L42 114M46 94L44 97M72 65L69 67M95 103L98 108M100 56L99 52M136 161L133 158M128 56L124 55M29 71L29 73M145 75L147 77M104 55L100 56M43 89L42 86M56 99L58 100M109 96L117 96M78 100L77 98M157 103L153 103M110 73L108 76M42 60L42 65M135 48L134 55M48 128L51 127M126 91L129 95M64 93L69 92M144 143L141 142M65 111L68 110M84 115L76 116M116 93L117 96M137 72L139 80M50 55L56 51M117 61L117 65M129 161L126 162M16 106L17 106M150 114L149 116M66 90L67 82M74 81L74 78M102 75L98 79M89 69L89 61M83 127L77 125M109 62L111 66M130 151L132 153M138 132L139 129M89 138L90 142M35 110L32 110M97 159L98 158M52 69L53 68M63 65L60 69M48 97L51 98M122 68L121 71M112 117L110 114M78 141L78 138M88 142L90 142M120 73L121 71M76 62L73 58M48 96L44 97M98 137L99 138M23 128L29 128M124 122L125 118M78 62L76 68M127 77L130 70M106 166L106 163M35 138L35 134M71 44L67 46M75 57L82 59M79 139L82 140M90 86L96 79M43 121L43 122M64 71L69 67M72 70L64 71M71 66L69 67M85 122L88 122M111 101L115 101M132 52L133 48M47 101L49 100M159 82L155 79M89 138L88 134M39 135L38 137M139 98L137 99M129 95L130 95M122 101L121 96M105 47L112 46M133 101L130 98M85 96L84 99M153 103L152 106M138 142L141 142M72 91L71 89M105 131L104 131M109 85L107 86M40 116L42 116M137 116L135 114M104 55L103 56M159 85L155 86M163 120L162 125M87 126L87 129M153 118L156 115M143 145L145 147M43 89L38 89M40 110L35 110M148 78L155 79M108 82L108 84M103 40L105 42M76 62L72 65M149 74L150 74M116 51L108 51M98 137L93 137M53 98L54 96M115 171L115 166M32 72L29 73M116 151L118 156M90 78L87 80M109 168L106 166M153 101L151 100M120 73L115 74M40 72L43 73M154 70L152 72M86 48L86 51M88 77L88 75M31 96L39 91M131 109L130 116M136 129L132 131M145 65L147 69M133 86L137 88M89 138L93 137M77 98L76 92M86 133L81 129M117 81L115 79M109 149L108 150M118 108L118 107M158 105L157 104M132 65L129 67M118 115L119 116M94 53L89 51M87 70L78 74M157 76L152 72M53 64L56 64M20 94L23 91M35 134L38 137M76 85L75 85M119 75L120 73M48 131L50 135M111 143L106 144M157 104L153 103M66 90L71 89M162 88L160 85M111 109L105 109M24 95L23 91M53 125L51 127M81 60L82 59M49 68L46 74M35 79L28 82M115 161L111 160M40 81L34 85M108 39L112 40M163 94L160 91M138 110L131 106M135 56L136 58M148 81L150 81M23 131L23 128M137 116L135 114M86 44L82 50M153 114L151 108M115 141L111 134M109 40L112 42M104 115L103 120M88 142L89 142M152 103L151 100M103 140L105 136M40 117L33 123M65 111L63 114M102 101L101 106M158 105L163 107M164 101L159 102M113 68L111 71M71 49L71 49M114 92L110 90M40 110L41 106M111 113L109 114M43 119L49 113M63 98L66 97M43 102L35 101M36 114L33 111M129 161L130 159M146 116L143 118M105 125L107 128M126 91L126 86M119 75L121 75M105 48L105 52M111 124L115 129M16 108L17 106M43 73L45 74M103 46L105 42M86 53L86 51M31 96L31 98M158 117L157 123M43 122L51 122M130 60L127 60M36 114L33 123M25 76L33 76M113 143L110 141M147 85L145 86M134 119L130 116M74 77L74 75M40 122L33 123M125 129L123 124M124 42L123 45M61 122L58 125M50 134L48 131M138 142L140 140M97 111L99 112M147 85L151 83M130 141L126 143M94 44L97 42M58 120L58 117M79 83L78 83M88 116L90 108M99 82L97 89M77 78L83 79M56 80L57 75M134 95L137 94M157 89L153 89M89 138L82 140M123 105L126 106M71 115L73 112M138 132L136 130M115 141L120 144M132 131L129 128M134 79L137 72M84 61L78 62M151 89L153 89M121 135L121 136M30 133L35 134M22 125L21 128M156 134L154 136M102 48L102 46M34 129L33 123M82 140L79 137M140 140L139 138M135 80L130 80M49 107L48 112M80 92L82 89M127 125L123 124M75 113L84 115M78 124L78 123M110 83L115 85M53 121L51 122M81 129L77 125M43 67L42 72M23 131L21 128M68 110L71 106M160 128L158 130M115 79L114 76M79 121L82 121M158 130L156 134M55 139L51 141M46 126L48 128M87 95L84 93M57 75L55 70M116 159L110 155M62 126L61 122M123 136L123 132M51 141L47 141M78 107L84 107M149 117L147 120M62 126L58 127M60 133L58 132M87 122L88 122M105 61L102 60M63 80L61 82M46 67L44 71M22 81L24 80M148 78L150 81M109 98L115 101M119 117L117 117M135 99L135 97M137 56L134 55M147 95L151 100M39 62L42 65M86 133L82 140M78 62L81 60M102 46L103 47M153 101L153 103M51 137L49 139M99 112L105 109M38 89L34 91M116 159L111 160M70 136L72 131M15 113L20 114M118 91L121 96M73 101L73 100M95 55L97 51M150 114L153 114M82 143L87 144M110 133L107 128M46 94L48 96M87 142L88 142M57 75L61 82M42 111L46 112M105 93L106 94M123 45L120 51M122 142L123 142M129 121L127 124M92 38L97 39M18 92L23 91M132 65L134 69M93 146L87 144M79 83L83 79M137 97L140 96M26 88L23 91M94 100L97 98M97 59L90 58M88 87L88 89M85 104L80 100M57 135L60 133M49 90L44 87M106 66L108 65M101 98L97 98M145 114L143 118M118 115L117 112M29 103L32 110M142 107L135 102M35 87L38 89M146 77L144 79M117 59L117 60M108 64L111 66M91 80L87 80M85 104L85 105M34 129L43 128M27 134L23 131M24 110L23 108M53 125L54 126M152 103L153 103M109 96L114 92M55 106L52 109M140 53L134 55M37 67L36 66M130 98L135 97M146 146L144 143M153 130L148 135M86 133L79 134M62 70L63 70M29 71L32 72M125 60L118 61M72 108L72 108M96 119L94 114M132 164L130 163M116 93L114 92M130 152L130 151M160 111L158 106M58 100L59 106M140 134L142 135M44 71L43 73M100 107L101 106M117 61L117 60M140 140L141 142M74 107L71 106M119 112L119 112M85 147L82 143M105 44L112 46M150 93L153 89M127 101L131 106M129 161L128 159M40 81L41 83M116 151L120 152M138 115L137 111M99 38L103 40M53 68L53 66M35 101L44 97M70 97L71 100M74 77L74 78M143 145L138 146M95 108L98 108M97 148L96 144M127 77L128 70M100 159L98 157M130 80L135 82M59 83L61 82M137 116L134 119M31 136L35 134M19 86L24 88M137 82L135 82M89 51L87 52M114 123L117 124M73 136L75 134M24 88L26 88M67 124L72 123M79 134L81 129M103 140L98 143M109 162L108 160M42 72L43 73M29 92L34 91M117 59L115 58M131 109L135 114M42 111L40 116M95 108L94 109M143 113L143 118M67 124L70 126M153 114L154 114M130 155L123 155M90 86L88 89M104 55L109 56M29 103L35 101M93 146L97 148M121 76L117 81M36 114L28 112M121 166L119 163M99 38L104 41M66 57L62 60M54 113L58 117M86 53L88 56M144 81L144 78M132 86L133 86M156 134L153 136M122 72L121 71M115 46L112 42M116 105L115 101M88 105L88 107M126 86L121 84M124 70L126 71M121 96L120 100M102 101L108 102M106 163L108 160M120 73L121 75M137 72L144 78M22 103L25 102M100 56L103 57M43 122L46 126M112 170L115 166M105 46L105 47M105 166L106 166M118 122L113 122M153 138L151 144M61 82L67 82M126 100L130 98M40 81L35 79M24 110L28 106M146 116L147 115M105 166L106 163M38 88L34 85M16 113L18 112M153 138L149 142M32 87L29 92M52 114L49 112M153 103L153 103M59 132L61 136M43 141L39 140M127 70L128 70M147 95L148 93M62 106L62 109M130 70L129 67M90 134L88 134M105 48L108 51M75 106L77 102M34 129L31 128M35 110L33 111M63 114L66 113M59 59L55 60M79 134L76 132M109 98L111 101M66 66L69 67M71 106L71 100M83 127L87 129M87 142L82 143M164 101L163 99M49 102L49 100M76 68L74 65M88 105L89 106M128 112L126 106M74 75L76 78M23 105L25 102M71 115L76 116M87 61L89 57M127 167L123 167M91 56L91 56M80 136L78 134M45 79L44 77M33 99L39 91M145 85L139 82M108 76L107 76M156 134L156 131M97 42L97 44M131 109L135 114M68 129L70 126M78 85L75 85M116 54L115 58M63 80L67 82M98 158L98 157M109 62L112 59M100 56L100 58M141 119L142 125M74 111L73 112M125 129L123 132M147 117L147 120M94 79L91 80M64 104L64 107M134 119L135 114M145 85L142 87M157 104L159 102M23 124L23 128M84 61L85 63M103 70L106 72M130 141L131 135M70 119L61 122M94 44L97 44M149 69L152 72M43 89L44 87M59 132L65 127M39 135L35 134M105 131L106 134M69 76L67 82M122 72L120 73M66 90L64 93M107 126L107 128M90 86L91 80M135 154L133 158M46 99L48 97M132 164L127 167M93 47L92 43M145 65L143 66M106 134L104 131M105 52L99 52M122 95L118 91M78 61L76 61M150 64L145 65M127 167L123 170M40 122L43 122M150 145L146 146M21 127L18 124M35 79L34 85M67 124L70 119M16 108L18 112M41 83L45 79M67 49L71 49M110 85L108 84M119 85L115 85M148 138L146 141M45 79L45 86M18 124L16 120M160 91L160 97M98 79L96 79M109 62L106 60M94 53L97 49M74 75L69 76M40 122L41 120M127 84L124 82M98 120L102 115M116 93L118 91M43 119L41 120M76 92L80 92M148 79L147 77M76 52L82 50M123 115L127 117M148 79L148 80M151 100L147 102M75 45L76 52M123 102L118 104M42 72L40 72M137 56L145 58M72 119L79 120M18 124L21 119M162 119L158 117M121 96L122 95M33 99L31 98M46 112L41 106M70 97L73 100M148 81L144 81M71 100L73 101M144 90L148 93M95 142L90 142M40 137L38 137M112 170L111 168M115 141L113 143M63 114L66 113M122 72L121 75M127 65L129 64M136 147L137 142M113 143L111 143M87 70L76 68M121 131L115 129M111 109L108 102M64 64L65 65M42 60L47 64M87 122L85 122M77 78L76 78M105 100L108 102M127 152L123 155M121 166L119 170M76 68L76 72M121 63L119 62M133 86L130 80M140 101L140 96M57 82L57 85M119 101L118 104M98 143L97 148M82 143L82 140M37 132L35 134M27 134L29 133M67 136L61 136M16 109L16 113M61 122L61 122M93 47L97 49M72 70L69 67M94 109L94 114M16 120L17 119M95 132L100 130M138 119L135 122M123 136L121 136M104 41L105 42M107 126L108 123M87 126L83 127M100 107L99 112M87 70L88 71M74 78L74 77M88 92L84 93M109 40L109 40M143 145L144 143M40 71L40 72M24 110L24 118M140 89L144 90M59 114L63 114M117 136L115 141M123 170L119 170M87 95L85 96M117 59L120 54M148 149L145 147M74 111L72 108M87 52L86 51M85 104L84 107M115 106L118 108M44 92L44 87M140 53L145 58M51 127L51 122M67 62L64 64M116 159L113 151M94 100L95 103M71 82L69 76M119 112L118 110M59 132L65 127M80 84L83 79M97 111L98 108M145 140L144 143M34 75L34 77M107 163L109 162M56 64L62 60M59 83L57 85M150 114L152 114M93 133L93 137M102 46L97 45M126 143L128 144M35 101L37 104M16 109L16 108M102 87L104 81M127 133L132 133M37 132L33 131M145 123L151 121M124 162L121 166M64 104L71 106M16 117L20 114M54 127L58 127M106 95L105 93M63 47L67 46M97 111L94 109M151 83L151 89M127 77L133 72M134 95L135 96M78 60L82 59M138 61L137 63M105 87L102 87M21 119L21 117M135 122L142 125M162 113L163 107M77 75L76 72M100 48L99 52M102 101L105 100M123 102L126 102M98 67L99 73M91 80L96 79M91 62L90 58M124 162L123 161M115 42L118 44M88 89L84 93M53 110L52 109M71 66L76 68M73 57L73 58M147 85L148 81M49 68L44 71M92 98L93 89M47 141L50 140M74 75L74 75M133 119L135 122M38 88L41 83M109 40L105 42M97 51L99 52M81 129L87 129M60 93L59 90M147 115L145 114M123 170L120 171M138 61L136 62M150 64L151 66M143 145L146 146M24 118L21 117M26 120L33 123M78 60L82 59M121 159L123 161M78 60L78 61M116 54L120 54M120 171L117 171M31 96L33 99M79 134L80 136M57 86L59 86M65 61L64 64M27 119L28 112M152 115L153 114M119 110L118 108M146 77L145 75M86 116L84 115M30 133L29 133M72 91L76 92M34 67L36 66M16 117L15 113M96 119L94 124M75 106L74 107M66 66L63 70M103 158L104 160M135 56L135 60M16 98L23 97M155 107L160 111M63 98L64 104M39 135L43 129M104 146L106 144M120 70L117 65M123 115L119 116M104 115L102 115M117 61L114 60M109 133L107 128M121 131L121 135M42 111L41 106M145 140L148 135M140 101L135 102M54 98L53 98M151 108L144 110M56 51L53 58M53 121L53 125M135 60L136 58M57 69L53 66M109 147L109 149M36 74L40 72M83 79L85 81M71 82L71 89M128 159L130 155M84 61L86 61M107 88L105 93M60 93L56 97M145 123L147 120M125 71L124 70M91 62L89 61M93 133L94 124M107 86L108 84M108 51L113 56M123 105L118 108M56 51L59 59M158 130L156 131M42 60L47 63M52 95L59 90M53 58L48 57M110 114L110 114M105 48L105 47M40 71L38 70M111 109L113 103M103 140L99 138M131 135L139 138M66 55L62 54M54 96L53 95M84 107L85 105M57 69L55 70M147 95L150 93M130 45L135 48M48 112L49 113M75 45L82 50M130 60L134 55M39 140L41 139M140 134L139 135M147 102L151 108M153 130L156 131M83 79L88 75M69 60L73 58M139 127L142 125M101 163L97 159M23 108L22 106M84 107L85 105M125 131L127 133M162 114L156 115M108 76L106 77M56 64L63 65M121 96L126 100M145 58L144 64M97 59L101 60M157 123L153 130M19 86L22 81M131 109L126 106M88 107L89 106M102 87L98 90M103 70L99 73M57 87L57 85M15 113L19 113M104 97L101 95M37 132L43 129M42 114L46 112M59 83L59 86M137 82L137 88M32 87L35 87M140 134L139 129M94 100L89 106M130 60L129 64M20 114L21 117M149 74L145 71M40 137L41 138M51 79L50 74M36 69L31 70M59 86L59 90M75 113L71 115M72 70L76 72M87 61L86 61M69 60L72 65M57 69L60 69M110 73L111 71M90 58L89 61M126 112L126 106M66 90L60 93M107 150L109 151M93 146L96 144M46 67L42 65M88 142L87 144M56 64L60 69M88 89L93 89M113 68L115 74M117 40L116 41M22 95L23 91M38 108L41 106M74 101L73 101M94 53L97 51M79 139L79 137M40 81L44 77M52 118L53 121M66 55L70 58M91 122L94 114M158 97L156 93M135 99L137 99M137 72L134 69M104 47L103 47M153 118L153 118M68 130L68 129M98 143L104 147M111 109L111 113M130 141L123 136M139 129L142 125M130 152L130 155M131 109L128 112M77 102L74 101M106 66L102 66M89 93L88 98M108 64L106 60M73 58L70 58M86 61L89 61M80 92L84 93M79 120L76 116M20 94L23 97M122 63L127 65M34 67L36 69M108 64L109 62M106 115L111 118M31 136L29 133M53 110L49 112M108 88L107 87M130 159L130 155M58 138L55 139M102 126L100 130M24 95L23 97M114 123L115 129M52 67L47 64M139 135L139 138M129 82L127 84M78 141L79 139M99 82L104 81M38 70L40 69M117 60L120 54M118 78L117 81M128 112L130 116M79 121L79 120M36 66L36 69M36 74L38 70M98 157L102 155M115 42L112 42M42 114L40 116M88 105L85 104M126 112L128 112M136 151L138 156M48 131L48 128M43 141L41 138M93 78L90 73M148 78L147 77M107 88L105 87M74 111L78 107M131 161L135 161M130 60L136 62M68 110L65 110M108 123L111 124M78 60L75 57M106 95L106 94M92 69L94 66M132 131L133 133M150 73L152 72M124 122L123 124M129 163L126 162M152 103L147 102M30 129L29 133M99 73L99 74M112 89L115 90M38 108L35 110M118 108L118 110M125 60L127 60M76 131L81 129M101 69L99 73M53 121L58 125M72 88L75 85M57 87L51 88M93 78L96 79M59 59L53 58M147 69L145 71M78 100L74 101M135 122L134 119M87 126L85 122M67 62L69 67M15 113L18 112M63 137L61 136M149 74L147 77M103 147L104 146M47 112L42 116M91 122L88 116M127 152L130 152M122 101L123 102M127 146L128 144M157 103L153 102M40 110L40 116M82 59L82 50M55 106L57 105M53 98L53 95M118 167L119 163M78 74L83 79M97 39L97 39M72 108L71 106M145 71L143 66M44 92L43 89M121 96L117 96M104 160L106 158M58 138L57 135M51 141L50 140M106 134L106 134M85 96L84 93M117 136L112 132M78 41L86 44M120 171L119 170M31 136L27 134M97 159L97 157M137 63L134 69M107 93L110 90M99 74L96 79M47 112L49 113M160 111L163 107M106 163L104 160M93 155L97 157M31 96L30 93M138 110L142 107M116 81L117 81M88 87L87 81M129 121L124 122M151 144L150 145M93 78L90 78M99 38L97 39M163 99L160 97M128 65L129 67M46 112L49 107M121 131L119 125M89 51L86 51M30 129L31 128M59 73L60 69M111 118L112 117M143 145L138 147M123 115L125 118M87 78L83 79M98 79L99 74M83 121L79 121M78 85L78 83M98 143L96 144M62 126L59 132M97 102L94 100M65 127L65 127M50 55L53 58M59 73L64 71M101 163L104 160M97 159L98 157M135 114L137 111M103 140L110 141M78 82L76 85M109 98L117 96M59 114L63 114M68 126L68 129M89 69L90 73M33 123L29 128M76 131L74 126M93 47L90 48M98 67L94 66M16 104L19 103M107 87L105 87M23 131L29 128M43 122L43 128M37 132L43 128M73 57L76 54M44 92L43 92M123 145L123 142M59 106L59 114M75 113L83 109M111 113L110 114M152 103L153 103M125 129L129 128M152 115L152 114M71 49L67 46M74 75L72 70M130 141L128 144M88 71L88 70M88 56L89 57M105 96L105 93M160 111L154 114M16 98L17 101M153 118L150 118M118 115L117 117M55 102L53 98M112 59L114 60M147 95L147 102M44 58L47 63M130 116L135 114M109 56L112 59M58 120L53 121M105 46L104 47M145 71L148 70M138 94L137 94M25 102L23 102M134 95L130 95M70 100L70 97M130 122L129 118M150 93L148 93M149 142L146 141M115 161L116 164M90 86L87 81M76 61L73 58M121 131L123 132M163 94L163 99M62 126L65 127M136 151L136 154M149 117L149 116M159 83L159 85M77 98L74 101M110 75L110 83M49 68L46 67M52 69L50 74M65 111L65 110M46 74L44 71M69 51L70 58M116 100L115 101M129 95L126 100M114 92L116 92M138 94L137 97M115 161L117 164M23 91L29 92M54 127L54 126M100 48L97 49M104 55L103 57M109 85L112 89M89 69L90 73M19 103L22 103M158 97L156 92M100 66L98 61M115 92L115 90M127 152L127 146M123 132L127 133M55 60L53 58M88 77L90 73M19 103L17 106M117 136L121 137M116 54L113 56M84 61L86 61M129 95L130 98M58 100L57 105M160 111L162 113M157 104L157 103M108 88L107 88M133 101L135 99M115 101L113 103M97 51L97 49M118 167L119 170M150 145L148 142M31 96L34 91M94 114L96 113M117 61L117 59M55 106L50 103M75 57L73 58M140 157L136 161M145 140L141 142M26 120L23 124M95 55L94 53M152 72L153 69M106 61L106 60M117 136L115 141M92 69L90 73M127 117L126 114M109 133L110 133M136 161L132 164M35 87L34 85M59 73L57 75M55 102L54 98M61 122L58 125M113 151L110 155M118 107L116 105M72 119L76 116M140 89L139 82M23 131L21 127M125 71L126 71M125 60L127 65M24 88L23 91M108 64L106 61M141 119L143 118M105 100L101 98M39 135L40 137M117 164L119 163M95 102L95 103M86 53L82 50M107 126L105 125M116 151L120 144M44 87L45 86M55 102L55 106M104 53L100 56M120 89L126 91M143 93L140 96M78 123L72 123M140 89L142 87M130 159L131 161M127 152L124 151M39 91L35 101M31 98L27 101M145 68L143 66M100 130L96 135M52 95L49 90M118 141L121 137M78 74L76 72M92 69L93 69M31 86L29 92M145 86L148 91M138 115L143 118M164 101L164 104M105 47L104 47M43 121L41 120M95 55L100 56M109 147L106 144M32 110L28 106M75 105L77 102M57 69L56 64M36 114L40 110M132 52L128 50M129 121L129 118M103 158L102 155M102 75L104 81M49 68L50 74M117 65L113 68M133 48L128 50M125 60L122 63M91 122L94 124M59 59L56 64M70 97L66 99M66 66L65 65M94 44L97 45M65 65L69 67M117 59L116 54M99 38L108 39M127 60L127 61M100 159L102 155M145 147L146 146M158 97L159 100M52 109L49 112M134 95L135 97M88 105L85 105M77 98L70 97M40 117L42 116M149 69L148 70M121 63L122 63M143 113L138 115M63 98L58 100M128 70L129 67M115 171L112 170M147 115L144 110M59 106L62 109M110 73L114 76M53 98L51 98M123 141L121 137M97 102L101 106M97 45L98 43M127 77L125 71M86 53L82 59M41 83L42 86M112 170L109 168M16 109L16 104M68 130L61 136M85 104L78 107M25 102L27 101M74 78L76 78M155 79L150 74M66 97L64 93M62 70L59 73M133 119L129 118M16 104L16 98M152 115L153 118M38 77L34 77M57 135L57 135M28 106L28 112M110 133L111 134M67 49L62 54M123 136L123 141M65 111L62 109M136 151L132 153M16 117L16 117M78 62L85 63M103 142L104 147M144 106L147 102M111 109L115 106M104 160L100 161M89 51L88 56M100 48L105 52M125 118L129 118M148 149L146 146M151 89L150 93M90 57L90 58M162 88L157 89M100 66L101 69M145 68L145 68M135 99L134 101M109 147L111 143M136 151L130 151M162 125L162 120M100 58L101 60M159 83L160 85M108 82L104 81M58 125L54 126M43 119L42 116M144 81L144 79M121 84L124 82M74 126L72 123M145 140L140 140M106 144L110 141M113 117L112 117M128 65L127 65M120 152L120 144M71 66L72 65M110 83L116 82M100 66L95 64M74 81L71 82M163 99L162 95M78 41L82 50M43 73L44 77M42 86L38 89M164 101L159 100M88 98L84 99M26 120L29 128M153 118L158 117M119 117L118 115M92 152L93 146M32 87L34 85M88 56L91 56M68 130L65 127M132 155L130 155M142 64L143 66M90 44L86 44M90 108L94 114M108 123L113 122M118 167L115 166M72 88L71 82M129 82L124 82M72 131L70 126M108 123L103 120M95 64L94 62M103 70L106 66M147 117L149 116M110 85L115 85M130 80L128 80M107 163L106 163M147 120L150 118M115 129L112 132M136 147L138 146M78 124L74 126M117 171L119 170M59 106L57 105M67 124L61 122M146 77L147 77M119 161L115 161M111 124L113 122M111 113L117 112M95 132L96 135M97 59L91 56M126 91L124 88M76 54L82 50M109 62L114 60M50 74L55 70M97 59L98 61M21 86L28 82M130 98L130 95M83 127L85 122M63 65L65 65M151 121L150 118M52 118L54 113M155 86L159 85M150 120L151 121M43 119L40 117M148 149L150 145M109 147L104 146M91 122L88 122M90 108L83 109M68 130L59 132M118 78L121 76M125 131L125 129M43 92L43 89M95 142L98 143M75 113L74 111M100 58L103 57M137 97L135 97M76 68L74 65M149 74L150 73M39 91L44 97M30 129L29 128M71 66L72 70M64 64L62 60M119 112L119 114M115 106L112 112M104 97L105 96M54 80L57 75M43 122L52 118M126 106L126 102M129 67L134 69M123 115L122 120M107 150L104 146M153 138L154 136M55 60L56 64M127 101L126 100M129 128L136 127M130 122L131 123M83 121L83 127M129 82L130 80M72 131L75 134M152 114L153 114M139 65L137 63M127 77L122 72M91 42L92 43M74 126L72 123M105 52L108 51M117 40L124 42M75 45L73 44M112 59L106 60M127 69L129 67M27 119L24 118M63 114L63 114M58 120L58 125M126 100L126 102M76 54L82 59M99 82L96 79M18 124L18 119M124 42L130 45M156 92L156 93M110 133L112 132M97 39L97 42M100 130L94 124M127 101L130 98M72 70L69 76M129 82L128 80M23 124L29 128M109 168L105 166M132 86L127 84M126 112L123 105M110 167L107 163M144 154L136 151M114 162L109 162M117 61L114 64M25 76L29 73M153 89L155 86M124 151L123 145M140 89L138 92M115 92L116 92M105 166L101 163M46 67L47 64M118 115L119 114M16 98L18 92M114 92L112 89M93 78L99 74M88 87L90 86M18 92L19 86M135 56L134 55M127 69L124 70M25 76L24 80M127 101L126 106M18 112L22 106M43 121L40 122M159 83L155 86M84 61L82 59M72 108L73 112M147 115L147 117M136 130L139 129M76 132L78 134M131 109L137 111M127 77L121 75M132 164L135 161M63 98L66 99M103 46L104 41M92 98L99 95M47 141L46 135M69 51L71 49M99 38L97 42M103 147L102 155M157 76L150 74M105 46L103 46M130 45L133 48M141 81L139 82M155 107L151 108M111 71L114 76M150 120L147 120M139 80L141 81M43 92L39 91M152 115L149 117M139 98L140 101M21 127L22 125M57 135L58 132M69 76L64 71M75 105L74 107M130 45L128 50M135 48L133 48M122 68L124 70M105 46L105 46M160 111L156 115M51 81L51 88M139 111L144 110M123 167L119 170M109 98L116 100M87 61L88 56M149 74L145 75M141 119L138 119M49 90L45 86M119 117L123 115M157 76L155 79M68 126L65 127M112 112L118 110M109 85L110 85M42 114L47 112M97 45L97 49M154 70L157 76M108 39L109 40M92 108L95 103M27 134L30 129M106 61L103 57M43 102L44 97M94 44L91 42M130 152L132 153M49 139L50 135M85 147L87 144M122 95L126 100M128 143L126 143M116 118L113 117M137 97L137 94M66 97L70 97M82 143L78 141M97 111L95 108M100 86L97 89M119 75L116 77M131 161L133 158M135 99L135 100M130 141L136 142M22 81L28 82M132 93L137 88M39 62L44 58M25 102L28 106M88 116L94 114M110 167L115 166M108 65L111 66M116 81L116 82M129 125L127 124M75 57L76 54M59 83L57 82M93 133L87 129M129 121L131 123M151 144L148 142M52 67L53 68M145 68L145 71M108 88L110 90M123 142L123 141M39 62L42 60M90 78L90 73M89 69L85 63M23 108L19 113M84 115L83 109M64 64L63 65M116 151L113 143M90 44L93 47M85 104L88 98M162 114L161 118M137 142L136 142M123 145L122 142M108 39L103 40M135 114L138 115M78 85L80 89M25 95L24 95M137 72L139 65M122 68L124 67M124 122L122 120M102 60L106 61M151 83L150 82M147 85L151 89M157 104L158 106M40 72L38 70M25 95L23 91M119 112L117 112M133 72L134 69M50 74L57 75M75 106L74 111M90 86L99 82M126 143L123 141M101 106L105 109M98 137L104 134M164 107L164 104M18 119L21 119M112 40L112 42M71 44L73 44M40 72L38 77M108 123L104 124M159 83L155 79M123 102L119 101M133 119L131 123M127 84L129 87M46 74L45 74M117 96L120 100M145 65L144 64M97 39L91 42M127 133L129 128M78 85L76 92M88 116L83 109M95 132L94 124M98 137L100 130M94 53L91 56M126 86L124 88M79 137L78 134M131 70L129 67M26 88L31 86M139 80L139 82M104 97L105 100M152 115L149 116M105 61L101 60M33 76L35 79M118 156L121 159M78 124L77 125M146 141L148 142M127 77L130 80M79 86L80 89M138 61L137 56M125 60L117 60M119 85L116 82M135 96L135 97M129 125L131 123M127 69L127 70M108 39L109 40M153 138L153 136M108 82L110 83M158 106L163 107M152 72L148 70M23 105L22 103M72 108L74 107M138 147L136 147M59 86L57 85M129 95L132 93M127 77L128 80M87 142L87 144M135 48L140 53M104 131L100 130M162 114L162 113M107 93L105 93M89 69L85 63M103 158L100 161M55 102L56 102M53 125L51 122M122 101L119 101M78 138L78 134M115 106L116 105M144 154L138 156M164 114L162 114M46 126L48 131M58 132L58 127M130 159L128 159M87 61L86 61M118 107L118 104M109 56L105 52M69 92L71 89M104 125L108 123M145 75L144 78M30 133L30 129M22 95L23 97M104 126L100 130M140 157L138 156M120 51L120 54M93 78L94 79M134 79L135 80M55 70L52 69M135 161L133 158M58 100L56 102M88 71L78 74M38 70L36 69M32 110L33 111M107 87L107 86M55 106L49 107M69 76L74 78M56 99L56 97M107 163L108 160M87 126L94 124M108 123L105 125M88 87L82 89M102 48L103 47M82 50L86 51M114 92L117 96M150 73L148 70M135 80L135 82M109 96L105 96M37 67L36 69M49 90L44 92M74 78L74 78M116 82L115 79M54 98L54 96M111 66L114 64M123 136L127 133M120 70L120 73M71 89L67 82M88 70L90 73M67 56L70 58M137 72L145 75M115 46L112 46M138 147L145 147M23 108L18 112M114 123L111 124M127 77L134 79M159 100L160 97M24 95L22 95M25 102L23 105M159 82L162 88M67 49L71 49M46 126L43 128M77 75L77 78M62 86L59 83M92 108L89 106M76 68L72 70M127 69L127 65M142 135L139 138M47 63L53 62M100 107L95 103M67 124L65 127M109 96L104 97M75 139L72 138M93 153L97 157M57 86L57 85M62 57L62 54M35 110L37 104M109 96L107 93M129 125L127 125M142 135L139 135M16 104L17 101M67 49L66 55M46 99L49 100M85 39L91 42M55 70L53 68M132 164L131 161M127 61L127 65M67 62L65 65M126 106L131 106M103 56L103 57M109 98L109 101M102 115L105 109M137 142L138 142M133 101L135 102M82 89L84 93M53 110L59 106M115 90L115 85M124 162L126 162M121 136L121 137M66 55L66 57M119 112L119 114M119 161L124 162M110 102L113 103M147 95L140 101M142 135L139 129M155 107L154 114M63 98L56 97M163 94L162 95M122 120L123 124M49 90L48 96M120 51L124 55M162 95L160 91M97 59L94 62M21 86L24 88M59 114L62 109M42 86L44 87M89 57L90 58M114 162L115 161M44 58L48 57M83 121L85 122M108 88L107 86M152 103L151 108M95 142L99 138M150 82L150 81M115 92L112 89M152 81L155 86M118 141L123 141M91 136L90 134M76 68L76 68M108 64L106 66M105 47L108 51M105 131L107 128M78 141L82 140M125 131L127 133M115 171L118 167M75 139L73 136M43 102L37 104M55 139L50 140M134 79L133 72M91 136L88 134M16 117L17 119M32 72L34 75M122 68L122 63M34 129L37 132M89 138L91 136M43 129L48 131M122 68L117 65M158 97L160 91M126 112L119 110M80 84L79 83M123 45L128 50M153 136L148 135M100 161L100 159M110 75L108 76M90 58L91 56M39 91L34 91M49 107L47 101M77 75L74 75M94 66L94 62M70 97L76 92M61 122L58 117M131 70L134 69M134 79L139 80M71 82L67 82M87 126L88 122M100 66L102 66M62 86L59 90M111 101L110 102M130 60L127 61M127 77L124 80M95 142L93 137M145 114L144 110M115 46L115 42M76 85L78 83M118 139L117 136M138 110L144 110M59 59L62 60M123 115L119 112M66 55L69 51M105 44L105 42M132 93L129 87M50 134L57 135M108 64L108 65M145 123L143 118M109 151L106 158M91 136L93 137M145 58L146 62M150 93L156 93M143 93L148 93M87 144L89 142M62 70L63 65M76 131L72 131M58 120L61 122M19 103L23 97M88 71L88 75M102 126L103 120M110 75L110 73M82 89L80 84M78 124L83 121M155 86L155 79M114 162L115 166M52 114L53 113M138 92L143 93M18 124L22 125M116 100L120 100M42 72L44 71M80 100L80 92M144 106L142 107M105 136L110 141M147 115L151 108M115 46L120 51M115 74L114 76M151 121L147 120M132 124L135 122M118 115L113 117M65 61L69 60M99 138L93 137M39 62L40 66M93 47L94 44M52 95L54 96M146 116L147 117M45 79L51 81M99 95L101 98M43 129L43 128M127 69L126 71M87 80L85 81M138 110L137 111M71 136L73 136M123 136L121 137M63 70L64 71M119 161L116 159M159 82L159 83M88 107L84 107M87 95L89 93M130 70L128 70M33 76L34 77M83 127L81 129M72 91L70 97M97 157L98 157M62 70L60 69M28 83L31 86M151 121L153 130M104 53L99 52M74 111L74 107M59 132L60 133M152 81L155 79M158 105L164 104M59 114L58 117M116 51L112 46M106 158L102 155M136 142L131 135M107 93L106 94M87 81L87 80M139 65L143 66M117 171L115 171M125 60L120 54M73 57L70 58M15 113L16 109M124 162L126 163M122 72L124 70M23 128L22 125M109 151L110 155M95 55L99 52M138 92L132 93M32 110L28 112M59 73L63 80M98 61L101 60M26 120L21 119M116 118L117 117M103 70L102 75M107 150L102 155M88 116L84 115M129 125L129 128M96 119L96 113M100 86L99 82M116 159L115 161M105 44L103 46M134 95L138 92M151 97L150 93M17 107L22 106M86 48L90 48M54 84L57 85M78 60L78 61M33 76L29 73M163 120L162 120M90 44L92 43M109 56L108 51M78 107L78 107M70 119L72 123M136 151L136 147M105 46L112 46M37 104L41 106M74 126L72 131M107 128L109 126M108 39L108 39M101 163L100 161M112 59L115 58M78 41L73 44M139 98L140 96M103 70L102 66M144 106L140 101M51 137L57 135M95 142L96 144M122 142L123 141M159 83L159 85M40 68L40 66M107 150L109 149M63 114L61 122M107 88L102 87M97 59L91 56M78 62L76 61M104 97L101 98M148 81L148 80M134 145L130 151M78 82L78 83M46 99L44 97M113 68L111 66M126 112L119 112M102 75L106 72M18 112L17 107M138 132L133 133M86 61L86 61M145 68L147 69M132 65L129 64M92 69L91 62M56 80L54 84M149 142L148 142M132 155L132 153M108 39L105 42M153 102L159 100M85 63L89 61M46 126L51 122M97 159L93 155M95 55L97 59M137 97L137 99M75 134L78 134M105 46L105 47M158 97L160 97M120 152L123 145M89 151L92 152M95 103L89 106M93 146L89 142M121 84L117 81M102 126L104 126M65 61L66 57M22 81L25 76M53 58L53 62M137 97L135 96M153 136L154 136M158 105L159 102M117 136L111 134M77 75L76 78M99 95L97 98M91 42L86 44M42 72L40 69M153 101L153 102M57 135L58 132M156 115L154 114M164 114L161 118M117 65L118 61M130 141L123 141M125 60L124 55M125 118L127 117M109 96L110 90M136 161L138 156M139 98L137 97M105 100L109 101M148 138L148 135M162 119L162 120M65 127L68 129M136 130L132 131M69 60L70 58M151 66L147 69M138 147L138 146M36 114L27 119M97 45L97 44M106 166L107 163M150 74L152 72M89 69L89 69M141 119L138 115M147 115L150 114M103 46L103 47M17 106L17 107M109 56L104 53M23 102L25 102M67 124L61 122M104 125L104 126M132 65L137 63M95 102L97 102M133 86L135 82M69 51L76 52M33 76L28 82M125 71L122 72M23 124L21 119M85 104L84 101M40 81L45 79M102 48L97 45M101 106L108 102M137 142L138 146M124 67L124 70M37 67L38 70M50 134L58 132M39 135L46 135M123 102L126 100M64 107L71 106M105 48L103 47M132 131L127 133M76 68L76 72M132 86L132 93M40 71L40 69M41 139L38 137M116 51L120 51M72 88L76 92M75 105L75 106M139 127L139 129M88 116L88 122M120 70L122 68M162 114L158 117M121 76L121 75M110 141L115 141M67 56L66 55M15 113L16 113M164 114L162 113M54 84L51 88M99 95L101 95M135 82L137 88M109 62L114 64M153 118L153 114M102 46L103 46M90 78L91 80M99 82L98 79M120 51L118 44M88 92L88 89M134 145L128 144M30 93L29 92M108 39L117 40M153 102L153 103M132 65L136 62M114 123L118 122M78 82L83 79M118 78L119 75M148 135L142 125M56 64L53 62M101 69L102 66M128 56L132 52M149 142L148 138M117 171L118 167M145 123L148 135M92 38L91 42M31 86L34 85M87 95L88 98M132 52L134 55M124 70L121 71M59 59L62 57M122 101L126 100M104 147L97 148M124 80L124 82M162 113L156 115M123 115L119 114M75 113L78 107M139 127L135 122M35 79L38 77M36 74L38 77M114 123L113 122M135 100L135 102M152 81L150 81M78 74L88 75M144 106L151 108M46 135L49 139M112 46L108 51M90 142L93 137M115 106L118 107M110 114L112 117M142 107L140 101M115 58L113 56M75 139L78 138M102 46L104 41M115 42L116 41M76 68L85 63M109 157L106 158M120 144L113 143M88 134L87 129M53 64L53 62M91 62L94 62M118 167L121 166M33 99L35 101M129 161L130 163M158 117L156 115M25 95L31 98M116 81L121 84M48 57L48 57M140 89L143 93M25 102L27 101M50 55L48 57M132 124L131 124M92 69L89 69M46 112L48 112M115 129L109 126M143 93L144 90M108 65L106 72M92 98L89 93M75 85L71 82M90 142L89 142M43 92L44 97M128 56L130 60M58 138L61 136M109 157L108 160M45 86L51 88M58 100L62 106M145 58L150 64M21 86L28 83" fill="none" stroke="#404040" stroke-width="0.45" stroke-opacity="0.55"/><path d="M99.2,38.2 L107.7,38.7 L116.6,40.0 L124.5,42.1 L130.5,44.9 L135.4,48.5 L140.1,52.8 L145.0,58.1 L149.7,64.2 L153.7,70.3 L156.9,76.1 L159.5,81.8 L161.5,87.8 L163.0,94.2 L164.0,100.9 L164.4,107.3 L164.0,113.6 L162.9,119.7 L161.5,124.8 L159.9,128.1 L157.9,130.5 L155.7,133.6 L153.4,138.4 L150.9,144.0 L147.9,149.2 L144.4,153.5 L140.4,157.4 L136.2,160.9 L131.6,164.3 L126.8,167.4 L122.6,169.6 L119.6,170.7 L117.3,171.0 L114.8,170.6 L111.8,169.6 L108.6,168.0 L105.1,165.7 L101.3,162.6 L97.4,158.8 L93.4,155.0 L89.4,151.0 L85.5,146.9 L81.7,143.4 L78.0,140.9 L74.6,139.0 L72.0,137.5 L71.1,136.4 L71.1,135.8 L70.0,135.6 L66.8,135.9 L62.6,136.6 L58.4,137.5 L54.5,138.9 L50.6,140.5 L46.7,141.4 L42.8,141.1 L38.9,140.1 L35.0,138.5 L31.0,136.4 L26.9,133.7 L23.4,130.7 L20.5,127.4 L18.2,123.7 L16.5,120.0 L15.7,116.7 L15.5,113.3 L15.6,109.2 L15.8,103.8 L16.3,97.6 L17.5,91.7 L19.4,86.3 L22.1,81.2 L25.3,76.2 L29.3,71.4 L33.9,66.8 L38.9,62.5 L44.3,58.4 L50.1,54.6 L56.4,50.9 L63.2,47.2 L70.5,43.8 L77.8,41.1 L84.8,39.4 L91.8,38.4 Z" fill="none" stroke="#dadada" stroke-width="3.6" stroke-linejoin="round"/><path d="M99.2,38.2 L107.7,38.7 L116.6,40.0 L124.5,42.1 L130.5,44.9 L135.4,48.5 L140.1,52.8 L145.0,58.1 L149.7,64.2 L153.7,70.3 L156.9,76.1 L159.5,81.8 L161.5,87.8 L163.0,94.2 L164.0,100.9 L164.4,107.3 L164.0,113.6 L162.9,119.7 L161.5,124.8 L159.9,128.1 L157.9,130.5 L155.7,133.6 L153.4,138.4 L150.9,144.0 L147.9,149.2 L144.4,153.5 L140.4,157.4 L136.2,160.9 L131.6,164.3 L126.8,167.4 L122.6,169.6 L119.6,170.7 L117.3,171.0 L114.8,170.6 L111.8,169.6 L108.6,168.0 L105.1,165.7 L101.3,162.6 L97.4,158.8 L93.4,155.0 L89.4,151.0 L85.5,146.9 L81.7,143.4 L78.0,140.9 L74.6,139.0 L72.0,137.5 L71.1,136.4 L71.1,135.8 L70.0,135.6 L66.8,135.9 L62.6,136.6 L58.4,137.5 L54.5,138.9 L50.6,140.5 L46.7,141.4 L42.8,141.1 L38.9,140.1 L35.0,138.5 L31.0,136.4 L26.9,133.7 L23.4,130.7 L20.5,127.4 L18.2,123.7 L16.5,120.0 L15.7,116.7 L15.5,113.3 L15.6,109.2 L15.8,103.8 L16.3,97.6 L17.5,91.7 L19.4,86.3 L22.1,81.2 L25.3,76.2 L29.3,71.4 L33.9,66.8 L38.9,62.5 L44.3,58.4 L50.1,54.6 L56.4,50.9 L63.2,47.2 L70.5,43.8 L77.8,41.1 L84.8,39.4 L91.8,38.4 Z" fill="none" stroke="#a8a8a8" stroke-width="0.9" stroke-dasharray="0.8 2.2" stroke-linejoin="round"/></svg>
<div style="position:absolute;left:569px;top:299px;width:357px;height:289px;background:#f0f0f0;border:1px solid #8c8c8c;border-top:0"></div><div style="position:absolute;left:569px;top:299px;width:359px;height:21px;background:#2d2d2d;border-radius:2px 2px 0 0"></div><div class="ttl" style="left:569px;top:299px;width:359px;text-align:center;color:#9d9d9d">Mesh statistics: scalp</div><div style="position:absolute;left:858.5px;top:304px;width:11px;height:11px;border-radius:50%;background:#7d7d7d"></div><div style="position:absolute;left:882.5px;top:304px;width:11px;height:11px;border-radius:50%;background:#7d7d7d"></div><div style="position:absolute;left:906.5px;top:304px;width:11px;height:11px;border-radius:50%;background:#7d7d7d"></div><div style="position:absolute;left:570px;top:320px;width:357px;height:18px;background:#ebe9ed;border-bottom:1px solid #c6c6c6"></div><div class="mb" style="left:575.5px;top:323px"><u>F</u>ile</div><div class="mb" style="left:601px;top:323px"><u>E</u>dit</div><div class="mb" style="left:628.6px;top:323px"><u>V</u>iew</div><div class="mb" style="left:660.8px;top:323px"><u>I</u>nsert</div><div class="mb" style="left:697.3px;top:323px"><u>T</u>ools</div><div class="mb" style="left:732.3px;top:323px"><u>D</u>esktop</div><div class="mb" style="left:779.6px;top:323px"><u>W</u>indow</div><div class="mb" style="left:825px;top:323px"><u>H</u>elp</div><svg style="position:absolute;left:916px;top:325px" width="8" height="8"><path d="M1,1.5 Q3,1.5 5,4" fill="none" stroke="#000" stroke-width="1.6"/><path d="M6.8,6.8 L2.5,6.2 L6.2,2.5 Z" fill="#000"/></svg><div style="position:absolute;left:570px;top:339px;width:357px;height:22px;background:#ebe9ed;border-bottom:1px solid #c2c2c2"></div><svg style="position:absolute;left:569px;top:339px" width="359" height="22"><path d="M5.2,4.8 h6.5 l3.5,3.5 v8 h-10 z" fill="#f4f8ff" stroke="#7d8fb8" stroke-width="1"/><path d="M11.7,4.8 v3.5 h3.5" fill="#dde6f5" stroke="#7d8fb8" stroke-width="0.8"/><circle cx="5.5" cy="6.1" r="1.8" fill="#f08a4a"/><path d="M21.5,7.8 h4 l1,1 h5 v7 h-10 z" fill="#e0b030" stroke="#a07a18" stroke-width="0.8"/><path d="M21.5,15.8 l2,-5.5 h9.5 l-2,5.5 z" fill="#f8dc70" stroke="#a07a18" stroke-width="0.8"/><path d="M27.5,6.8 q2.5,-2.5 5,0" fill="none" stroke="#4a78c8" stroke-width="1.1"/><path d="M32.8,8.1 l-0.2,-2.6 l-2.2,1.2 z" fill="#4a78c8"/><rect x="40.5" y="4.8" width="11" height="11" fill="#5a5ec8" stroke="#34348a" stroke-width="0.8"/><rect x="42.5" y="5.3" width="7" height="4.5" fill="#eef0fa"/><rect x="43.5" y="12.3" width="3" height="2.5" fill="#222"/><path d="M60.3,4.8 h5 l1.5,4 h-6.5 z" fill="#c8ddf2" stroke="#8a9ab0" stroke-width="0.7"/><path d="M58.3,9.3 h10 l0.5,4.5 h-11 z" fill="#c4c4c4" stroke="#7a7a7a" stroke-width="0.8"/><rect x="59.3" y="13.3" width="8.5" height="2.5" fill="#a8a8a8" stroke="#777" stroke-width="0.6"/><line x1="75.5" y1="3" x2="75.5" y2="19" stroke="#a8a8a8" stroke-width="1"/><rect x="83.1" y="4.8" width="9" height="7" fill="#c8d4ec" stroke="#3a5aa0" stroke-width="0.9"/><rect x="81.1" y="6.8" width="9" height="7" fill="#dfe6f4" stroke="#3a5aa0" stroke-width="0.9"/><ellipse cx="84.6" cy="14.3" rx="2.6" ry="1.8" fill="none" stroke="#3a5aa0" stroke-width="1"/><ellipse cx="88.6" cy="14.3" rx="2.6" ry="1.8" fill="none" stroke="#3a5aa0" stroke-width="1"/><line x1="99.5" y1="3" x2="99.5" y2="19" stroke="#a8a8a8" stroke-width="1"/><defs><linearGradient id="cg1074" x1="0" y1="0" x2="0" y2="1"><stop offset="0" stop-color="#8fb4f0"/><stop offset="0.5" stop-color="#a6e0a0"/><stop offset="1" stop-color="#f5c070"/></linearGradient></defs><rect x="107.5" y="4.8" width="7" height="11" fill="url(#cg1074)" stroke="#3a4a80" stroke-width="0.9"/><rect x="122.7" y="4.8" width="11" height="11" fill="#fff" stroke="#3a4a80" stroke-width="0.9"/><rect x="124.2" y="6.8" width="3" height="2.5" fill="#e03a3a"/><rect x="124.2" y="11.3" width="3" height="2.5" fill="#3a5ae0"/><rect x="128.2" y="7.3" width="4" height="1.2" fill="#444"/><rect x="128.2" y="11.8" width="4" height="1.2" fill="#444"/><line x1="140.5" y1="3" x2="140.5" y2="19" stroke="#a8a8a8" stroke-width="1"/><path d="M150.0,4.8 v10 l2.5,-2.5 l2,4 l1.5,-0.8 l-2,-3.8 h3.5 z" fill="#fff" stroke="#111" stroke-width="0.9"/><rect x="164.7" y="4.8" width="11" height="11" fill="#fff" stroke="#555" stroke-width="0.9"/><rect x="164.7" y="4.8" width="11" height="2" fill="#7a8aa8"/><rect x="170.2" y="7.3" width="5" height="8" fill="#cfcfcf"/><line x1="170.2" y1="7.3" x2="170.2" y2="15.3" stroke="#555" stroke-width="0.8"/></svg>
<div class="tk2" style="position:absolute;left:591px;top:456px;font-size:9.3px;color:#262626">1</div>
<div style="position:absolute;left:595px;top:321px;width:357px;height:290px;background:#f0f0f0;border:1px solid #8c8c8c;border-top:0"></div><div style="position:absolute;left:595px;top:321px;width:359px;height:21px;background:#2d2d2d;border-radius:2px 2px 0 0"></div><div class="ttl" style="left:595px;top:321px;width:359px;text-align:center;color:#9d9d9d">Mesh statistics: skull</div><div style="position:absolute;left:884.5px;top:326px;width:11px;height:11px;border-radius:50%;background:#7d7d7d"></div><div style="position:absolute;left:908.5px;top:326px;width:11px;height:11px;border-radius:50%;background:#7d7d7d"></div><div style="position:absolute;left:932.5px;top:326px;width:11px;height:11px;border-radius:50%;background:#7d7d7d"></div><div style="position:absolute;left:596px;top:342px;width:357px;height:18px;background:#ebe9ed;border-bottom:1px solid #c6c6c6"></div><div class="mb" style="left:601.5px;top:345px"><u>F</u>ile</div><div class="mb" style="left:627px;top:345px"><u>E</u>dit</div><div class="mb" style="left:654.6px;top:345px"><u>V</u>iew</div><div class="mb" style="left:686.8px;top:345px"><u>I</u>nsert</div><div class="mb" style="left:723.3px;top:345px"><u>T</u>ools</div><div class="mb" style="left:758.3px;top:345px"><u>D</u>esktop</div><div class="mb" style="left:805.6px;top:345px"><u>W</u>indow</div><div class="mb" style="left:851px;top:345px"><u>H</u>elp</div><svg style="position:absolute;left:942px;top:347px" width="8" height="8"><path d="M1,1.5 Q3,1.5 5,4" fill="none" stroke="#000" stroke-width="1.6"/><path d="M6.8,6.8 L2.5,6.2 L6.2,2.5 Z" fill="#000"/></svg><div style="position:absolute;left:596px;top:361px;width:357px;height:22px;background:#ebe9ed;border-bottom:1px solid #c2c2c2"></div><svg style="position:absolute;left:595px;top:361px" width="359" height="22"><path d="M5.2,4.8 h6.5 l3.5,3.5 v8 h-10 z" fill="#f4f8ff" stroke="#7d8fb8" stroke-width="1"/><path d="M11.7,4.8 v3.5 h3.5" fill="#dde6f5" stroke="#7d8fb8" stroke-width="0.8"/><circle cx="5.5" cy="6.1" r="1.8" fill="#f08a4a"/><path d="M21.5,7.8 h4 l1,1 h5 v7 h-10 z" fill="#e0b030" stroke="#a07a18" stroke-width="0.8"/><path d="M21.5,15.8 l2,-5.5 h9.5 l-2,5.5 z" fill="#f8dc70" stroke="#a07a18" stroke-width="0.8"/><path d="M27.5,6.8 q2.5,-2.5 5,0" fill="none" stroke="#4a78c8" stroke-width="1.1"/><path d="M32.8,8.1 l-0.2,-2.6 l-2.2,1.2 z" fill="#4a78c8"/><rect x="40.5" y="4.8" width="11" height="11" fill="#5a5ec8" stroke="#34348a" stroke-width="0.8"/><rect x="42.5" y="5.3" width="7" height="4.5" fill="#eef0fa"/><rect x="43.5" y="12.3" width="3" height="2.5" fill="#222"/><path d="M60.3,4.8 h5 l1.5,4 h-6.5 z" fill="#c8ddf2" stroke="#8a9ab0" stroke-width="0.7"/><path d="M58.3,9.3 h10 l0.5,4.5 h-11 z" fill="#c4c4c4" stroke="#7a7a7a" stroke-width="0.8"/><rect x="59.3" y="13.3" width="8.5" height="2.5" fill="#a8a8a8" stroke="#777" stroke-width="0.6"/><line x1="75.5" y1="3" x2="75.5" y2="19" stroke="#a8a8a8" stroke-width="1"/><rect x="83.1" y="4.8" width="9" height="7" fill="#c8d4ec" stroke="#3a5aa0" stroke-width="0.9"/><rect x="81.1" y="6.8" width="9" height="7" fill="#dfe6f4" stroke="#3a5aa0" stroke-width="0.9"/><ellipse cx="84.6" cy="14.3" rx="2.6" ry="1.8" fill="none" stroke="#3a5aa0" stroke-width="1"/><ellipse cx="88.6" cy="14.3" rx="2.6" ry="1.8" fill="none" stroke="#3a5aa0" stroke-width="1"/><line x1="99.5" y1="3" x2="99.5" y2="19" stroke="#a8a8a8" stroke-width="1"/><defs><linearGradient id="cg1074" x1="0" y1="0" x2="0" y2="1"><stop offset="0" stop-color="#8fb4f0"/><stop offset="0.5" stop-color="#a6e0a0"/><stop offset="1" stop-color="#f5c070"/></linearGradient></defs><rect x="107.5" y="4.8" width="7" height="11" fill="url(#cg1074)" stroke="#3a4a80" stroke-width="0.9"/><rect x="122.7" y="4.8" width="11" height="11" fill="#fff" stroke="#3a4a80" stroke-width="0.9"/><rect x="124.2" y="6.8" width="3" height="2.5" fill="#e03a3a"/><rect x="124.2" y="11.3" width="3" height="2.5" fill="#3a5ae0"/><rect x="128.2" y="7.3" width="4" height="1.2" fill="#444"/><rect x="128.2" y="11.8" width="4" height="1.2" fill="#444"/><line x1="140.5" y1="3" x2="140.5" y2="19" stroke="#a8a8a8" stroke-width="1"/><path d="M150.0,4.8 v10 l2.5,-2.5 l2,4 l1.5,-0.8 l-2,-3.8 h3.5 z" fill="#fff" stroke="#111" stroke-width="0.9"/><rect x="164.7" y="4.8" width="11" height="11" fill="#fff" stroke="#555" stroke-width="0.9"/><rect x="164.7" y="4.8" width="11" height="2" fill="#7a8aa8"/><rect x="170.2" y="7.3" width="5" height="8" fill="#cfcfcf"/><line x1="170.2" y1="7.3" x2="170.2" y2="15.3" stroke="#555" stroke-width="0.8"/></svg>
<div style="position:absolute;left:617px;top:472.5px;font-size:9.3px;color:#262626">1</div>
<div style="position:absolute;left:621px;top:346px;width:357px;height:289px;background:#f0f0f0;border:1px solid #8c8c8c;border-top:0"></div><div style="position:absolute;left:621px;top:346px;width:359px;height:21px;background:#2d2d2d;border-radius:2px 2px 0 0"></div><div class="ttl" style="left:621px;top:346px;width:359px;text-align:center;color:#9d9d9d">Mesh statistics: brain</div><div style="position:absolute;left:910.5px;top:351px;width:11px;height:11px;border-radius:50%;background:#7d7d7d"></div><div style="position:absolute;left:934.5px;top:351px;width:11px;height:11px;border-radius:50%;background:#7d7d7d"></div><div style="position:absolute;left:958.5px;top:351px;width:11px;height:11px;border-radius:50%;background:#7d7d7d"></div><div style="position:absolute;left:622px;top:367px;width:357px;height:18px;background:#ebe9ed;border-bottom:1px solid #c6c6c6"></div><div class="mb" style="left:627.8px;top:370px"><u>F</u>ile</div><div class="mb" style="left:653.3px;top:370px"><u>E</u>dit</div><div class="mb" style="left:680.9px;top:370px"><u>V</u>iew</div><div class="mb" style="left:713.0999999999999px;top:370px"><u>I</u>nsert</div><div class="mb" style="left:749.5999999999999px;top:370px"><u>T</u>ools</div><div class="mb" style="left:784.5999999999999px;top:370px"><u>D</u>esktop</div><div class="mb" style="left:831.9px;top:370px"><u>W</u>indow</div><div class="mb" style="left:877.3px;top:370px"><u>H</u>elp</div><svg style="position:absolute;left:968px;top:372px" width="8" height="8"><path d="M1,1.5 Q3,1.5 5,4" fill="none" stroke="#000" stroke-width="1.6"/><path d="M6.8,6.8 L2.5,6.2 L6.2,2.5 Z" fill="#000"/></svg><div style="position:absolute;left:622px;top:386px;width:357px;height:22px;background:#ebe9ed;border-bottom:1px solid #c2c2c2"></div><svg style="position:absolute;left:621px;top:386px" width="359" height="22"><path d="M5.5,4.8 h6.5 l3.5,3.5 v8 h-10 z" fill="#f4f8ff" stroke="#7d8fb8" stroke-width="1"/><path d="M12.0,4.8 v3.5 h3.5" fill="#dde6f5" stroke="#7d8fb8" stroke-width="0.8"/><circle cx="5.8" cy="6.1" r="1.8" fill="#f08a4a"/><path d="M21.8,7.8 h4 l1,1 h5 v7 h-10 z" fill="#e0b030" stroke="#a07a18" stroke-width="0.8"/><path d="M21.8,15.8 l2,-5.5 h9.5 l-2,5.5 z" fill="#f8dc70" stroke="#a07a18" stroke-width="0.8"/><path d="M27.8,6.8 q2.5,-2.5 5,0" fill="none" stroke="#4a78c8" stroke-width="1.1"/><path d="M33.1,8.1 l-0.2,-2.6 l-2.2,1.2 z" fill="#4a78c8"/><rect x="40.8" y="4.8" width="11" height="11" fill="#5a5ec8" stroke="#34348a" stroke-width="0.8"/><rect x="42.8" y="5.3" width="7" height="4.5" fill="#eef0fa"/><rect x="43.8" y="12.3" width="3" height="2.5" fill="#222"/><path d="M60.599999999999994,4.8 h5 l1.5,4 h-6.5 z" fill="#c8ddf2" stroke="#8a9ab0" stroke-width="0.7"/><path d="M58.599999999999994,9.3 h10 l0.5,4.5 h-11 z" fill="#c4c4c4" stroke="#7a7a7a" stroke-width="0.8"/><rect x="59.599999999999994" y="13.3" width="8.5" height="2.5" fill="#a8a8a8" stroke="#777" stroke-width="0.6"/><line x1="75.5" y1="3" x2="75.5" y2="19" stroke="#a8a8a8" stroke-width="1"/><rect x="83.39999999999999" y="4.8" width="9" height="7" fill="#c8d4ec" stroke="#3a5aa0" stroke-width="0.9"/><rect x="81.39999999999999" y="6.8" width="9" height="7" fill="#dfe6f4" stroke="#3a5aa0" stroke-width="0.9"/><ellipse cx="84.89999999999999" cy="14.3" rx="2.6" ry="1.8" fill="none" stroke="#3a5aa0" stroke-width="1"/><ellipse cx="88.89999999999999" cy="14.3" rx="2.6" ry="1.8" fill="none" stroke="#3a5aa0" stroke-width="1"/><line x1="99.5" y1="3" x2="99.5" y2="19" stroke="#a8a8a8" stroke-width="1"/><defs><linearGradient id="cg1074" x1="0" y1="0" x2="0" y2="1"><stop offset="0" stop-color="#8fb4f0"/><stop offset="0.5" stop-color="#a6e0a0"/><stop offset="1" stop-color="#f5c070"/></linearGradient></defs><rect x="107.8" y="4.8" width="7" height="11" fill="url(#cg1074)" stroke="#3a4a80" stroke-width="0.9"/><rect x="123.0" y="4.8" width="11" height="11" fill="#fff" stroke="#3a4a80" stroke-width="0.9"/><rect x="124.5" y="6.8" width="3" height="2.5" fill="#e03a3a"/><rect x="124.5" y="11.3" width="3" height="2.5" fill="#3a5ae0"/><rect x="128.5" y="7.3" width="4" height="1.2" fill="#444"/><rect x="128.5" y="11.8" width="4" height="1.2" fill="#444"/><line x1="141.5" y1="3" x2="141.5" y2="19" stroke="#a8a8a8" stroke-width="1"/><path d="M150.3,4.8 v10 l2.5,-2.5 l2,4 l1.5,-0.8 l-2,-3.8 h3.5 z" fill="#fff" stroke="#111" stroke-width="0.9"/><rect x="165.0" y="4.8" width="11" height="11" fill="#fff" stroke="#555" stroke-width="0.9"/><rect x="165.0" y="4.8" width="11" height="2" fill="#7a8aa8"/><rect x="170.5" y="7.3" width="5" height="8" fill="#cfcfcf"/><line x1="170.5" y1="7.3" x2="170.5" y2="15.3" stroke="#555" stroke-width="0.8"/></svg>
<div style="position:absolute;left:643px;top:497px;font-size:9.3px;color:#262626">10</div>
<div style="position:absolute;left:648px;top:511px;font-size:9.3px;color:#262626">5</div>
<div style="position:absolute;left:649px;top:370px;width:357px;height:289px;background:#f0f0f0;border:1px solid #8c8c8c;border-top:0"></div><div style="position:absolute;left:649px;top:370px;width:359px;height:21px;background:#2d2d2d;border-radius:2px 2px 0 0"></div><div class="ttl" style="left:646.5px;top:370px;width:359px;text-align:center;color:#d9d4cf">Mesh statistics: all tissues combined</div><div style="position:absolute;left:938.5px;top:375px;width:11px;height:11px;border-radius:50%;background:#fbd23c"></div><div style="position:absolute;left:962.5px;top:375px;width:11px;height:11px;border-radius:50%;background:#5ed23c"></div><div style="position:absolute;left:986.5px;top:375px;width:11px;height:11px;border-radius:50%;background:#f33c3c"></div><div style="position:absolute;left:650px;top:391px;width:357px;height:18px;background:#ebe9ed;border-bottom:1px solid #c6c6c6"></div><div class="mb" style="left:656.2px;top:394px"><u>F</u>ile</div><div class="mb" style="left:681.7px;top:394px"><u>E</u>dit</div><div class="mb" style="left:709.3000000000001px;top:394px"><u>V</u>iew</div><div class="mb" style="left:741.5px;top:394px"><u>I</u>nsert</div><div class="mb" style="left:778.0px;top:394px"><u>T</u>ools</div><div class="mb" style="left:813.0px;top:394px"><u>D</u>esktop</div><div class="mb" style="left:860.3000000000001px;top:394px"><u>W</u>indow</div><div class="mb" style="left:905.7px;top:394px"><u>H</u>elp</div><svg style="position:absolute;left:996px;top:396px" width="8" height="8"><path d="M1,1.5 Q3,1.5 5,4" fill="none" stroke="#000" stroke-width="1.6"/><path d="M6.8,6.8 L2.5,6.2 L6.2,2.5 Z" fill="#000"/></svg><div style="position:absolute;left:650px;top:410px;width:357px;height:22px;background:#ebe9ed;border-bottom:1px solid #c2c2c2"></div><svg style="position:absolute;left:649px;top:410px" width="359" height="22"><path d="M5.9,4.8 h6.5 l3.5,3.5 v8 h-10 z" fill="#f4f8ff" stroke="#7d8fb8" stroke-width="1"/><path d="M12.4,4.8 v3.5 h3.5" fill="#dde6f5" stroke="#7d8fb8" stroke-width="0.8"/><circle cx="6.2" cy="6.1" r="1.8" fill="#f08a4a"/><path d="M22.2,7.8 h4 l1,1 h5 v7 h-10 z" fill="#e0b030" stroke="#a07a18" stroke-width="0.8"/><path d="M22.2,15.8 l2,-5.5 h9.5 l-2,5.5 z" fill="#f8dc70" stroke="#a07a18" stroke-width="0.8"/><path d="M28.2,6.8 q2.5,-2.5 5,0" fill="none" stroke="#4a78c8" stroke-width="1.1"/><path d="M33.5,8.1 l-0.2,-2.6 l-2.2,1.2 z" fill="#4a78c8"/><rect x="41.2" y="4.8" width="11" height="11" fill="#5a5ec8" stroke="#34348a" stroke-width="0.8"/><rect x="43.2" y="5.3" width="7" height="4.5" fill="#eef0fa"/><rect x="44.2" y="12.3" width="3" height="2.5" fill="#222"/><path d="M61.0,4.8 h5 l1.5,4 h-6.5 z" fill="#c8ddf2" stroke="#8a9ab0" stroke-width="0.7"/><path d="M59.0,9.3 h10 l0.5,4.5 h-11 z" fill="#c4c4c4" stroke="#7a7a7a" stroke-width="0.8"/><rect x="60.0" y="13.3" width="8.5" height="2.5" fill="#a8a8a8" stroke="#777" stroke-width="0.6"/><line x1="75.5" y1="3" x2="75.5" y2="19" stroke="#a8a8a8" stroke-width="1"/><rect x="83.8" y="4.8" width="9" height="7" fill="#c8d4ec" stroke="#3a5aa0" stroke-width="0.9"/><rect x="81.8" y="6.8" width="9" height="7" fill="#dfe6f4" stroke="#3a5aa0" stroke-width="0.9"/><ellipse cx="85.3" cy="14.3" rx="2.6" ry="1.8" fill="none" stroke="#3a5aa0" stroke-width="1"/><ellipse cx="89.3" cy="14.3" rx="2.6" ry="1.8" fill="none" stroke="#3a5aa0" stroke-width="1"/><line x1="100.5" y1="3" x2="100.5" y2="19" stroke="#a8a8a8" stroke-width="1"/><defs><linearGradient id="cg1074" x1="0" y1="0" x2="0" y2="1"><stop offset="0" stop-color="#8fb4f0"/><stop offset="0.5" stop-color="#a6e0a0"/><stop offset="1" stop-color="#f5c070"/></linearGradient></defs><rect x="108.2" y="4.8" width="7" height="11" fill="url(#cg1074)" stroke="#3a4a80" stroke-width="0.9"/><rect x="123.4" y="4.8" width="11" height="11" fill="#fff" stroke="#3a4a80" stroke-width="0.9"/><rect x="124.9" y="6.8" width="3" height="2.5" fill="#e03a3a"/><rect x="124.9" y="11.3" width="3" height="2.5" fill="#3a5ae0"/><rect x="128.9" y="7.3" width="4" height="1.2" fill="#444"/><rect x="128.9" y="11.8" width="4" height="1.2" fill="#444"/><line x1="141.5" y1="3" x2="141.5" y2="19" stroke="#a8a8a8" stroke-width="1"/><path d="M150.7,4.8 v10 l2.5,-2.5 l2,4 l1.5,-0.8 l-2,-3.8 h3.5 z" fill="#fff" stroke="#111" stroke-width="0.9"/><rect x="165.39999999999998" y="4.8" width="11" height="11" fill="#fff" stroke="#555" stroke-width="0.9"/><rect x="165.39999999999998" y="4.8" width="11" height="2" fill="#7a8aa8"/><rect x="170.89999999999998" y="7.3" width="5" height="8" fill="#cfcfcf"/><line x1="170.89999999999998" y1="7.3" x2="170.89999999999998" y2="15.3" stroke="#555" stroke-width="0.8"/></svg>
<svg style="position:absolute;left:0;top:0" width="1018" height="668"><rect x="696" y="459" width="277" height="26" fill="#fff"/><rect x="725.00" y="484.40" width="8.42" height="0.60" fill="#66a9d8" stroke="#1a1a1a" stroke-width="0.8"/><rect x="733.42" y="480.84" width="8.42" height="4.16" fill="#66a9d8" stroke="#1a1a1a" stroke-width="0.8"/><rect x="741.84" y="475.25" width="8.42" height="9.75" fill="#66a9d8" stroke="#1a1a1a" stroke-width="0.8"/><rect x="750.26" y="466.10" width="8.42" height="18.90" fill="#66a9d8" stroke="#1a1a1a" stroke-width="0.8"/><rect x="758.68" y="462.54" width="8.42" height="22.46" fill="#66a9d8" stroke="#1a1a1a" stroke-width="0.8"/><rect x="767.10" y="459.26" width="8.42" height="25.74" fill="#66a9d8" stroke="#1a1a1a" stroke-width="0.8"/><rect x="775.52" y="463.16" width="8.42" height="21.84" fill="#66a9d8" stroke="#1a1a1a" stroke-width="0.8"/><rect x="783.94" y="465.50" width="8.42" height="19.50" fill="#66a9d8" stroke="#1a1a1a" stroke-width="0.8"/><rect x="792.36" y="466.67" width="8.42" height="18.33" fill="#66a9d8" stroke="#1a1a1a" stroke-width="0.8"/><rect x="800.78" y="468.46" width="8.42" height="16.54" fill="#66a9d8" stroke="#1a1a1a" stroke-width="0.8"/><rect x="809.20" y="469.92" width="8.42" height="15.08" fill="#66a9d8" stroke="#1a1a1a" stroke-width="0.8"/><rect x="817.62" y="470.83" width="8.42" height="14.17" fill="#66a9d8" stroke="#1a1a1a" stroke-width="0.8"/><rect x="826.04" y="472.00" width="8.42" height="13.00" fill="#66a9d8" stroke="#1a1a1a" stroke-width="0.8"/><rect x="834.46" y="474.60" width="8.42" height="10.40" fill="#66a9d8" stroke="#1a1a1a" stroke-width="0.8"/><rect x="842.88" y="477.62" width="8.42" height="7.38" fill="#66a9d8" stroke="#1a1a1a" stroke-width="0.8"/><rect x="851.30" y="479.10" width="8.42" height="5.90" fill="#66a9d8" stroke="#1a1a1a" stroke-width="0.8"/><rect x="859.72" y="480.58" width="8.42" height="4.42" fill="#66a9d8" stroke="#1a1a1a" stroke-width="0.8"/><rect x="868.14" y="481.75" width="8.42" height="3.25" fill="#66a9d8" stroke="#1a1a1a" stroke-width="0.8"/><rect x="876.56" y="482.66" width="8.42" height="2.34" fill="#66a9d8" stroke="#1a1a1a" stroke-width="0.8"/><rect x="884.98" y="483.23" width="8.42" height="1.77" fill="#66a9d8" stroke="#1a1a1a" stroke-width="0.8"/><rect x="893.40" y="483.23" width="8.42" height="1.77" fill="#66a9d8" stroke="#1a1a1a" stroke-width="0.8"/><rect x="901.82" y="483.83" width="8.42" height="1.17" fill="#66a9d8" stroke="#1a1a1a" stroke-width="0.8"/><rect x="910.24" y="484.40" width="8.42" height="0.60" fill="#66a9d8" stroke="#1a1a1a" stroke-width="0.8"/><rect x="696.5" y="459.5" width="276" height="25" fill="none" stroke="#262626" stroke-width="1"/><line x1="708.80" y1="485" x2="708.80" y2="482.5" stroke="#262626" stroke-width="0.7"/><line x1="708.80" y1="459" x2="708.80" y2="461.5" stroke="#262626" stroke-width="0.7"/><text x="708.70" y="495.5" text-anchor="middle" class="tk tn">0</text><line x1="745.30" y1="485" x2="745.30" y2="482.5" stroke="#262626" stroke-width="0.7"/><line x1="745.30" y1="459" x2="745.30" y2="461.5" stroke="#262626" stroke-width="0.7"/><text x="745.20" y="495.5" text-anchor="middle" class="tk tn">2</text><line x1="781.80" y1="485" x2="781.80" y2="482.5" stroke="#262626" stroke-width="0.7"/><line x1="781.80" y1="459" x2="781.80" y2="461.5" stroke="#262626" stroke-width="0.7"/><text x="781.70" y="495.5" text-anchor="middle" class="tk tn">4</text><line x1="818.30" y1="485" x2="818.30" y2="482.5" stroke="#262626" stroke-width="0.7"/><line x1="818.30" y1="459" x2="818.30" y2="461.5" stroke="#262626" stroke-width="0.7"/><text x="818.20" y="495.5" text-anchor="middle" class="tk tn">6</text><line x1="854.80" y1="485" x2="854.80" y2="482.5" stroke="#262626" stroke-width="0.7"/><line x1="854.80" y1="459" x2="854.80" y2="461.5" stroke="#262626" stroke-width="0.7"/><text x="854.70" y="495.5" text-anchor="middle" class="tk tn">8</text><line x1="891.30" y1="485" x2="891.30" y2="482.5" stroke="#262626" stroke-width="0.7"/><line x1="891.30" y1="459" x2="891.30" y2="461.5" stroke="#262626" stroke-width="0.7"/><text x="891.20" y="495.5" text-anchor="middle" class="tk tn">10</text><line x1="927.80" y1="485" x2="927.80" y2="482.5" stroke="#262626" stroke-width="0.7"/><line x1="927.80" y1="459" x2="927.80" y2="461.5" stroke="#262626" stroke-width="0.7"/><text x="927.70" y="495.5" text-anchor="middle" class="tk tn">12</text><line x1="964.30" y1="485" x2="964.30" y2="482.5" stroke="#262626" stroke-width="0.7"/><line x1="964.30" y1="459" x2="964.30" y2="461.5" stroke="#262626" stroke-width="0.7"/><text x="964.20" y="495.5" text-anchor="middle" class="tk tn">14</text><text x="693.1" y="462.20" text-anchor="end" class="tk tn">2</text><text x="693.1" y="475.20" text-anchor="end" class="tk tn">1</text><text x="693.1" y="488.20" text-anchor="end" class="tk tn">0</text><text x="834.5" y="454.5" text-anchor="middle" class="tt">Edge length (mm)</text><text x="834.5" y="508.0" text-anchor="middle" class="tk">mean=4.98 | std=2.16 | min=0.18 | max=13.71</text><text x="697" y="456.5" class="tk"><tspan font-size="10.5">&#215;</tspan>10<tspan dy="-3.8" font-size="7">5</tspan></text><rect x="696" y="526" width="277" height="27" fill="#fff"/><rect x="766.90" y="552.41" width="8.42" height="0.59" fill="#66a9d8" stroke="#1a1a1a" stroke-width="0.8"/><rect x="775.32" y="552.41" width="8.42" height="0.59" fill="#66a9d8" stroke="#1a1a1a" stroke-width="0.8"/><rect x="783.74" y="552.41" width="8.42" height="0.59" fill="#66a9d8" stroke="#1a1a1a" stroke-width="0.8"/><rect x="792.16" y="551.51" width="8.42" height="1.49" fill="#66a9d8" stroke="#1a1a1a" stroke-width="0.8"/><rect x="800.58" y="551.51" width="8.42" height="1.49" fill="#66a9d8" stroke="#1a1a1a" stroke-width="0.8"/><rect x="809.00" y="550.89" width="8.42" height="2.11" fill="#66a9d8" stroke="#1a1a1a" stroke-width="0.8"/><rect x="817.42" y="550.30" width="8.42" height="2.70" fill="#66a9d8" stroke="#1a1a1a" stroke-width="0.8"/><rect x="825.84" y="549.41" width="8.42" height="3.59" fill="#66a9d8" stroke="#1a1a1a" stroke-width="0.8"/><rect x="834.26" y="547.87" width="8.42" height="5.13" fill="#66a9d8" stroke="#1a1a1a" stroke-width="0.8"/><rect x="842.68" y="545.44" width="8.42" height="7.56" fill="#66a9d8" stroke="#1a1a1a" stroke-width="0.8"/><rect x="851.10" y="542.47" width="8.42" height="10.53" fill="#66a9d8" stroke="#1a1a1a" stroke-width="0.8"/><rect x="859.52" y="539.50" width="8.42" height="13.50" fill="#66a9d8" stroke="#1a1a1a" stroke-width="0.8"/><rect x="867.94" y="535.29" width="8.42" height="17.71" fill="#66a9d8" stroke="#1a1a1a" stroke-width="0.8"/><rect x="876.36" y="533.56" width="8.42" height="19.44" fill="#66a9d8" stroke="#1a1a1a" stroke-width="0.8"/><rect x="884.78" y="531.94" width="8.42" height="21.06" fill="#66a9d8" stroke="#1a1a1a" stroke-width="0.8"/><rect x="893.20" y="531.94" width="8.42" height="21.06" fill="#66a9d8" stroke="#1a1a1a" stroke-width="0.8"/><rect x="901.62" y="530.86" width="8.42" height="22.14" fill="#66a9d8" stroke="#1a1a1a" stroke-width="0.8"/><rect x="910.04" y="532.62" width="8.42" height="20.39" fill="#66a9d8" stroke="#1a1a1a" stroke-width="0.8"/><rect x="918.46" y="533.83" width="8.42" height="19.17" fill="#66a9d8" stroke="#1a1a1a" stroke-width="0.8"/><rect x="926.88" y="537.69" width="8.42" height="15.31" fill="#66a9d8" stroke="#1a1a1a" stroke-width="0.8"/><rect x="935.30" y="543.71" width="8.42" height="9.29" fill="#66a9d8" stroke="#1a1a1a" stroke-width="0.8"/><rect x="943.72" y="549.41" width="8.42" height="3.59" fill="#66a9d8" stroke="#1a1a1a" stroke-width="0.8"/><rect x="696.5" y="526.5" width="276" height="26" fill="none" stroke="#262626" stroke-width="1"/><line x1="719.08" y1="553" x2="719.08" y2="550.5" stroke="#262626" stroke-width="0.7"/><line x1="719.08" y1="526" x2="719.08" y2="528.5" stroke="#262626" stroke-width="0.7"/><text x="718.98" y="563.5" text-anchor="middle" class="tk tn">10</text><line x1="745.36" y1="553" x2="745.36" y2="550.5" stroke="#262626" stroke-width="0.7"/><line x1="745.36" y1="526" x2="745.36" y2="528.5" stroke="#262626" stroke-width="0.7"/><text x="745.26" y="563.5" text-anchor="middle" class="tk tn">20</text><line x1="771.64" y1="553" x2="771.64" y2="550.5" stroke="#262626" stroke-width="0.7"/><line x1="771.64" y1="526" x2="771.64" y2="528.5" stroke="#262626" stroke-width="0.7"/><text x="771.54" y="563.5" text-anchor="middle" class="tk tn">30</text><line x1="797.92" y1="553" x2="797.92" y2="550.5" stroke="#262626" stroke-width="0.7"/><line x1="797.92" y1="526" x2="797.92" y2="528.5" stroke="#262626" stroke-width="0.7"/><text x="797.82" y="563.5" text-anchor="middle" class="tk tn">40</text><line x1="824.20" y1="553" x2="824.20" y2="550.5" stroke="#262626" stroke-width="0.7"/><line x1="824.20" y1="526" x2="824.20" y2="528.5" stroke="#262626" stroke-width="0.7"/><text x="824.10" y="563.5" text-anchor="middle" class="tk tn">50</text><line x1="850.48" y1="553" x2="850.48" y2="550.5" stroke="#262626" stroke-width="0.7"/><line x1="850.48" y1="526" x2="850.48" y2="528.5" stroke="#262626" stroke-width="0.7"/><text x="850.38" y="563.5" text-anchor="middle" class="tk tn">60</text><line x1="876.76" y1="553" x2="876.76" y2="550.5" stroke="#262626" stroke-width="0.7"/><line x1="876.76" y1="526" x2="876.76" y2="528.5" stroke="#262626" stroke-width="0.7"/><text x="876.66" y="563.5" text-anchor="middle" class="tk tn">70</text><line x1="903.04" y1="553" x2="903.04" y2="550.5" stroke="#262626" stroke-width="0.7"/><line x1="903.04" y1="526" x2="903.04" y2="528.5" stroke="#262626" stroke-width="0.7"/><text x="902.94" y="563.5" text-anchor="middle" class="tk tn">80</text><line x1="929.32" y1="553" x2="929.32" y2="550.5" stroke="#262626" stroke-width="0.7"/><line x1="929.32" y1="526" x2="929.32" y2="528.5" stroke="#262626" stroke-width="0.7"/><text x="929.22" y="563.5" text-anchor="middle" class="tk tn">90</text><line x1="955.60" y1="553" x2="955.60" y2="550.5" stroke="#262626" stroke-width="0.7"/><line x1="955.60" y1="526" x2="955.60" y2="528.5" stroke="#262626" stroke-width="0.7"/><text x="955.50" y="563.5" text-anchor="middle" class="tk tn">100</text><text x="693.1" y="529.20" text-anchor="end" class="tk tn">4</text><text x="693.1" y="542.70" text-anchor="end" class="tk tn">2</text><text x="693.1" y="556.20" text-anchor="end" class="tk tn">0</text><text x="834.5" y="521.5" text-anchor="middle" class="tt">Mesh quality (%%)</text><text x="834.5" y="576.0" text-anchor="middle" class="tk">mean=74.44 | std=13.60 | min=6.28 | max=100.00</text><text x="697" y="523.5" class="tk"><tspan font-size="10.5">&#215;</tspan>10<tspan dy="-3.8" font-size="7">4</tspan></text><rect x="696" y="594" width="277" height="27" fill="#fff"/><rect x="708.50" y="594.00" width="8.42" height="27.00" fill="#66a9d8" stroke="#1a1a1a" stroke-width="0.8"/><rect x="716.92" y="599.67" width="8.42" height="21.33" fill="#66a9d8" stroke="#1a1a1a" stroke-width="0.8"/><rect x="725.34" y="608.04" width="8.42" height="12.96" fill="#66a9d8" stroke="#1a1a1a" stroke-width="0.8"/><rect x="733.76" y="615.06" width="8.42" height="5.94" fill="#66a9d8" stroke="#1a1a1a" stroke-width="0.8"/><rect x="742.18" y="617.49" width="8.42" height="3.51" fill="#66a9d8" stroke="#1a1a1a" stroke-width="0.8"/><rect x="750.60" y="618.62" width="8.42" height="2.38" fill="#66a9d8" stroke="#1a1a1a" stroke-width="0.8"/><rect x="759.02" y="619.22" width="8.42" height="1.78" fill="#66a9d8" stroke="#1a1a1a" stroke-width="0.8"/><rect x="767.44" y="619.22" width="8.42" height="1.78" fill="#66a9d8" stroke="#1a1a1a" stroke-width="0.8"/><rect x="775.86" y="620.41" width="8.42" height="0.59" fill="#66a9d8" stroke="#1a1a1a" stroke-width="0.8"/><rect x="784.28" y="620.41" width="8.42" height="0.59" fill="#66a9d8" stroke="#1a1a1a" stroke-width="0.8"/><rect x="792.70" y="619.51" width="8.42" height="1.49" fill="#66a9d8" stroke="#1a1a1a" stroke-width="0.8"/><rect x="801.12" y="619.51" width="8.42" height="1.49" fill="#66a9d8" stroke="#1a1a1a" stroke-width="0.8"/><rect x="809.54" y="619.51" width="8.42" height="1.49" fill="#66a9d8" stroke="#1a1a1a" stroke-width="0.8"/><rect x="817.96" y="620.41" width="8.42" height="0.59" fill="#66a9d8" stroke="#1a1a1a" stroke-width="0.8"/><rect x="826.38" y="620.41" width="8.42" height="0.59" fill="#66a9d8" stroke="#1a1a1a" stroke-width="0.8"/><rect x="834.80" y="620.41" width="8.42" height="0.59" fill="#66a9d8" stroke="#1a1a1a" stroke-width="0.8"/><rect x="696.5" y="594.5" width="276" height="26" fill="none" stroke="#262626" stroke-width="1"/><line x1="708.70" y1="621" x2="708.70" y2="618.5" stroke="#262626" stroke-width="0.7"/><line x1="708.70" y1="594" x2="708.70" y2="596.5" stroke="#262626" stroke-width="0.7"/><text x="708.60" y="631.5" text-anchor="middle" class="tk tn">0</text><line x1="748.80" y1="621" x2="748.80" y2="618.5" stroke="#262626" stroke-width="0.7"/><line x1="748.80" y1="594" x2="748.80" y2="596.5" stroke="#262626" stroke-width="0.7"/><text x="748.70" y="631.5" text-anchor="middle" class="tk tn">20</text><line x1="788.90" y1="621" x2="788.90" y2="618.5" stroke="#262626" stroke-width="0.7"/><line x1="788.90" y1="594" x2="788.90" y2="596.5" stroke="#262626" stroke-width="0.7"/><text x="788.80" y="631.5" text-anchor="middle" class="tk tn">40</text><line x1="829.00" y1="621" x2="829.00" y2="618.5" stroke="#262626" stroke-width="0.7"/><line x1="829.00" y1="594" x2="829.00" y2="596.5" stroke="#262626" stroke-width="0.7"/><text x="828.90" y="631.5" text-anchor="middle" class="tk tn">60</text><line x1="869.10" y1="621" x2="869.10" y2="618.5" stroke="#262626" stroke-width="0.7"/><line x1="869.10" y1="594" x2="869.10" y2="596.5" stroke="#262626" stroke-width="0.7"/><text x="869.00" y="631.5" text-anchor="middle" class="tk tn">80</text><line x1="909.20" y1="621" x2="909.20" y2="618.5" stroke="#262626" stroke-width="0.7"/><line x1="909.20" y1="594" x2="909.20" y2="596.5" stroke="#262626" stroke-width="0.7"/><text x="909.10" y="631.5" text-anchor="middle" class="tk tn">100</text><line x1="949.30" y1="621" x2="949.30" y2="618.5" stroke="#262626" stroke-width="0.7"/><line x1="949.30" y1="594" x2="949.30" y2="596.5" stroke="#262626" stroke-width="0.7"/><text x="949.20" y="631.5" text-anchor="middle" class="tk tn">120</text><text x="693.1" y="597.20" text-anchor="end" class="tk tn">10</text><text x="693.1" y="610.70" text-anchor="end" class="tk tn">5</text><text x="693.1" y="624.20" text-anchor="end" class="tk tn">0</text><text x="834.5" y="589.5" text-anchor="middle" class="tt">Tetrahedron volume (mm3)</text><text x="834.5" y="644.0" text-anchor="middle" class="tk">mean=15.13 | std=18.49 | min=0.00 | max=123.51 | sum=5120072.60</text><text x="697" y="591.5" class="tk"><tspan font-size="10.5">&#215;</tspan>10<tspan dy="-3.8" font-size="7">4</tspan></text></svg>
<div style="left:9px;top:268px;width:0;height:33px;border-left:1px dotted #808080"></div>
<div style="left:10px;top:281px;width:12px;height:0;border-top:1px dotted #808080"></div>
<div style="left:10px;top:301px;width:12px;height:0;border-top:1px dotted #808080"></div>
<div style="left:22px;top:271px;width:93px;height:18px;background:#bcd0e6;border:1px solid #6389c9"></div>
<div style="left:22px;top:291px;width:181px;height:18px;background:#bcd0e6;border:1px solid #6389c9"></div>
<div class="tr" style="left:41.5px;top:275px">cortex_15002V</div>
<div class="tr" style="left:41.5px;top:295px">FEM 60349V (iso2mesh, 3 layers)</div>
<div style="left:114px;top:136px;width:179px;height:139px;background:#fff;border:1px solid #a0a0a0;"></div>
<div style="left:117px;top:253px;width:175px;height:20px;background:#3059a8"></div>
<div class="mi" style="left:140.5px;top:142.5px">Display</div>
<div class="mi" style="left:140.5px;top:162.5px">Set surface type</div>
<div class="mi" style="left:140.5px;top:190.5px">MRI registration</div>
<div class="mi" style="left:140.5px;top:210.5px">Align manually on...</div>
<div class="mi" style="left:140.5px;top:236.5px">Smooth surface</div>
<div class="mi" style="left:140.5px;top:256.5px;color:#fff">Compute mesh statistics</div>
<div style="left:121px;top:182px;width:168px;height:0;border-top:1px solid #8c8c8c"></div>
<svg style="position:absolute;left:278px;top:164px" width="6" height="10"><path d="M0.5,0.5 L4.5,5 L0.5,9.5 Z" fill="#000"/></svg>
<svg style="position:absolute;left:278px;top:192px" width="6" height="10"><path d="M0.5,0.5 L4.5,5 L0.5,9.5 Z" fill="#000"/></svg>
<svg style="position:absolute;left:278px;top:212px" width="6" height="10"><path d="M0.5,0.5 L4.5,5 L0.5,9.5 Z" fill="#000"/></svg>
<div style="left:201px;top:225px;width:0;height:7px;border-left:1px dotted #666"></div>
<div style="left:200px;top:305px;width:179px;height:224px;background:#fff;border:1px solid #a0a0a0;box-shadow:-6px 6px 10px rgba(0,0,0,0.10);"></div>
<div style="left:203px;top:396px;width:175px;height:19px;background:#3059a8"></div>
<div class="mi" style="left:226.5px;top:311.5px">Display</div>
<div class="mi" style="left:226.5px;top:339.5px">Extract surfaces</div>
<div class="mi" style="left:226.5px;top:359.5px">Merge layers</div>
<div class="mi" style="left:226.5px;top:379.5px">Convert tetra/hexa</div>
<div class="mi" style="left:226.5px;top:427.5px">Resect neck</div>
<div class="mi" style="left:226.5px;top:455.5px">Compute FEM tensors</div>
<div class="mi" style="left:226.5px;top:483.5px">Align manually on...</div>
<div class="mi" style="left:226.5px;top:511.5px">File</div>
<div class="mi" style="left:226.5px;top:399.5px;color:#fff">Compute mesh statistics</div>
<div style="left:207px;top:331px;width:168px;height:0;border-top:1px solid #8c8c8c"></div>
<div style="left:207px;top:419px;width:168px;height:0;border-top:1px solid #8c8c8c"></div>
<div style="left:207px;top:447px;width:168px;height:0;border-top:1px solid #8c8c8c"></div>
<div style="left:207px;top:475px;width:168px;height:0;border-top:1px solid #8c8c8c"></div>
<div style="left:207px;top:503px;width:168px;height:0;border-top:1px solid #8c8c8c"></div>
<svg style="position:absolute;left:364px;top:485px" width="6" height="10"><path d="M0.5,0.5 L4.5,5 L0.5,9.5 Z" fill="#000"/></svg>
<svg style="position:absolute;left:364px;top:513px" width="6" height="10"><path d="M0.5,0.5 L4.5,5 L0.5,9.5 Z" fill="#000"/></svg>
<svg style="position:absolute;left:0;top:0" width="1018" height="668"><path d="M121,149.4 L124,146.20000000000002 H130 L133,149.4 L130,152.6 H124 Z" fill="#fff" stroke="#000" stroke-width="1.1"/><ellipse cx="127" cy="149.4" rx="3.2" ry="2.9" fill="#2f4f78"/><rect x="124.8" y="147.9" width="2.2" height="2.2" fill="#fff"/><path d="M124,146.20000000000002 H130" stroke="#000" stroke-width="1.6"/><circle cx="127" cy="169" r="3.7" fill="#c4c4c4" stroke="#6a6a6a" stroke-width="0.9"/><rect x="120" y="189.5" width="3.6" height="9" rx="1.8" fill="#bdbdbd" stroke="#000" stroke-width="1"/><rect x="123.6" y="189.5" width="3.6" height="9" rx="1.8" fill="#bdbdbd" stroke="#000" stroke-width="1"/><path d="M128.5,196 a3.6,3.6 0 1,1 7,0 v3 q0,2 -1.5,2.5 v2 h-4 v-2 q-1.5,-0.5 -1.5,-2.5 z" fill="#fff" stroke="#000" stroke-width="1"/><rect x="130.2" y="197" width="1.6" height="1.8" fill="#000"/><rect x="132.8" y="197" width="1.6" height="1.8" fill="#000"/><path d="M122,202 h5 M122,202 l1.5,-1.5 M122,202 l1.5,1.5" stroke="#000" stroke-width="1" fill="none"/><rect x="120" y="210.0" width="3.6" height="9" rx="1.8" fill="#bdbdbd" stroke="#000" stroke-width="1"/><rect x="123.6" y="210.0" width="3.6" height="9" rx="1.8" fill="#bdbdbd" stroke="#000" stroke-width="1"/><path d="M128.5,216.5 a3.6,3.6 0 1,1 7,0 v3 q0,2 -1.5,2.5 v2 h-4 v-2 q-1.5,-0.5 -1.5,-2.5 z" fill="#fff" stroke="#000" stroke-width="1"/><rect x="130.2" y="217.5" width="1.6" height="1.8" fill="#000"/><rect x="132.8" y="217.5" width="1.6" height="1.8" fill="#000"/><path d="M122,222.5 h5 M122,222.5 l1.5,-1.5 M122,222.5 l1.5,1.5" stroke="#000" stroke-width="1" fill="none"/><circle cx="126.8" cy="242.4" r="7.8" fill="#a0a0a0"/><circle cx="126.8" cy="242.4" r="7" fill="#2c2c2c"/><path d="M123.16,244.50 A4.2,4.2 0 0,1 127.53,238.26" fill="none" stroke="#d4d4d4" stroke-width="2.6"/><path d="M129.39,239.09 L127.98,235.70 L127.08,240.82 Z" fill="#d4d4d4"/><path d="M130.44,240.30 A4.2,4.2 0 0,1 126.07,246.54" fill="none" stroke="#d4d4d4" stroke-width="2.6"/><path d="M124.21,245.71 L125.62,249.10 L126.52,243.98 Z" fill="#d4d4d4"/><rect x="120" y="255" width="15" height="12" fill="#fff"/><line x1="120" y1="255" x2="135" y2="255" stroke="#4a6ab8" stroke-width="0.8"/><line x1="120.0" y1="255" x2="120.0" y2="267" stroke="#4a6ab8" stroke-width="0.8"/><line x1="120" y1="258" x2="135" y2="258" stroke="#4a6ab8" stroke-width="0.8"/><line x1="123.75" y1="255" x2="123.75" y2="267" stroke="#4a6ab8" stroke-width="0.8"/><line x1="120" y1="261" x2="135" y2="261" stroke="#4a6ab8" stroke-width="0.8"/><line x1="127.5" y1="255" x2="127.5" y2="267" stroke="#4a6ab8" stroke-width="0.8"/><line x1="120" y1="264" x2="135" y2="264" stroke="#4a6ab8" stroke-width="0.8"/><line x1="131.25" y1="255" x2="131.25" y2="267" stroke="#4a6ab8" stroke-width="0.8"/><line x1="120" y1="267" x2="135" y2="267" stroke="#4a6ab8" stroke-width="0.8"/><line x1="135.0" y1="255" x2="135.0" y2="267" stroke="#4a6ab8" stroke-width="0.8"/><rect x="122.0" y="264" width="1.2" height="3" fill="#707070"/><rect x="123.7" y="261" width="1.2" height="6" fill="#707070"/><rect x="125.4" y="258" width="1.2" height="9" fill="#707070"/><rect x="127.1" y="256" width="1.2" height="11" fill="#707070"/><rect x="128.8" y="258" width="1.2" height="9" fill="#707070"/><rect x="130.5" y="261" width="1.2" height="6" fill="#707070"/><rect x="132.2" y="263" width="1.2" height="4" fill="#707070"/><path d="M120,254.5 V267.5 H135" fill="none" stroke="#000" stroke-width="1.3" stroke-dasharray="1.2 1.2"/><path d="M207,318.5 L210,315.3 H216 L219,318.5 L216,321.7 H210 Z" fill="#fff" stroke="#000" stroke-width="1.1"/><ellipse cx="213" cy="318.5" rx="3.2" ry="2.9" fill="#2f4f78"/><rect x="210.8" y="317.0" width="2.2" height="2.2" fill="#fff"/><path d="M210,315.3 H216" stroke="#000" stroke-width="1.6"/><ellipse cx="213.3" cy="344.6" rx="3.7" ry="3.1" fill="#fff" stroke="#000" stroke-width="1.4"/><rect x="210.5" y="347.6" width="5.8" height="1.6" fill="#333"/><path d="M210,350.8 L211,349 H215.6 L216.6,350.8 Z" fill="#8a8a8a"/><circle cx="217.2" cy="344.4" r="0.7" fill="#777"/><ellipse cx="213.3" cy="364.6" rx="3.7" ry="3.1" fill="#fff" stroke="#000" stroke-width="1.4"/><rect x="210.5" y="367.6" width="5.8" height="1.6" fill="#333"/><path d="M210,370.8 L211,369 H215.6 L216.6,370.8 Z" fill="#8a8a8a"/><circle cx="217.2" cy="364.4" r="0.7" fill="#777"/><ellipse cx="213.3" cy="384.6" rx="3.7" ry="3.1" fill="#fff" stroke="#000" stroke-width="1.4"/><rect x="210.5" y="387.6" width="5.8" height="1.6" fill="#333"/><path d="M210,390.8 L211,389 H215.6 L216.6,390.8 Z" fill="#8a8a8a"/><circle cx="217.2" cy="384.4" r="0.7" fill="#777"/><ellipse cx="213.3" cy="432.6" rx="3.7" ry="3.1" fill="#fff" stroke="#000" stroke-width="1.4"/><rect x="210.5" y="435.6" width="5.8" height="1.6" fill="#333"/><path d="M210,438.8 L211,437 H215.6 L216.6,438.8 Z" fill="#8a8a8a"/><circle cx="217.2" cy="432.4" r="0.7" fill="#777"/><ellipse cx="213.3" cy="460.6" rx="3.7" ry="3.1" fill="#fff" stroke="#000" stroke-width="1.4"/><rect x="210.5" y="463.6" width="5.8" height="1.6" fill="#333"/><path d="M210,466.8 L211,465 H215.6 L216.6,466.8 Z" fill="#8a8a8a"/><circle cx="217.2" cy="460.4" r="0.7" fill="#777"/><rect x="206" y="398.5" width="15" height="12" fill="#fff"/><line x1="206" y1="398.5" x2="221" y2="398.5" stroke="#4a6ab8" stroke-width="0.8"/><line x1="206.0" y1="398.5" x2="206.0" y2="410.5" stroke="#4a6ab8" stroke-width="0.8"/><line x1="206" y1="401.5" x2="221" y2="401.5" stroke="#4a6ab8" stroke-width="0.8"/><line x1="209.75" y1="398.5" x2="209.75" y2="410.5" stroke="#4a6ab8" stroke-width="0.8"/><line x1="206" y1="404.5" x2="221" y2="404.5" stroke="#4a6ab8" stroke-width="0.8"/><line x1="213.5" y1="398.5" x2="213.5" y2="410.5" stroke="#4a6ab8" stroke-width="0.8"/><line x1="206" y1="407.5" x2="221" y2="407.5" stroke="#4a6ab8" stroke-width="0.8"/><line x1="217.25" y1="398.5" x2="217.25" y2="410.5" stroke="#4a6ab8" stroke-width="0.8"/><line x1="206" y1="410.5" x2="221" y2="410.5" stroke="#4a6ab8" stroke-width="0.8"/><line x1="221.0" y1="398.5" x2="221.0" y2="410.5" stroke="#4a6ab8" stroke-width="0.8"/><rect x="208.0" y="407.5" width="1.2" height="3" fill="#707070"/><rect x="209.7" y="404.5" width="1.2" height="6" fill="#707070"/><rect x="211.4" y="401.5" width="1.2" height="9" fill="#707070"/><rect x="213.1" y="399.5" width="1.2" height="11" fill="#707070"/><rect x="214.8" y="401.5" width="1.2" height="9" fill="#707070"/><rect x="216.5" y="404.5" width="1.2" height="6" fill="#707070"/><rect x="218.2" y="406.5" width="1.2" height="4" fill="#707070"/><path d="M206,398.0 V411.0 H221" fill="none" stroke="#000" stroke-width="1.3" stroke-dasharray="1.2 1.2"/><rect x="206" y="482.5" width="3.6" height="9" rx="1.8" fill="#bdbdbd" stroke="#000" stroke-width="1"/><rect x="209.6" y="482.5" width="3.6" height="9" rx="1.8" fill="#bdbdbd" stroke="#000" stroke-width="1"/><path d="M214.5,489 a3.6,3.6 0 1,1 7,0 v3 q0,2 -1.5,2.5 v2 h-4 v-2 q-1.5,-0.5 -1.5,-2.5 z" fill="#fff" stroke="#000" stroke-width="1"/><rect x="216.2" y="490" width="1.6" height="1.8" fill="#000"/><rect x="218.8" y="490" width="1.6" height="1.8" fill="#000"/><path d="M208,495 h5 M208,495 l1.5,-1.5 M208,495 l1.5,1.5" stroke="#000" stroke-width="1" fill="none"/><path d="M206.2,519 L211.2,516.5 L215.2,511 L219.7,523 L215.2,520.5 L212.7,524.5 Z" fill="#6a6a6a"/><path d="M211.2,516.5 L215.2,511 L215.2,520.5 L212.7,524.5 Z" fill="#474747"/><ellipse cx="30.5" cy="281.0" rx="4.3" ry="4.8" fill="none" stroke="#000" stroke-width="1.1"/><rect x="29.5" y="275.5" width="2" height="2.2" fill="#bcd0e6"/><rect x="29.5" y="284.5" width="2" height="2.2" fill="#bcd0e6"/><path d="M29.5,277.1 v1.5 M31.5,277.1 v1.5 M29.5,283.5 v1.5 M31.5,283.5 v1.5" stroke="#000" stroke-width="0.9"/><ellipse cx="30.8" cy="300.1" rx="3.7" ry="3.1" fill="#fff" stroke="#000" stroke-width="1.4"/><rect x="28.0" y="303.1" width="5.8" height="1.6" fill="#333"/><path d="M27.5,306.3 L28.5,304.5 H33.1 L34.1,306.3 Z" fill="#8a8a8a"/><circle cx="34.7" cy="299.9" r="0.7" fill="#777"/></svg>
</body></html>
